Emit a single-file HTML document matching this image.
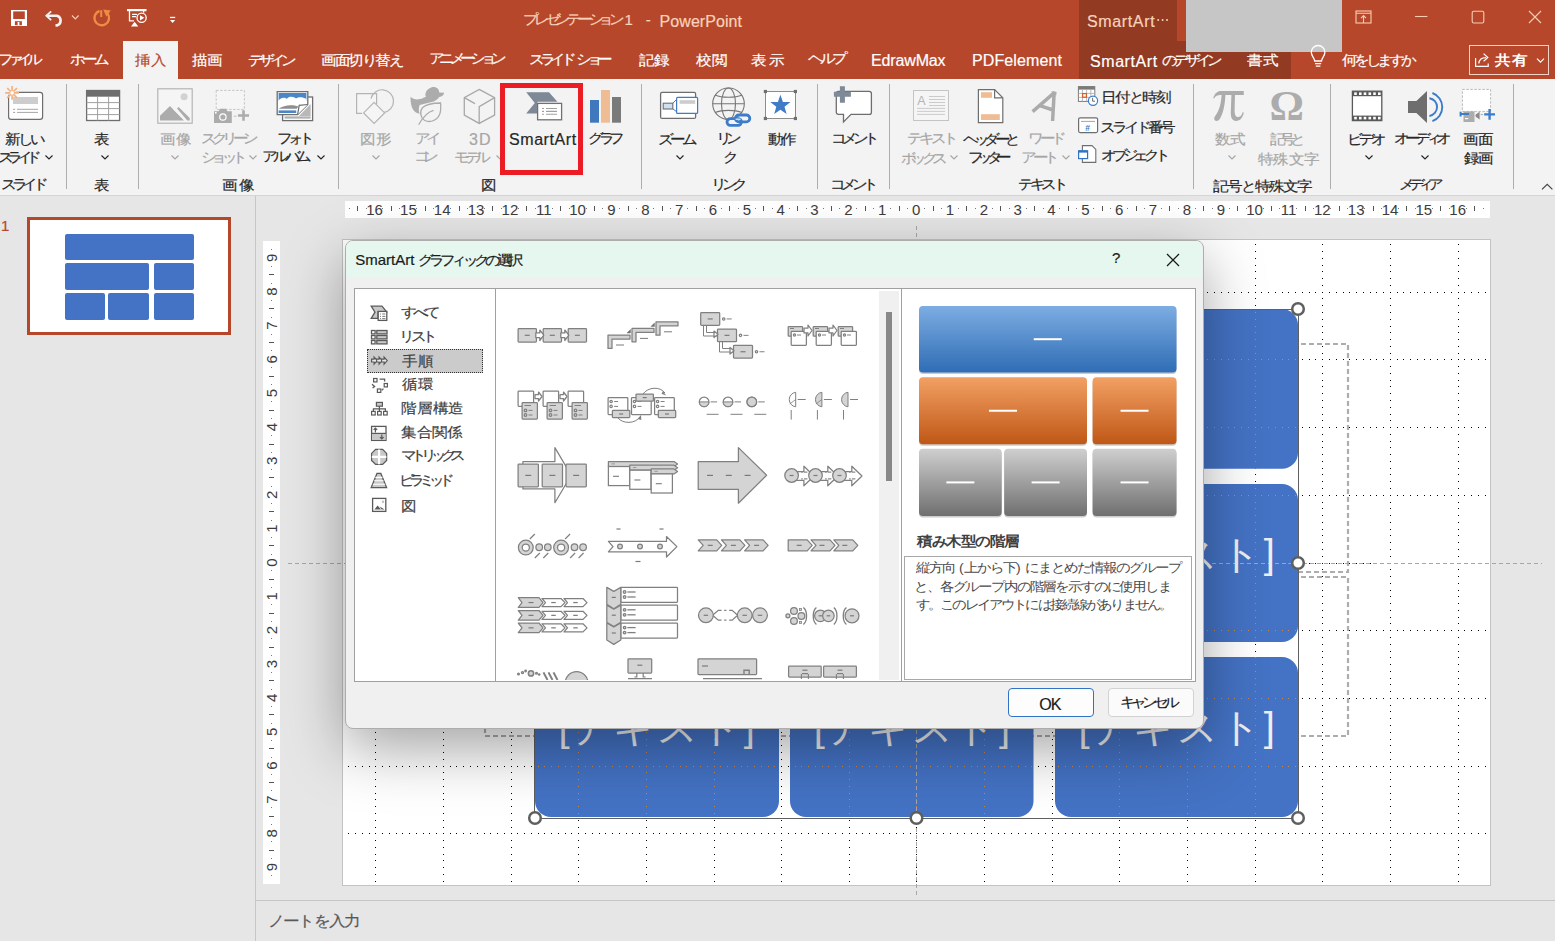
<!DOCTYPE html>
<html><head><meta charset="utf-8">
<style>
*{box-sizing:border-box;margin:0;padding:0}
html,body{width:1555px;height:941px;overflow:hidden;background:#E6E6E6;font-family:"Liberation Sans",sans-serif;color:#262626;position:relative}
.a{position:absolute}
.t{position:absolute;white-space:pre;line-height:1;-webkit-text-stroke:0.2px currentColor}
svg{position:absolute;overflow:visible}
</style></head><body>
<div class="a" style="left:0;top:0;width:1555px;height:79px;background:#B7472A"></div><div class="a" style="left:1079px;top:0;width:98px;height:41px;background:#923A22"></div><div class="a" style="left:1079px;top:41px;width:212px;height:38px;background:#923A22"></div><div class="a" style="left:1186px;top:0;width:156px;height:52px;background:#C6C6C6"></div><div class="t" style="left:523.0px;top:12.2px;font-size:15px;color:#F7D2BC;letter-spacing:-4.25px;transform:scaleY(0.9);transform-origin:0 0">プレゼンテーション</div><div class="t" style="left:624.5px;top:12.0px;font-size:15px;color:#F7D2BC">1</div><div class="t" style="left:645.7px;top:11.5px;font-size:15px;color:#F7D2BC">-</div><div class="t" style="left:659.6px;top:13.5px;font-size:16px;color:#F7D2BC;letter-spacing:0.06px">PowerPoint</div><div class="t" style="left:1087.0px;top:13.5px;font-size:16px;color:#F7D2BC;letter-spacing:0.64px">SmartArt</div><svg style="left:0;top:0" width="1200" height="40"><g fill="#F7D2BC"><circle cx="1158.2" cy="20" r="1"/><circle cx="1162.6" cy="20" r="1"/><circle cx="1167" cy="20" r="1"/></g></svg><div class="a" style="left:123px;top:41px;width:55px;height:38px;background:#F3F3F3"></div><div class="t" style="left:-2.0px;top:52.2px;font-size:15px;color:#FFFFFF;letter-spacing:-5.33px;transform:scaleY(0.9);transform-origin:0 0">ファイル</div><div class="t" style="left:70.0px;top:52.2px;font-size:15px;color:#FFFFFF;letter-spacing:-3.00px;transform:scaleY(0.9);transform-origin:0 0">ホーム</div><div class="t" style="left:192.0px;top:53.1px;font-size:15px;color:#FFFFFF;transform:scaleY(0.9);transform-origin:0 0">描画</div><div class="t" style="left:248.0px;top:53.1px;font-size:15px;color:#FFFFFF;letter-spacing:-4.00px;transform:scaleY(0.9);transform-origin:0 0">デザイン</div><div class="t" style="left:321.0px;top:53.1px;font-size:15px;color:#FFFFFF;letter-spacing:-1.40px;transform:scaleY(0.9);transform-origin:0 0">画面切り替え</div><div class="t" style="left:429.0px;top:51.3px;font-size:15px;color:#FFFFFF;letter-spacing:-4.67px;transform:scaleY(0.9);transform-origin:0 0">アニメーション</div><div class="t" style="left:529.0px;top:52.2px;font-size:15px;color:#FFFFFF;letter-spacing:-4.33px;transform:scaleY(0.9);transform-origin:0 0">スライド<span style="letter-spacing:0"> </span>ショー</div><div class="t" style="left:639.0px;top:53.1px;font-size:15px;color:#FFFFFF;transform:scaleY(0.9);transform-origin:0 0">記録</div><div class="t" style="left:696.0px;top:53.1px;font-size:15px;color:#FFFFFF;letter-spacing:1.00px;transform:scaleY(0.9);transform-origin:0 0">校閲</div><div class="t" style="left:751.0px;top:53.1px;font-size:15px;color:#FFFFFF;letter-spacing:3.00px;transform:scaleY(0.9);transform-origin:0 0">表示</div><div class="t" style="left:808.0px;top:51.3px;font-size:15px;color:#FFFFFF;letter-spacing:-3.00px;transform:scaleY(0.9);transform-origin:0 0">ヘルプ</div><div class="t" style="left:135.0px;top:53.1px;font-size:15px;color:#B7472A;letter-spacing:1.00px;transform:scaleY(0.9);transform-origin:0 0">挿入</div><div class="t" style="left:972.0px;top:53.0px;font-size:16px;color:#FFFFFF;letter-spacing:0.11px">PDFelement</div><div class="t" style="left:871.0px;top:53.0px;font-size:16px;color:#FFFFFF;letter-spacing:-0.14px">EdrawMax</div><div class="t" style="left:1090.0px;top:53.5px;font-size:16px;color:#FFFFFF;letter-spacing:0.57px">SmartArt</div><div class="t" style="left:1162.0px;top:53.1px;font-size:15px;color:#FFFFFF;letter-spacing:-3.75px;transform:scaleY(0.9);transform-origin:0 0">のデザイン</div><div class="t" style="left:1247.0px;top:53.1px;font-size:15px;color:#FFFFFF;letter-spacing:1.00px;transform:scaleY(0.9);transform-origin:0 0">書式</div><div class="t" style="left:1342.0px;top:53.1px;font-size:15px;color:#FFFFFF;letter-spacing:-3.20px;transform:scaleY(0.9);transform-origin:0 0">何をしますか</div><div class="a" style="left:1469px;top:45px;width:80px;height:30px;border:1px solid #F1D3C8"></div><div class="t" style="left:1495.0px;top:53.0px;font-size:16px;color:#FFFFFF;letter-spacing:1.00px;font-weight:bold;transform:scaleY(0.9);transform-origin:0 0;-webkit-text-stroke:0">共有</div><div class="a" style="left:0;top:79px;width:1555px;height:117px;background:#F3F3F3;border-bottom:1px solid #D5D5D5"></div><div class="a" style="left:66px;top:84px;width:1px;height:105px;background:#ADADAD"></div><div class="a" style="left:138px;top:84px;width:1px;height:105px;background:#ADADAD"></div><div class="a" style="left:338px;top:84px;width:1px;height:105px;background:#ADADAD"></div><div class="a" style="left:641px;top:84px;width:1px;height:105px;background:#ADADAD"></div><div class="a" style="left:817px;top:84px;width:1px;height:105px;background:#ADADAD"></div><div class="a" style="left:889px;top:84px;width:1px;height:105px;background:#ADADAD"></div><div class="a" style="left:1193px;top:84px;width:1px;height:105px;background:#ADADAD"></div><div class="a" style="left:1330px;top:84px;width:1px;height:105px;background:#ADADAD"></div><div class="a" style="left:1513px;top:84px;width:1px;height:105px;background:#ADADAD"></div><div class="t" style="left:5.0px;top:132.1px;font-size:15px;color:#262626;letter-spacing:-2.50px;transform:scaleY(0.9);transform-origin:0 0">新しい</div><div class="t" style="left:94.0px;top:132.1px;font-size:15px;color:#262626;transform:scaleY(0.9);transform-origin:0 0">表</div><div class="t" style="left:160.0px;top:132.1px;font-size:15px;color:#A6A6A6;letter-spacing:1.00px;transform:scaleY(0.9);transform-origin:0 0">画像</div><div class="t" style="left:201.0px;top:131.2px;font-size:15px;color:#A6A6A6;letter-spacing:-4.50px;transform:scaleY(0.9);transform-origin:0 0">スクリーン</div><div class="t" style="left:277.0px;top:131.2px;font-size:15px;color:#262626;letter-spacing:-4.00px;transform:scaleY(0.9);transform-origin:0 0">フォト</div><div class="t" style="left:360.0px;top:132.1px;font-size:15px;color:#A6A6A6;letter-spacing:1.00px;transform:scaleY(0.9);transform-origin:0 0">図形</div><div class="t" style="left:415.0px;top:131.2px;font-size:15px;color:#A6A6A6;letter-spacing:-4.00px;transform:scaleY(0.9);transform-origin:0 0">アイ</div><div class="t" style="left:469.0px;top:132.0px;font-size:16px;color:#A6A6A6;letter-spacing:1.00px">3D</div><div class="t" style="left:509.0px;top:132.0px;font-size:16px;color:#262626;letter-spacing:0.57px">SmartArt</div><div class="t" style="left:588.0px;top:131.2px;font-size:15px;color:#262626;letter-spacing:-4.50px;transform:scaleY(0.9);transform-origin:0 0">グラフ</div><div class="t" style="left:658.0px;top:132.1px;font-size:15px;color:#262626;letter-spacing:-3.00px;transform:scaleY(0.9);transform-origin:0 0">ズーム</div><div class="t" style="left:716.0px;top:131.2px;font-size:15px;color:#262626;letter-spacing:-5.00px;transform:scaleY(0.9);transform-origin:0 0">リン</div><div class="t" style="left:768.0px;top:132.1px;font-size:15px;color:#262626;letter-spacing:-2.00px;transform:scaleY(0.9);transform-origin:0 0">動作</div><div class="t" style="left:831.0px;top:131.2px;font-size:15px;color:#262626;letter-spacing:-4.00px;transform:scaleY(0.9);transform-origin:0 0">コメント</div><div class="t" style="left:907.0px;top:131.2px;font-size:15px;color:#A6A6A6;letter-spacing:-3.00px;transform:scaleY(0.9);transform-origin:0 0">テキスト</div><div class="t" style="left:963.0px;top:132.1px;font-size:15px;color:#262626;letter-spacing:-4.50px;transform:scaleY(0.9);transform-origin:0 0">ヘッダーと</div><div class="t" style="left:1028.0px;top:131.2px;font-size:15px;color:#A6A6A6;letter-spacing:-3.50px;transform:scaleY(0.9);transform-origin:0 0">ワード</div><div class="t" style="left:1215.0px;top:132.1px;font-size:15px;color:#A6A6A6;transform:scaleY(0.9);transform-origin:0 0">数式</div><div class="t" style="left:1270.0px;top:132.1px;font-size:15px;color:#A6A6A6;letter-spacing:-5.00px;transform:scaleY(0.9);transform-origin:0 0">記号と</div><div class="t" style="left:1347.0px;top:132.1px;font-size:15px;color:#262626;letter-spacing:-3.00px;transform:scaleY(0.9);transform-origin:0 0">ビデオ</div><div class="t" style="left:1394.0px;top:131.2px;font-size:15px;color:#262626;letter-spacing:-4.50px;transform:scaleY(0.9);transform-origin:0 0">オーディオ</div><div class="t" style="left:1463.0px;top:132.1px;font-size:15px;color:#262626;transform:scaleY(0.9);transform-origin:0 0">画面</div><div class="t" style="left:-2.0px;top:149.7px;font-size:15px;color:#262626;letter-spacing:-5.67px;transform:scaleY(0.9);transform-origin:0 0">スライド</div><div class="t" style="left:201.0px;top:149.7px;font-size:15px;color:#A6A6A6;letter-spacing:-4.67px;transform:scaleY(0.9);transform-origin:0 0">ショット</div><div class="t" style="left:262.0px;top:148.8px;font-size:15px;color:#262626;letter-spacing:-3.67px;transform:scaleY(0.9);transform-origin:0 0">アルバム</div><div class="t" style="left:414.0px;top:148.8px;font-size:15px;color:#A6A6A6;letter-spacing:-6.00px;transform:scaleY(0.9);transform-origin:0 0">コン</div><div class="t" style="left:454.0px;top:149.7px;font-size:15px;color:#A6A6A6;letter-spacing:-4.50px;transform:scaleY(0.9);transform-origin:0 0">モデル</div><div class="t" style="left:723.0px;top:149.7px;font-size:15px;color:#262626;transform:scaleY(0.9);transform-origin:0 0">ク</div><div class="t" style="left:901.0px;top:150.6px;font-size:15px;color:#A6A6A6;letter-spacing:-4.67px;transform:scaleY(0.9);transform-origin:0 0">ボックス</div><div class="t" style="left:968.0px;top:149.7px;font-size:15px;color:#262626;letter-spacing:-5.67px;transform:scaleY(0.9);transform-origin:0 0">フッター</div><div class="t" style="left:1021.0px;top:149.7px;font-size:15px;color:#A6A6A6;letter-spacing:-3.50px;transform:scaleY(0.9);transform-origin:0 0">アート</div><div class="t" style="left:1258.0px;top:151.5px;font-size:15px;color:#A6A6A6;letter-spacing:0.33px;transform:scaleY(0.9);transform-origin:0 0">特殊文字</div><div class="t" style="left:1464.0px;top:150.6px;font-size:15px;color:#262626;letter-spacing:-1.00px;transform:scaleY(0.9);transform-origin:0 0">録画</div><div class="t" style="left:1101.0px;top:90.1px;font-size:15px;color:#262626;letter-spacing:-1.25px;transform:scaleY(0.9);transform-origin:0 0">日付と時刻</div><div class="t" style="left:1100.0px;top:119.6px;font-size:15px;color:#262626;letter-spacing:-3.00px;transform:scaleY(0.9);transform-origin:0 0">スライド番号</div><div class="t" style="left:1101.0px;top:148.1px;font-size:15px;color:#262626;letter-spacing:-4.20px;transform:scaleY(0.9);transform-origin:0 0">オブジェクト</div><div class="t" style="left:1.0px;top:176.7px;font-size:15px;color:#262626;letter-spacing:-4.33px;transform:scaleY(0.9);transform-origin:0 0">スライド</div><div class="t" style="left:94.0px;top:177.6px;font-size:15px;color:#262626;transform:scaleY(0.9);transform-origin:0 0">表</div><div class="t" style="left:222.0px;top:177.6px;font-size:15px;color:#262626;letter-spacing:2.00px;transform:scaleY(0.9);transform-origin:0 0">画像</div><div class="t" style="left:481.0px;top:177.6px;font-size:15px;color:#262626;transform:scaleY(0.9);transform-origin:0 0">図</div><div class="t" style="left:711.0px;top:176.7px;font-size:15px;color:#262626;letter-spacing:-4.50px;transform:scaleY(0.9);transform-origin:0 0">リンク</div><div class="t" style="left:830.0px;top:176.7px;font-size:15px;color:#262626;letter-spacing:-4.00px;transform:scaleY(0.9);transform-origin:0 0">コメント</div><div class="t" style="left:1018.0px;top:176.7px;font-size:15px;color:#262626;letter-spacing:-3.33px;transform:scaleY(0.9);transform-origin:0 0">テキスト</div><div class="t" style="left:1213.0px;top:178.5px;font-size:15px;color:#262626;letter-spacing:-1.00px;transform:scaleY(0.9);transform-origin:0 0">記号と特殊文字</div><div class="t" style="left:1399.0px;top:176.7px;font-size:15px;color:#262626;letter-spacing:-5.33px;transform:scaleY(0.9);transform-origin:0 0">メディア</div><svg style="left:45px;top:155px" width="8" height="5"><path d="M0.5 0.5 L4 4 L7.5 0.5" fill="none" stroke="#262626" stroke-width="1.2"/></svg><svg style="left:101px;top:155px" width="8" height="5"><path d="M0.5 0.5 L4 4 L7.5 0.5" fill="none" stroke="#262626" stroke-width="1.2"/></svg><svg style="left:171px;top:155px" width="8" height="5"><path d="M0.5 0.5 L4 4 L7.5 0.5" fill="none" stroke="#A6A6A6" stroke-width="1.2"/></svg><svg style="left:249px;top:155px" width="8" height="5"><path d="M0.5 0.5 L4 4 L7.5 0.5" fill="none" stroke="#A6A6A6" stroke-width="1.2"/></svg><svg style="left:317px;top:155px" width="8" height="5"><path d="M0.5 0.5 L4 4 L7.5 0.5" fill="none" stroke="#262626" stroke-width="1.2"/></svg><svg style="left:372px;top:155px" width="8" height="5"><path d="M0.5 0.5 L4 4 L7.5 0.5" fill="none" stroke="#A6A6A6" stroke-width="1.2"/></svg><svg style="left:496px;top:155px" width="8" height="5"><path d="M0.5 0.5 L4 4 L7.5 0.5" fill="none" stroke="#A6A6A6" stroke-width="1.2"/></svg><svg style="left:676px;top:155px" width="8" height="5"><path d="M0.5 0.5 L4 4 L7.5 0.5" fill="none" stroke="#262626" stroke-width="1.2"/></svg><svg style="left:950px;top:155px" width="8" height="5"><path d="M0.5 0.5 L4 4 L7.5 0.5" fill="none" stroke="#A6A6A6" stroke-width="1.2"/></svg><svg style="left:1062px;top:155px" width="8" height="5"><path d="M0.5 0.5 L4 4 L7.5 0.5" fill="none" stroke="#A6A6A6" stroke-width="1.2"/></svg><svg style="left:1228px;top:155px" width="8" height="5"><path d="M0.5 0.5 L4 4 L7.5 0.5" fill="none" stroke="#A6A6A6" stroke-width="1.2"/></svg><svg style="left:1365px;top:155px" width="8" height="5"><path d="M0.5 0.5 L4 4 L7.5 0.5" fill="none" stroke="#262626" stroke-width="1.2"/></svg><svg style="left:1421px;top:155px" width="8" height="5"><path d="M0.5 0.5 L4 4 L7.5 0.5" fill="none" stroke="#262626" stroke-width="1.2"/></svg><div class="a" style="left:500px;top:83px;width:83px;height:92px;border:5px solid #EC1C24"></div><svg style="left:0;top:0" width="1555" height="80"><rect x="11" y="10" width="16" height="16" fill="#fff"/><rect x="13.2" y="11.4" width="11.6" height="7.6" fill="#B7472A"/><rect x="14.9" y="21.2" width="7" height="4" fill="#B7472A"/><rect x="17.6" y="22" width="1.8" height="3.2" fill="#fff"/><path d="M46.5 15.8 H57 A5 5 0 0 1 57 25.4 H55.5" fill="none" stroke="#F2F2F2" stroke-width="2.6"/><path d="M45 15.8 L50.5 10.8 L51.8 12 L47.6 15.8 L51.8 19.6 L50.5 20.8 Z" fill="#F2F2F2"/><path d="M72 15.5 L75.3 18.8 L78.6 15.5" fill="none" stroke="#F6CDB3" stroke-width="1.2"/><path d="M99.5 11 A7.3 7.3 0 1 0 107.6 13.6" fill="none" stroke="#EE8B45" stroke-width="2.4"/><path d="M103.2 9.6 L110.8 10.6 L106.3 16.6 Z" fill="#EE8B45"/><path d="M101.2 10.2 L101.2 17" stroke="#EE8B45" stroke-width="2"/><rect x="127" y="9" width="19.5" height="2.2" fill="#fff"/><path d="M129.5 11 V20.8 H134" fill="none" stroke="#fff" stroke-width="1.3"/><path d="M132 14.4 H137 M132 16.6 H136" stroke="#fff" stroke-width="1.2"/><circle cx="141.6" cy="17.8" r="4.6" fill="none" stroke="#fff" stroke-width="1.3"/><path d="M140 15.2 L144.3 17.8 L140 20.4 Z" fill="#fff"/><path d="M131 26.6 L134.6 21.8 L138.3 26.6 Z" fill="#fff"/><rect x="143" y="11" width="1.3" height="1.6" fill="#fff"/><rect x="170" y="16.8" width="5.2" height="1.3" fill="#fff"/><path d="M170 20 H175.2 L172.6 22.9 Z" fill="#fff"/><rect x="1356" y="11" width="15" height="12" fill="none" stroke="#F6CDB3" stroke-width="1.1"/><path d="M1356 13.2 H1371 M1363.5 23 V15.8 M1361 18.2 L1363.5 15.6 L1366 18.2" fill="none" stroke="#F6CDB3" stroke-width="1.1"/><path d="M1415 16.5 H1427.4" stroke="#F6CDB3" stroke-width="1.1"/><rect x="1472.2" y="11.2" width="11.6" height="11.8" rx="1.5" fill="none" stroke="#F6CDB3" stroke-width="1.1"/><path d="M1529 11 L1541 23 M1541 11 L1529 23" stroke="#F6CDB3" stroke-width="1.1"/><path d="M1314.7 61 C1314.7 58 1311.3 56.3 1311.3 52.3 A6.8 6.8 0 0 1 1324.9 52.3 C1324.9 56.3 1321.5 58 1321.5 61 Z" fill="none" stroke="#fff" stroke-width="1.3"/><path d="M1315 63.6 H1321.2 M1315.8 66.2 H1320.4" stroke="#fff" stroke-width="1.3"/><path d="M1475.6 58 V66.4 H1488.2 V63.5" fill="none" stroke="#fff" stroke-width="1.2"/><path d="M1478.8 63.5 C1479.2 59.5 1481.5 57.6 1486 57.6 M1483.6 53.6 L1487.8 57.6 L1483.6 61.2" fill="none" stroke="#fff" stroke-width="1.2"/><path d="M1537 58.6 L1540.5 62.2 L1544 58.6" fill="none" stroke="#fff" stroke-width="1.2"/></svg><svg style="left:0;top:0" width="1555" height="200"><rect x="8.6" y="92.4" width="34" height="27" rx="2.6" fill="#fff" stroke="#6E6E6E" stroke-width="1.2"/><rect x="13" y="97" width="25" height="7" fill="#CDCDCD"/><path d="M13 109.3 H15.2 M17 109.3 H38 M13 112.4 H15.2 M17 112.4 H38" stroke="#A6A6A6" stroke-width="1"/><circle cx="12.1" cy="92.9" r="4.2" fill="#F3F3F3"/><g stroke="#F4B183" stroke-width="1.7"><path d="M5.2 92.9 H19 M12.1 86 V99.8 M7.2 88 L17 97.8 M17 88 L7.2 97.8"/></g><circle cx="12.1" cy="92.9" r="1.8" fill="#fff"/><rect x="86.6" y="90.5" width="33" height="30" fill="#fff" stroke="#6E6E6E" stroke-width="1.3"/><rect x="86.6" y="90.5" width="33" height="6.2" fill="#6E6E6E"/><path d="M86.6 102.6 H119.6 M86.6 108.6 H119.6 M86.6 114.6 H119.6 M97.6 96.7 V120.5 M108.6 96.7 V120.5" stroke="#A0A0A0" stroke-width="1"/><rect x="157.8" y="88.8" width="34.4" height="34.4" fill="#F5F5F5" stroke="#B4B4B4" stroke-width="1.2"/><circle cx="184.1" cy="96.8" r="3.5" fill="#D2D2D2"/><path d="M160 120.6 V115.8 L170 106 L184 120.6 Z" fill="#ACACAC"/><path d="M177 108.4 L178.6 107 L189.7 118 V120.6 H187.3 Z" fill="#ACACAC"/><path d="M185.8 120.6 L174.2 109.4 L175.6 108" stroke="#F5F5F5" stroke-width="1.2" fill="none"/><rect x="216.2" y="90.4" width="28.2" height="19" fill="#F5F5F5" stroke="#C4C4C4" stroke-width="1" stroke-dasharray="2.4 1.6"/><path d="M214 111.2 H218.6 L220 108.8 H226 L227.4 111.2 H231.8 V123 H214 Z" fill="#ACACAC"/><circle cx="222.9" cy="117" r="3.2" fill="none" stroke="#fff" stroke-width="1.2"/><rect x="215" y="112" width="1.6" height="1.6" fill="#fff"/><path d="M233.8 116.2 H236.6" stroke="#B0B0B0" stroke-width="0.8"/><path d="M238 115.5 H249 M243.5 110.2 V120.8" stroke="#ACACAC" stroke-width="2.6"/><rect x="282.6" y="97" width="30" height="23.6" fill="#fff" stroke="#6E6E6E" stroke-width="1.3"/><rect x="284.6" y="116.4" width="26" height="2.2" fill="#AFAFAF"/><path d="M299 116 L310.6 104 V116 Z" fill="#B8B8B8"/><path d="M277.2 91.6 H307.8 V104.5 L297.6 114.6 H277.2 Z" fill="#fff" stroke="#6E6E6E" stroke-width="1.3"/><rect x="278.6" y="93" width="27.8" height="7.6" fill="#4A86C8"/><path d="M278.6 100.6 C281 96.8 285 97.2 287 98.8 C289 95.8 294 96.4 296 98.6 C298.5 96.6 303 97 306.4 99 V101.6 H278.6 Z" fill="#fff"/><path d="M278.6 108.8 C284 104.8 292 104.2 298.6 106.6 L296.6 108.8 Z" fill="#8E8E8E"/><rect x="278.6" y="110.4" width="17.6" height="2.6" fill="#4A86C8"/><path d="M297.6 114.6 L299.2 105.4 L307.8 104.5" fill="#fff" stroke="#6E6E6E" stroke-width="1.2"/><g fill="#F5F5F5" stroke="#B4B4B4" stroke-width="1.2"><path d="M376.6 104 V93.6 H356.6 V113.4 H362"/><path d="M371 98.6 A11.4 11.4 0 1 1 384 112.4" fill="none"/><path d="M374.1 102.4 L384.6 112.9 L374.1 123.4 L363.6 112.9 Z"/></g><path d="M410.5 96.8 C414 100.5 419 99.5 422.5 98.6 C423 97.6 424.5 97.2 426 97 C424.6 94.6 425.5 89.2 431.8 87.2 C436.6 86.4 439 89 439.2 92.4 L444.2 92.8 C443.6 95.4 441.8 96.6 439.6 96.8 C437.6 99.6 435 100.8 433.8 101.6 L419.6 105 C418.6 108 418.6 111 419.6 113.8 C414.6 113.2 410.2 108.6 410.5 96.8 Z" fill="#ACACAC"/><path d="M440.6 103 C433.6 103 427 103.6 422.4 107.8 C419.4 111.6 420.6 118 424.4 120.2 C430.2 123.4 438 120 440 113.4 C441 110 440.8 106 440.6 103 Z" fill="#F3F3F3" stroke="#ACACAC" stroke-width="1.3"/><path d="M418.6 124.8 C423 117 428.6 111.6 433.6 110.4" fill="none" stroke="#ACACAC" stroke-width="1.2"/><g fill="none" stroke="#A8A8A8" stroke-width="1.3"><path d="M479.2 89.4 L494.6 97.6 V115 L479.2 123.4 L464.3 115 V97.6 Z"/><path d="M494.6 97.6 L479.2 106.6 V123.4 M464.3 97.6 L475 103.6"/></g><path d="M526.2 92.2 H549 L557.4 101.7 H537.4 V113.6 H526.2 L534.8 102.9 Z" fill="#7F8896"/><rect x="537.6" y="103.4" width="24" height="16.4" fill="#fff" stroke="#707070" stroke-width="1.3"/><path d="M542 108.5 H544 M546 108.5 H557 M542 111.4 H544 M546 111.4 H557 M542 114.3 H544 M546 114.3 H557" stroke="#A0A0A0" stroke-width="1.1"/><rect x="590" y="100" width="9" height="22.7" fill="#3F78BD"/><rect x="601" y="90" width="9" height="32.7" fill="#F0BC94"/><rect x="612" y="97" width="9" height="25.7" fill="#7A7A7A"/><rect x="660.6" y="92.4" width="35" height="26" rx="1.5" fill="#fff" stroke="#6E6E6E" stroke-width="1.3"/><path d="M672.8 103.2 L676.4 99.6 M672.8 108.8 L676.4 111.6" stroke="#3F7BC6" stroke-width="1"/><rect x="663.2" y="103.2" width="9.6" height="5.8" fill="#CFE0F3" stroke="#6E6E6E" stroke-width="1.1"/><rect x="676.6" y="97.4" width="21" height="16" rx="1" fill="#fff" stroke="#3F7BC6" stroke-width="1.2"/><rect x="679.6" y="100.2" width="15.6" height="3.6" fill="#CCCCCC"/><g fill="none" stroke="#767676" stroke-width="1.1"><circle cx="728.5" cy="103.8" r="15.8"/><ellipse cx="728.5" cy="103.8" rx="7" ry="15.8"/><path d="M712.7 103.8 H744.3 M715 95 C722 98 735 98 742 95 M715 112.6 C722 109.6 735 109.6 742 112.6"/></g><rect x="723" y="112" width="29" height="15" fill="#F3F3F3" opacity="0"/><g fill="none" stroke="#3C7CC8" stroke-width="2.8"><rect x="727" y="118.6" width="14.4" height="6.8" rx="3.4"/><rect x="735.4" y="115" width="14.4" height="6.8" rx="3.4"/></g><path d="M735.6 119.2 L740.6 119.2" stroke="#F3F3F3" stroke-width="1.2"/><rect x="765.5" y="91.5" width="30" height="27" fill="#fff" stroke="#8C8C8C" stroke-width="1"/><rect x="763.8" y="89.9" width="3.2" height="3.2" fill="#707070"/><rect x="793.8" y="89.9" width="3.2" height="3.2" fill="#707070"/><rect x="763.8" y="116.9" width="3.2" height="3.2" fill="#707070"/><rect x="793.8" y="116.9" width="3.2" height="3.2" fill="#707070"/><polygon points="780.4,94.8 782.9,101.9 790.5,102.1 784.5,106.7 786.6,114.0 780.4,109.7 774.2,114.0 776.3,106.7 770.3,102.1 777.9,101.9" fill="#3F7BC6"/><path d="M838.5 91.3 H869.2 A2.2 2.2 0 0 1 871.4 93.5 V112.2 A2.2 2.2 0 0 1 869.2 114.4 H851 L843.5 122 V114.4 H838.5 A2.2 2.2 0 0 1 836.3 112.2 V93.5 A2.2 2.2 0 0 1 838.5 91.3 Z" fill="#fff" stroke="#6E6E6E" stroke-width="1.3"/><rect x="832.6" y="89.6" width="19.6" height="10.6" fill="#F3F3F3" opacity="0"/><path d="M833.9 94.3 H850.9 M842.4 86.2 V102.8" stroke="#7E8A98" stroke-width="5"/><rect x="913.5" y="90.5" width="35" height="30" fill="#F5F5F5" stroke="#C4C4C4" stroke-width="1"/><text x="921.5" y="105.4" font-size="12.5" fill="#B4B4B4" text-anchor="middle" font-family="Liberation Sans">A</text><path d="M929 96.5 H945 M929 99.5 H945 M929 102.5 H945 M929 105.5 H945 M917 108.4 H945 M917 111.4 H945 M917 114.4 H945" stroke="#C6C6C6" stroke-width="0.9"/><path d="M978.4 89.6 H994.6 L1002.8 97.8 V122.6 H978.4 Z" fill="#fff" stroke="#6E6E6E" stroke-width="1.2"/><path d="M994.6 89.6 V97.8 H1002.8" fill="none" stroke="#6E6E6E" stroke-width="1.2"/><rect x="981" y="92.2" width="11" height="5.6" fill="#F0BC94"/><rect x="981" y="114.2" width="18.8" height="5.8" fill="#F0BC94"/><path d="M1032.6 111.6 L1054.6 92.4 M1054.2 91.6 L1052.6 121 M1040.6 105.8 L1053 110" fill="none" stroke="#ABABAB" stroke-width="3.5"/><path d="M1051 91.4 L1056.6 92 L1056.2 95.6 Z" fill="#ABABAB"/><rect x="1078.4" y="86.6" width="16.4" height="14.8" fill="#fff" stroke="#7A7A7A" stroke-width="1"/><rect x="1078.4" y="86.6" width="16.4" height="3" fill="#7A7A7A"/><path d="M1078.4 93.4 H1094.8 M1078.4 97.4 H1094.8 M1082.4 89.6 V101.4 M1086.6 89.6 V101.4 M1090.8 89.6 V101.4" stroke="#A8A8A8" stroke-width="0.8"/><rect x="1082.6" y="93.6" width="3.8" height="3.6" fill="none" stroke="#D5602A" stroke-width="1.2"/><circle cx="1093" cy="100.8" r="4.6" fill="#fff" stroke="#3C7CC8" stroke-width="1.2"/><path d="M1092.6 97.8 V101.2 H1095" fill="none" stroke="#595959" stroke-width="0.9"/><rect x="1078.6" y="117.8" width="19" height="14.8" rx="1.5" fill="#fff" stroke="#6E6E6E" stroke-width="1.2"/><path d="M1081 121.4 H1095" stroke="#8C8C8C" stroke-width="0.8"/><text x="1087.6" y="130.6" font-size="8.5" font-weight="bold" fill="#3C7CC8" text-anchor="middle" font-family="Liberation Sans">#</text><path d="M1082.4 145.6 H1092 L1095.8 149.4 V162.4 H1082.4 Z" fill="#fff" stroke="#6E6E6E" stroke-width="1.1"/><rect x="1078.6" y="150.8" width="9" height="7.8" fill="#fff" stroke="#2F72C6" stroke-width="1.2"/><rect x="1078.6" y="150.6" width="9" height="2" fill="#2F72C6"/><path d="M1213.2 98 C1215 93 1217.5 91 1221 91 H1243.8 V95 H1235 L1234.6 110 C1234.6 115.5 1236 117 1238 117 C1240 117 1241.8 115.5 1242.6 112.2 L1243.8 112.6 C1242.8 118 1240 121 1236.2 121 C1232 121 1230.6 117.5 1230.8 112 L1231.4 95 H1225.4 C1225 104 1223.6 112 1220.6 117.5 C1219.4 120 1218 121 1216.6 121 C1215.2 121 1214.2 120 1214.2 118.6 C1214.2 116.8 1215.6 115.4 1216.8 113.4 C1219.2 109.6 1221 104 1221.6 95 H1220.4 C1217.6 95 1215.6 96 1214 98.4 Z" fill="#ACACAC"/><text x="1286.6" y="119.8" font-size="43" fill="#ACACAC" text-anchor="middle" font-family="Liberation Serif" font-weight="bold">Ω</text><rect x="1352.4" y="91.2" width="29.4" height="29.4" fill="#fff" stroke="#595959" stroke-width="1.3"/><rect x="1352.4" y="91.2" width="29.4" height="5" fill="#595959"/><rect x="1352.4" y="115.6" width="29.4" height="5" fill="#595959"/><rect x="1354.2" y="92.4" width="2.6" height="2.6" fill="#fff"/><rect x="1354.2" y="116.8" width="2.6" height="2.6" fill="#fff"/><rect x="1359.0" y="92.4" width="2.6" height="2.6" fill="#fff"/><rect x="1359.0" y="116.8" width="2.6" height="2.6" fill="#fff"/><rect x="1363.7" y="92.4" width="2.6" height="2.6" fill="#fff"/><rect x="1363.7" y="116.8" width="2.6" height="2.6" fill="#fff"/><rect x="1368.5" y="92.4" width="2.6" height="2.6" fill="#fff"/><rect x="1368.5" y="116.8" width="2.6" height="2.6" fill="#fff"/><rect x="1373.2" y="92.4" width="2.6" height="2.6" fill="#fff"/><rect x="1373.2" y="116.8" width="2.6" height="2.6" fill="#fff"/><rect x="1378.0" y="92.4" width="2.6" height="2.6" fill="#fff"/><rect x="1378.0" y="116.8" width="2.6" height="2.6" fill="#fff"/><path d="M1408 101.1 H1416.4 L1427 91 V122.9 L1416.4 113 H1408 Z" fill="#6E6E6E"/><g fill="none" stroke="#3C7CC8" stroke-width="1.9"><path d="M1429.4 98.2 A9 9 0 0 1 1429.4 116"/><path d="M1432.4 93 A15 15 0 0 1 1432.4 121.2"/></g><rect x="1462.4" y="89.4" width="28.2" height="22" fill="#fff" stroke="#B8B8B8" stroke-width="1" stroke-dasharray="2.4 1.6"/><rect x="1463.5" y="111.4" width="11" height="10.6" fill="#ACACAC"/><rect x="1465" y="118" width="3.2" height="1.2" fill="#fff"/><path d="M1475.5 114.8 L1479.6 111.8 V119.6 L1475.5 116.6 Z" fill="#8A8A8A"/><path d="M1460.6 111.8 V116.4 M1460.6 114.1 H1469" stroke="#3C7CC8" stroke-width="2"/><path d="M1480.6 114.6 H1483" stroke="#999" stroke-width="0.8"/><path d="M1484.2 114.4 H1495 M1489.6 109 V119.8" stroke="#3C7CC8" stroke-width="2.4"/><path d="M1542 189.4 L1547.2 184.4 L1552.4 189.4" fill="none" stroke="#444" stroke-width="1.2"/></svg><div class="a" style="left:255px;top:196px;width:1px;height:745px;background:#C6C6C6"></div><div class="t" style="left:1.0px;top:218.0px;font-size:15px;color:#B7472A">1</div><div class="a" style="left:27px;top:217px;width:204px;height:118px;border:3px solid #B7472A;background:#fff"></div><div class="a" style="left:64.5px;top:233.5px;width:129.5px;height:26.5px;background:#4472C4;border-radius:2px"></div><div class="a" style="left:64.5px;top:263px;width:84.30000000000001px;height:26.69999999999999px;background:#4472C4;border-radius:2px"></div><div class="a" style="left:153.8px;top:263px;width:40.19999999999999px;height:26.69999999999999px;background:#4472C4;border-radius:2px"></div><div class="a" style="left:64.5px;top:293px;width:40.2px;height:26.80000000000001px;background:#4472C4;border-radius:2px"></div><div class="a" style="left:108px;top:293px;width:40.80000000000001px;height:26.80000000000001px;background:#4472C4;border-radius:2px"></div><div class="a" style="left:153.8px;top:293px;width:40.19999999999999px;height:26.80000000000001px;background:#4472C4;border-radius:2px"></div><div class="a" style="left:345px;top:201px;width:1145px;height:17px;background:#fff"></div><div class="a" style="left:263px;top:241px;width:17px;height:643px;background:#fff"></div><svg style="left:0;top:0" width="1555" height="941"><text x="374.5" y="215" font-size="15" fill="#3C3C3C" text-anchor="middle" font-family="Liberation Sans">16</text><rect x="382" y="208" width="1" height="1" fill="#777"/><rect x="391" y="206" width="1" height="5" fill="#555"/><rect x="399" y="208" width="1" height="1" fill="#777"/><rect x="366" y="208" width="1" height="1" fill="#777"/><rect x="357" y="206" width="1" height="5" fill="#555"/><rect x="349" y="208" width="1" height="1" fill="#777"/><text x="408.4" y="215" font-size="15" fill="#3C3C3C" text-anchor="middle" font-family="Liberation Sans">15</text><rect x="416" y="208" width="1" height="1" fill="#777"/><rect x="425" y="206" width="1" height="5" fill="#555"/><rect x="433" y="208" width="1" height="1" fill="#777"/><text x="442.2" y="215" font-size="15" fill="#3C3C3C" text-anchor="middle" font-family="Liberation Sans">14</text><rect x="450" y="208" width="1" height="1" fill="#777"/><rect x="459" y="206" width="1" height="5" fill="#555"/><rect x="467" y="208" width="1" height="1" fill="#777"/><text x="476.1" y="215" font-size="15" fill="#3C3C3C" text-anchor="middle" font-family="Liberation Sans">13</text><rect x="484" y="208" width="1" height="1" fill="#777"/><rect x="492" y="206" width="1" height="5" fill="#555"/><rect x="501" y="208" width="1" height="1" fill="#777"/><text x="509.9" y="215" font-size="15" fill="#3C3C3C" text-anchor="middle" font-family="Liberation Sans">12</text><rect x="518" y="208" width="1" height="1" fill="#777"/><rect x="526" y="206" width="1" height="5" fill="#555"/><rect x="535" y="208" width="1" height="1" fill="#777"/><text x="543.8" y="215" font-size="15" fill="#3C3C3C" text-anchor="middle" font-family="Liberation Sans">11</text><rect x="552" y="208" width="1" height="1" fill="#777"/><rect x="560" y="206" width="1" height="5" fill="#555"/><rect x="569" y="208" width="1" height="1" fill="#777"/><text x="577.6" y="215" font-size="15" fill="#3C3C3C" text-anchor="middle" font-family="Liberation Sans">10</text><rect x="586" y="208" width="1" height="1" fill="#777"/><rect x="594" y="206" width="1" height="5" fill="#555"/><rect x="602" y="208" width="1" height="1" fill="#777"/><text x="611.5" y="215" font-size="15" fill="#3C3C3C" text-anchor="middle" font-family="Liberation Sans">9</text><rect x="619" y="208" width="1" height="1" fill="#777"/><rect x="628" y="206" width="1" height="5" fill="#555"/><rect x="636" y="208" width="1" height="1" fill="#777"/><text x="645.3" y="215" font-size="15" fill="#3C3C3C" text-anchor="middle" font-family="Liberation Sans">8</text><rect x="653" y="208" width="1" height="1" fill="#777"/><rect x="662" y="206" width="1" height="5" fill="#555"/><rect x="670" y="208" width="1" height="1" fill="#777"/><text x="679.1" y="215" font-size="15" fill="#3C3C3C" text-anchor="middle" font-family="Liberation Sans">7</text><rect x="687" y="208" width="1" height="1" fill="#777"/><rect x="696" y="206" width="1" height="5" fill="#555"/><rect x="704" y="208" width="1" height="1" fill="#777"/><text x="713.0" y="215" font-size="15" fill="#3C3C3C" text-anchor="middle" font-family="Liberation Sans">6</text><rect x="721" y="208" width="1" height="1" fill="#777"/><rect x="729" y="206" width="1" height="5" fill="#555"/><rect x="738" y="208" width="1" height="1" fill="#777"/><text x="746.9" y="215" font-size="15" fill="#3C3C3C" text-anchor="middle" font-family="Liberation Sans">5</text><rect x="755" y="208" width="1" height="1" fill="#777"/><rect x="763" y="206" width="1" height="5" fill="#555"/><rect x="772" y="208" width="1" height="1" fill="#777"/><text x="780.7" y="215" font-size="15" fill="#3C3C3C" text-anchor="middle" font-family="Liberation Sans">4</text><rect x="789" y="208" width="1" height="1" fill="#777"/><rect x="797" y="206" width="1" height="5" fill="#555"/><rect x="806" y="208" width="1" height="1" fill="#777"/><text x="814.5" y="215" font-size="15" fill="#3C3C3C" text-anchor="middle" font-family="Liberation Sans">3</text><rect x="823" y="208" width="1" height="1" fill="#777"/><rect x="831" y="206" width="1" height="5" fill="#555"/><rect x="839" y="208" width="1" height="1" fill="#777"/><text x="848.4" y="215" font-size="15" fill="#3C3C3C" text-anchor="middle" font-family="Liberation Sans">2</text><rect x="856" y="208" width="1" height="1" fill="#777"/><rect x="865" y="206" width="1" height="5" fill="#555"/><rect x="873" y="208" width="1" height="1" fill="#777"/><text x="882.2" y="215" font-size="15" fill="#3C3C3C" text-anchor="middle" font-family="Liberation Sans">1</text><rect x="890" y="208" width="1" height="1" fill="#777"/><rect x="899" y="206" width="1" height="5" fill="#555"/><rect x="907" y="208" width="1" height="1" fill="#777"/><text x="916.1" y="215" font-size="15" fill="#3C3C3C" text-anchor="middle" font-family="Liberation Sans">0</text><rect x="924" y="208" width="1" height="1" fill="#777"/><rect x="933" y="206" width="1" height="5" fill="#555"/><rect x="941" y="208" width="1" height="1" fill="#777"/><text x="950.0" y="215" font-size="15" fill="#3C3C3C" text-anchor="middle" font-family="Liberation Sans">1</text><rect x="958" y="208" width="1" height="1" fill="#777"/><rect x="966" y="206" width="1" height="5" fill="#555"/><rect x="975" y="208" width="1" height="1" fill="#777"/><text x="983.8" y="215" font-size="15" fill="#3C3C3C" text-anchor="middle" font-family="Liberation Sans">2</text><rect x="992" y="208" width="1" height="1" fill="#777"/><rect x="1000" y="206" width="1" height="5" fill="#555"/><rect x="1009" y="208" width="1" height="1" fill="#777"/><text x="1017.7" y="215" font-size="15" fill="#3C3C3C" text-anchor="middle" font-family="Liberation Sans">3</text><rect x="1026" y="208" width="1" height="1" fill="#777"/><rect x="1034" y="206" width="1" height="5" fill="#555"/><rect x="1043" y="208" width="1" height="1" fill="#777"/><text x="1051.5" y="215" font-size="15" fill="#3C3C3C" text-anchor="middle" font-family="Liberation Sans">4</text><rect x="1059" y="208" width="1" height="1" fill="#777"/><rect x="1068" y="206" width="1" height="5" fill="#555"/><rect x="1076" y="208" width="1" height="1" fill="#777"/><text x="1085.3" y="215" font-size="15" fill="#3C3C3C" text-anchor="middle" font-family="Liberation Sans">5</text><rect x="1093" y="208" width="1" height="1" fill="#777"/><rect x="1102" y="206" width="1" height="5" fill="#555"/><rect x="1110" y="208" width="1" height="1" fill="#777"/><text x="1119.2" y="215" font-size="15" fill="#3C3C3C" text-anchor="middle" font-family="Liberation Sans">6</text><rect x="1127" y="208" width="1" height="1" fill="#777"/><rect x="1136" y="206" width="1" height="5" fill="#555"/><rect x="1144" y="208" width="1" height="1" fill="#777"/><text x="1153.0" y="215" font-size="15" fill="#3C3C3C" text-anchor="middle" font-family="Liberation Sans">7</text><rect x="1161" y="208" width="1" height="1" fill="#777"/><rect x="1169" y="206" width="1" height="5" fill="#555"/><rect x="1178" y="208" width="1" height="1" fill="#777"/><text x="1186.9" y="215" font-size="15" fill="#3C3C3C" text-anchor="middle" font-family="Liberation Sans">8</text><rect x="1195" y="208" width="1" height="1" fill="#777"/><rect x="1203" y="206" width="1" height="5" fill="#555"/><rect x="1212" y="208" width="1" height="1" fill="#777"/><text x="1220.8" y="215" font-size="15" fill="#3C3C3C" text-anchor="middle" font-family="Liberation Sans">9</text><rect x="1229" y="208" width="1" height="1" fill="#777"/><rect x="1237" y="206" width="1" height="5" fill="#555"/><rect x="1246" y="208" width="1" height="1" fill="#777"/><text x="1254.6" y="215" font-size="15" fill="#3C3C3C" text-anchor="middle" font-family="Liberation Sans">10</text><rect x="1263" y="208" width="1" height="1" fill="#777"/><rect x="1271" y="206" width="1" height="5" fill="#555"/><rect x="1279" y="208" width="1" height="1" fill="#777"/><text x="1288.5" y="215" font-size="15" fill="#3C3C3C" text-anchor="middle" font-family="Liberation Sans">11</text><rect x="1296" y="208" width="1" height="1" fill="#777"/><rect x="1305" y="206" width="1" height="5" fill="#555"/><rect x="1313" y="208" width="1" height="1" fill="#777"/><text x="1322.3" y="215" font-size="15" fill="#3C3C3C" text-anchor="middle" font-family="Liberation Sans">12</text><rect x="1330" y="208" width="1" height="1" fill="#777"/><rect x="1339" y="206" width="1" height="5" fill="#555"/><rect x="1347" y="208" width="1" height="1" fill="#777"/><text x="1356.2" y="215" font-size="15" fill="#3C3C3C" text-anchor="middle" font-family="Liberation Sans">13</text><rect x="1364" y="208" width="1" height="1" fill="#777"/><rect x="1373" y="206" width="1" height="5" fill="#555"/><rect x="1381" y="208" width="1" height="1" fill="#777"/><text x="1390.0" y="215" font-size="15" fill="#3C3C3C" text-anchor="middle" font-family="Liberation Sans">14</text><rect x="1398" y="208" width="1" height="1" fill="#777"/><rect x="1406" y="206" width="1" height="5" fill="#555"/><rect x="1415" y="208" width="1" height="1" fill="#777"/><text x="1423.8" y="215" font-size="15" fill="#3C3C3C" text-anchor="middle" font-family="Liberation Sans">15</text><rect x="1432" y="208" width="1" height="1" fill="#777"/><rect x="1440" y="206" width="1" height="5" fill="#555"/><rect x="1449" y="208" width="1" height="1" fill="#777"/><text x="1457.7" y="215" font-size="15" fill="#3C3C3C" text-anchor="middle" font-family="Liberation Sans">16</text><rect x="1466" y="208" width="1" height="1" fill="#777"/><rect x="1474" y="206" width="1" height="5" fill="#555"/><rect x="1483" y="208" width="1" height="1" fill="#777"/><text x="0" y="0" font-size="15" fill="#3C3C3C" text-anchor="middle" font-family="Liberation Sans" transform="translate(277 257.8) rotate(-90)">9</text><rect x="271" y="266" width="1" height="1" fill="#777"/><rect x="269" y="274" width="5" height="1" fill="#555"/><rect x="271" y="283" width="1" height="1" fill="#777"/><rect x="271" y="249" width="1" height="1" fill="#777"/><text x="0" y="0" font-size="15" fill="#3C3C3C" text-anchor="middle" font-family="Liberation Sans" transform="translate(277 291.7) rotate(-90)">8</text><rect x="271" y="300" width="1" height="1" fill="#777"/><rect x="269" y="308" width="5" height="1" fill="#555"/><rect x="271" y="317" width="1" height="1" fill="#777"/><text x="0" y="0" font-size="15" fill="#3C3C3C" text-anchor="middle" font-family="Liberation Sans" transform="translate(277 325.5) rotate(-90)">7</text><rect x="271" y="334" width="1" height="1" fill="#777"/><rect x="269" y="342" width="5" height="1" fill="#555"/><rect x="271" y="350" width="1" height="1" fill="#777"/><text x="0" y="0" font-size="15" fill="#3C3C3C" text-anchor="middle" font-family="Liberation Sans" transform="translate(277 359.4) rotate(-90)">6</text><rect x="271" y="367" width="1" height="1" fill="#777"/><rect x="269" y="376" width="5" height="1" fill="#555"/><rect x="271" y="384" width="1" height="1" fill="#777"/><text x="0" y="0" font-size="15" fill="#3C3C3C" text-anchor="middle" font-family="Liberation Sans" transform="translate(277 393.2) rotate(-90)">5</text><rect x="271" y="401" width="1" height="1" fill="#777"/><rect x="269" y="410" width="5" height="1" fill="#555"/><rect x="271" y="418" width="1" height="1" fill="#777"/><text x="0" y="0" font-size="15" fill="#3C3C3C" text-anchor="middle" font-family="Liberation Sans" transform="translate(277 427.1) rotate(-90)">4</text><rect x="271" y="435" width="1" height="1" fill="#777"/><rect x="269" y="444" width="5" height="1" fill="#555"/><rect x="271" y="452" width="1" height="1" fill="#777"/><text x="0" y="0" font-size="15" fill="#3C3C3C" text-anchor="middle" font-family="Liberation Sans" transform="translate(277 460.9) rotate(-90)">3</text><rect x="271" y="469" width="1" height="1" fill="#777"/><rect x="269" y="477" width="5" height="1" fill="#555"/><rect x="271" y="486" width="1" height="1" fill="#777"/><text x="0" y="0" font-size="15" fill="#3C3C3C" text-anchor="middle" font-family="Liberation Sans" transform="translate(277 494.8) rotate(-90)">2</text><rect x="271" y="503" width="1" height="1" fill="#777"/><rect x="269" y="511" width="5" height="1" fill="#555"/><rect x="271" y="520" width="1" height="1" fill="#777"/><text x="0" y="0" font-size="15" fill="#3C3C3C" text-anchor="middle" font-family="Liberation Sans" transform="translate(277 528.6) rotate(-90)">1</text><rect x="271" y="537" width="1" height="1" fill="#777"/><rect x="269" y="545" width="5" height="1" fill="#555"/><rect x="271" y="554" width="1" height="1" fill="#777"/><text x="0" y="0" font-size="15" fill="#3C3C3C" text-anchor="middle" font-family="Liberation Sans" transform="translate(277 562.5) rotate(-90)">0</text><rect x="271" y="570" width="1" height="1" fill="#777"/><rect x="269" y="579" width="5" height="1" fill="#555"/><rect x="271" y="587" width="1" height="1" fill="#777"/><text x="0" y="0" font-size="15" fill="#3C3C3C" text-anchor="middle" font-family="Liberation Sans" transform="translate(277 596.4) rotate(-90)">1</text><rect x="271" y="604" width="1" height="1" fill="#777"/><rect x="269" y="613" width="5" height="1" fill="#555"/><rect x="271" y="621" width="1" height="1" fill="#777"/><text x="0" y="0" font-size="15" fill="#3C3C3C" text-anchor="middle" font-family="Liberation Sans" transform="translate(277 630.2) rotate(-90)">2</text><rect x="271" y="638" width="1" height="1" fill="#777"/><rect x="269" y="647" width="5" height="1" fill="#555"/><rect x="271" y="655" width="1" height="1" fill="#777"/><text x="0" y="0" font-size="15" fill="#3C3C3C" text-anchor="middle" font-family="Liberation Sans" transform="translate(277 664.0) rotate(-90)">3</text><rect x="271" y="672" width="1" height="1" fill="#777"/><rect x="269" y="680" width="5" height="1" fill="#555"/><rect x="271" y="689" width="1" height="1" fill="#777"/><text x="0" y="0" font-size="15" fill="#3C3C3C" text-anchor="middle" font-family="Liberation Sans" transform="translate(277 697.9) rotate(-90)">4</text><rect x="271" y="706" width="1" height="1" fill="#777"/><rect x="269" y="714" width="5" height="1" fill="#555"/><rect x="271" y="723" width="1" height="1" fill="#777"/><text x="0" y="0" font-size="15" fill="#3C3C3C" text-anchor="middle" font-family="Liberation Sans" transform="translate(277 731.8) rotate(-90)">5</text><rect x="271" y="740" width="1" height="1" fill="#777"/><rect x="269" y="748" width="5" height="1" fill="#555"/><rect x="271" y="757" width="1" height="1" fill="#777"/><text x="0" y="0" font-size="15" fill="#3C3C3C" text-anchor="middle" font-family="Liberation Sans" transform="translate(277 765.6) rotate(-90)">6</text><rect x="271" y="774" width="1" height="1" fill="#777"/><rect x="269" y="782" width="5" height="1" fill="#555"/><rect x="271" y="790" width="1" height="1" fill="#777"/><text x="0" y="0" font-size="15" fill="#3C3C3C" text-anchor="middle" font-family="Liberation Sans" transform="translate(277 799.5) rotate(-90)">7</text><rect x="271" y="807" width="1" height="1" fill="#777"/><rect x="269" y="816" width="5" height="1" fill="#555"/><rect x="271" y="824" width="1" height="1" fill="#777"/><text x="0" y="0" font-size="15" fill="#3C3C3C" text-anchor="middle" font-family="Liberation Sans" transform="translate(277 833.3) rotate(-90)">8</text><rect x="271" y="841" width="1" height="1" fill="#777"/><rect x="269" y="850" width="5" height="1" fill="#555"/><rect x="271" y="858" width="1" height="1" fill="#777"/><text x="0" y="0" font-size="15" fill="#3C3C3C" text-anchor="middle" font-family="Liberation Sans" transform="translate(277 867.2) rotate(-90)">9</text><rect x="271" y="875" width="1" height="1" fill="#777"/></svg><div class="a" style="left:342px;top:239px;width:1149px;height:647px;background:#fff;border:1px solid #C3C3C3"></div><svg style="left:0;top:0" width="1555" height="941"><rect x="485" y="344" width="863" height="228" fill="none" stroke="#ADADAD" stroke-width="2.2" stroke-dasharray="5 3"/><rect x="485" y="577" width="863" height="159" fill="none" stroke="#ADADAD" stroke-width="2.2" stroke-dasharray="5 3"/><rect x="535" y="309" width="763" height="159.7" rx="16" fill="#4472C4"/><rect x="535" y="484" width="498.5" height="158" rx="16" fill="#4472C4"/><rect x="1055" y="484" width="243" height="158" rx="16" fill="#4472C4"/><rect x="535" y="657" width="244" height="160" rx="16" fill="#4472C4"/><rect x="790" y="657" width="243.5" height="160" rx="16" fill="#4472C4"/><rect x="1055" y="657" width="243" height="160" rx="16" fill="#4472C4"/><defs><clipPath id="shpclip"><rect x="535" y="309" width="763" height="159.7" rx="16"/><rect x="535" y="484" width="498.5" height="158" rx="16"/><rect x="1055" y="484" width="243" height="158" rx="16"/><rect x="535" y="657" width="244" height="160" rx="16"/><rect x="790" y="657" width="243.5" height="160" rx="16"/><rect x="1055" y="657" width="243" height="160" rx="16"/></clipPath><path id="gdots" d="M375 244h1v1h-1zM375 251h1v1h-1zM375 258h1v1h-1zM375 265h1v1h-1zM375 271h1v1h-1zM375 278h1v1h-1zM375 285h1v1h-1zM375 292h1v1h-1zM375 298h1v1h-1zM375 305h1v1h-1zM375 312h1v1h-1zM375 319h1v1h-1zM375 326h1v1h-1zM375 332h1v1h-1zM375 339h1v1h-1zM375 346h1v1h-1zM375 353h1v1h-1zM375 359h1v1h-1zM375 366h1v1h-1zM375 373h1v1h-1zM375 380h1v1h-1zM375 386h1v1h-1zM375 393h1v1h-1zM375 400h1v1h-1zM375 407h1v1h-1zM375 414h1v1h-1zM375 420h1v1h-1zM375 427h1v1h-1zM375 434h1v1h-1zM375 441h1v1h-1zM375 447h1v1h-1zM375 454h1v1h-1zM375 461h1v1h-1zM375 468h1v1h-1zM375 474h1v1h-1zM375 481h1v1h-1zM375 488h1v1h-1zM375 495h1v1h-1zM375 502h1v1h-1zM375 508h1v1h-1zM375 515h1v1h-1zM375 522h1v1h-1zM375 529h1v1h-1zM375 535h1v1h-1zM375 542h1v1h-1zM375 549h1v1h-1zM375 556h1v1h-1zM375 563h1v1h-1zM375 569h1v1h-1zM375 576h1v1h-1zM375 583h1v1h-1zM375 590h1v1h-1zM375 596h1v1h-1zM375 603h1v1h-1zM375 610h1v1h-1zM375 617h1v1h-1zM375 623h1v1h-1zM375 630h1v1h-1zM375 637h1v1h-1zM375 644h1v1h-1zM375 651h1v1h-1zM375 657h1v1h-1zM375 664h1v1h-1zM375 671h1v1h-1zM375 678h1v1h-1zM375 684h1v1h-1zM375 691h1v1h-1zM375 698h1v1h-1zM375 705h1v1h-1zM375 711h1v1h-1zM375 718h1v1h-1zM375 725h1v1h-1zM375 732h1v1h-1zM375 739h1v1h-1zM375 745h1v1h-1zM375 752h1v1h-1zM375 759h1v1h-1zM375 766h1v1h-1zM375 772h1v1h-1zM375 779h1v1h-1zM375 786h1v1h-1zM375 793h1v1h-1zM375 799h1v1h-1zM375 806h1v1h-1zM375 813h1v1h-1zM375 820h1v1h-1zM375 827h1v1h-1zM375 833h1v1h-1zM375 840h1v1h-1zM375 847h1v1h-1zM375 854h1v1h-1zM375 860h1v1h-1zM375 867h1v1h-1zM375 874h1v1h-1zM375 881h1v1h-1zM443 244h1v1h-1zM443 251h1v1h-1zM443 258h1v1h-1zM443 265h1v1h-1zM443 271h1v1h-1zM443 278h1v1h-1zM443 285h1v1h-1zM443 292h1v1h-1zM443 298h1v1h-1zM443 305h1v1h-1zM443 312h1v1h-1zM443 319h1v1h-1zM443 326h1v1h-1zM443 332h1v1h-1zM443 339h1v1h-1zM443 346h1v1h-1zM443 353h1v1h-1zM443 359h1v1h-1zM443 366h1v1h-1zM443 373h1v1h-1zM443 380h1v1h-1zM443 386h1v1h-1zM443 393h1v1h-1zM443 400h1v1h-1zM443 407h1v1h-1zM443 414h1v1h-1zM443 420h1v1h-1zM443 427h1v1h-1zM443 434h1v1h-1zM443 441h1v1h-1zM443 447h1v1h-1zM443 454h1v1h-1zM443 461h1v1h-1zM443 468h1v1h-1zM443 474h1v1h-1zM443 481h1v1h-1zM443 488h1v1h-1zM443 495h1v1h-1zM443 502h1v1h-1zM443 508h1v1h-1zM443 515h1v1h-1zM443 522h1v1h-1zM443 529h1v1h-1zM443 535h1v1h-1zM443 542h1v1h-1zM443 549h1v1h-1zM443 556h1v1h-1zM443 563h1v1h-1zM443 569h1v1h-1zM443 576h1v1h-1zM443 583h1v1h-1zM443 590h1v1h-1zM443 596h1v1h-1zM443 603h1v1h-1zM443 610h1v1h-1zM443 617h1v1h-1zM443 623h1v1h-1zM443 630h1v1h-1zM443 637h1v1h-1zM443 644h1v1h-1zM443 651h1v1h-1zM443 657h1v1h-1zM443 664h1v1h-1zM443 671h1v1h-1zM443 678h1v1h-1zM443 684h1v1h-1zM443 691h1v1h-1zM443 698h1v1h-1zM443 705h1v1h-1zM443 711h1v1h-1zM443 718h1v1h-1zM443 725h1v1h-1zM443 732h1v1h-1zM443 739h1v1h-1zM443 745h1v1h-1zM443 752h1v1h-1zM443 759h1v1h-1zM443 766h1v1h-1zM443 772h1v1h-1zM443 779h1v1h-1zM443 786h1v1h-1zM443 793h1v1h-1zM443 799h1v1h-1zM443 806h1v1h-1zM443 813h1v1h-1zM443 820h1v1h-1zM443 827h1v1h-1zM443 833h1v1h-1zM443 840h1v1h-1zM443 847h1v1h-1zM443 854h1v1h-1zM443 860h1v1h-1zM443 867h1v1h-1zM443 874h1v1h-1zM443 881h1v1h-1zM511 244h1v1h-1zM511 251h1v1h-1zM511 258h1v1h-1zM511 265h1v1h-1zM511 271h1v1h-1zM511 278h1v1h-1zM511 285h1v1h-1zM511 292h1v1h-1zM511 298h1v1h-1zM511 305h1v1h-1zM511 312h1v1h-1zM511 319h1v1h-1zM511 326h1v1h-1zM511 332h1v1h-1zM511 339h1v1h-1zM511 346h1v1h-1zM511 353h1v1h-1zM511 359h1v1h-1zM511 366h1v1h-1zM511 373h1v1h-1zM511 380h1v1h-1zM511 386h1v1h-1zM511 393h1v1h-1zM511 400h1v1h-1zM511 407h1v1h-1zM511 414h1v1h-1zM511 420h1v1h-1zM511 427h1v1h-1zM511 434h1v1h-1zM511 441h1v1h-1zM511 447h1v1h-1zM511 454h1v1h-1zM511 461h1v1h-1zM511 468h1v1h-1zM511 474h1v1h-1zM511 481h1v1h-1zM511 488h1v1h-1zM511 495h1v1h-1zM511 502h1v1h-1zM511 508h1v1h-1zM511 515h1v1h-1zM511 522h1v1h-1zM511 529h1v1h-1zM511 535h1v1h-1zM511 542h1v1h-1zM511 549h1v1h-1zM511 556h1v1h-1zM511 563h1v1h-1zM511 569h1v1h-1zM511 576h1v1h-1zM511 583h1v1h-1zM511 590h1v1h-1zM511 596h1v1h-1zM511 603h1v1h-1zM511 610h1v1h-1zM511 617h1v1h-1zM511 623h1v1h-1zM511 630h1v1h-1zM511 637h1v1h-1zM511 644h1v1h-1zM511 651h1v1h-1zM511 657h1v1h-1zM511 664h1v1h-1zM511 671h1v1h-1zM511 678h1v1h-1zM511 684h1v1h-1zM511 691h1v1h-1zM511 698h1v1h-1zM511 705h1v1h-1zM511 711h1v1h-1zM511 718h1v1h-1zM511 725h1v1h-1zM511 732h1v1h-1zM511 739h1v1h-1zM511 745h1v1h-1zM511 752h1v1h-1zM511 759h1v1h-1zM511 766h1v1h-1zM511 772h1v1h-1zM511 779h1v1h-1zM511 786h1v1h-1zM511 793h1v1h-1zM511 799h1v1h-1zM511 806h1v1h-1zM511 813h1v1h-1zM511 820h1v1h-1zM511 827h1v1h-1zM511 833h1v1h-1zM511 840h1v1h-1zM511 847h1v1h-1zM511 854h1v1h-1zM511 860h1v1h-1zM511 867h1v1h-1zM511 874h1v1h-1zM511 881h1v1h-1zM578 244h1v1h-1zM578 251h1v1h-1zM578 258h1v1h-1zM578 265h1v1h-1zM578 271h1v1h-1zM578 278h1v1h-1zM578 285h1v1h-1zM578 292h1v1h-1zM578 298h1v1h-1zM578 305h1v1h-1zM578 312h1v1h-1zM578 319h1v1h-1zM578 326h1v1h-1zM578 332h1v1h-1zM578 339h1v1h-1zM578 346h1v1h-1zM578 353h1v1h-1zM578 359h1v1h-1zM578 366h1v1h-1zM578 373h1v1h-1zM578 380h1v1h-1zM578 386h1v1h-1zM578 393h1v1h-1zM578 400h1v1h-1zM578 407h1v1h-1zM578 414h1v1h-1zM578 420h1v1h-1zM578 427h1v1h-1zM578 434h1v1h-1zM578 441h1v1h-1zM578 447h1v1h-1zM578 454h1v1h-1zM578 461h1v1h-1zM578 468h1v1h-1zM578 474h1v1h-1zM578 481h1v1h-1zM578 488h1v1h-1zM578 495h1v1h-1zM578 502h1v1h-1zM578 508h1v1h-1zM578 515h1v1h-1zM578 522h1v1h-1zM578 529h1v1h-1zM578 535h1v1h-1zM578 542h1v1h-1zM578 549h1v1h-1zM578 556h1v1h-1zM578 563h1v1h-1zM578 569h1v1h-1zM578 576h1v1h-1zM578 583h1v1h-1zM578 590h1v1h-1zM578 596h1v1h-1zM578 603h1v1h-1zM578 610h1v1h-1zM578 617h1v1h-1zM578 623h1v1h-1zM578 630h1v1h-1zM578 637h1v1h-1zM578 644h1v1h-1zM578 651h1v1h-1zM578 657h1v1h-1zM578 664h1v1h-1zM578 671h1v1h-1zM578 678h1v1h-1zM578 684h1v1h-1zM578 691h1v1h-1zM578 698h1v1h-1zM578 705h1v1h-1zM578 711h1v1h-1zM578 718h1v1h-1zM578 725h1v1h-1zM578 732h1v1h-1zM578 739h1v1h-1zM578 745h1v1h-1zM578 752h1v1h-1zM578 759h1v1h-1zM578 766h1v1h-1zM578 772h1v1h-1zM578 779h1v1h-1zM578 786h1v1h-1zM578 793h1v1h-1zM578 799h1v1h-1zM578 806h1v1h-1zM578 813h1v1h-1zM578 820h1v1h-1zM578 827h1v1h-1zM578 833h1v1h-1zM578 840h1v1h-1zM578 847h1v1h-1zM578 854h1v1h-1zM578 860h1v1h-1zM578 867h1v1h-1zM578 874h1v1h-1zM578 881h1v1h-1zM646 244h1v1h-1zM646 251h1v1h-1zM646 258h1v1h-1zM646 265h1v1h-1zM646 271h1v1h-1zM646 278h1v1h-1zM646 285h1v1h-1zM646 292h1v1h-1zM646 298h1v1h-1zM646 305h1v1h-1zM646 312h1v1h-1zM646 319h1v1h-1zM646 326h1v1h-1zM646 332h1v1h-1zM646 339h1v1h-1zM646 346h1v1h-1zM646 353h1v1h-1zM646 359h1v1h-1zM646 366h1v1h-1zM646 373h1v1h-1zM646 380h1v1h-1zM646 386h1v1h-1zM646 393h1v1h-1zM646 400h1v1h-1zM646 407h1v1h-1zM646 414h1v1h-1zM646 420h1v1h-1zM646 427h1v1h-1zM646 434h1v1h-1zM646 441h1v1h-1zM646 447h1v1h-1zM646 454h1v1h-1zM646 461h1v1h-1zM646 468h1v1h-1zM646 474h1v1h-1zM646 481h1v1h-1zM646 488h1v1h-1zM646 495h1v1h-1zM646 502h1v1h-1zM646 508h1v1h-1zM646 515h1v1h-1zM646 522h1v1h-1zM646 529h1v1h-1zM646 535h1v1h-1zM646 542h1v1h-1zM646 549h1v1h-1zM646 556h1v1h-1zM646 563h1v1h-1zM646 569h1v1h-1zM646 576h1v1h-1zM646 583h1v1h-1zM646 590h1v1h-1zM646 596h1v1h-1zM646 603h1v1h-1zM646 610h1v1h-1zM646 617h1v1h-1zM646 623h1v1h-1zM646 630h1v1h-1zM646 637h1v1h-1zM646 644h1v1h-1zM646 651h1v1h-1zM646 657h1v1h-1zM646 664h1v1h-1zM646 671h1v1h-1zM646 678h1v1h-1zM646 684h1v1h-1zM646 691h1v1h-1zM646 698h1v1h-1zM646 705h1v1h-1zM646 711h1v1h-1zM646 718h1v1h-1zM646 725h1v1h-1zM646 732h1v1h-1zM646 739h1v1h-1zM646 745h1v1h-1zM646 752h1v1h-1zM646 759h1v1h-1zM646 766h1v1h-1zM646 772h1v1h-1zM646 779h1v1h-1zM646 786h1v1h-1zM646 793h1v1h-1zM646 799h1v1h-1zM646 806h1v1h-1zM646 813h1v1h-1zM646 820h1v1h-1zM646 827h1v1h-1zM646 833h1v1h-1zM646 840h1v1h-1zM646 847h1v1h-1zM646 854h1v1h-1zM646 860h1v1h-1zM646 867h1v1h-1zM646 874h1v1h-1zM646 881h1v1h-1zM714 244h1v1h-1zM714 251h1v1h-1zM714 258h1v1h-1zM714 265h1v1h-1zM714 271h1v1h-1zM714 278h1v1h-1zM714 285h1v1h-1zM714 292h1v1h-1zM714 298h1v1h-1zM714 305h1v1h-1zM714 312h1v1h-1zM714 319h1v1h-1zM714 326h1v1h-1zM714 332h1v1h-1zM714 339h1v1h-1zM714 346h1v1h-1zM714 353h1v1h-1zM714 359h1v1h-1zM714 366h1v1h-1zM714 373h1v1h-1zM714 380h1v1h-1zM714 386h1v1h-1zM714 393h1v1h-1zM714 400h1v1h-1zM714 407h1v1h-1zM714 414h1v1h-1zM714 420h1v1h-1zM714 427h1v1h-1zM714 434h1v1h-1zM714 441h1v1h-1zM714 447h1v1h-1zM714 454h1v1h-1zM714 461h1v1h-1zM714 468h1v1h-1zM714 474h1v1h-1zM714 481h1v1h-1zM714 488h1v1h-1zM714 495h1v1h-1zM714 502h1v1h-1zM714 508h1v1h-1zM714 515h1v1h-1zM714 522h1v1h-1zM714 529h1v1h-1zM714 535h1v1h-1zM714 542h1v1h-1zM714 549h1v1h-1zM714 556h1v1h-1zM714 563h1v1h-1zM714 569h1v1h-1zM714 576h1v1h-1zM714 583h1v1h-1zM714 590h1v1h-1zM714 596h1v1h-1zM714 603h1v1h-1zM714 610h1v1h-1zM714 617h1v1h-1zM714 623h1v1h-1zM714 630h1v1h-1zM714 637h1v1h-1zM714 644h1v1h-1zM714 651h1v1h-1zM714 657h1v1h-1zM714 664h1v1h-1zM714 671h1v1h-1zM714 678h1v1h-1zM714 684h1v1h-1zM714 691h1v1h-1zM714 698h1v1h-1zM714 705h1v1h-1zM714 711h1v1h-1zM714 718h1v1h-1zM714 725h1v1h-1zM714 732h1v1h-1zM714 739h1v1h-1zM714 745h1v1h-1zM714 752h1v1h-1zM714 759h1v1h-1zM714 766h1v1h-1zM714 772h1v1h-1zM714 779h1v1h-1zM714 786h1v1h-1zM714 793h1v1h-1zM714 799h1v1h-1zM714 806h1v1h-1zM714 813h1v1h-1zM714 820h1v1h-1zM714 827h1v1h-1zM714 833h1v1h-1zM714 840h1v1h-1zM714 847h1v1h-1zM714 854h1v1h-1zM714 860h1v1h-1zM714 867h1v1h-1zM714 874h1v1h-1zM714 881h1v1h-1zM781 244h1v1h-1zM781 251h1v1h-1zM781 258h1v1h-1zM781 265h1v1h-1zM781 271h1v1h-1zM781 278h1v1h-1zM781 285h1v1h-1zM781 292h1v1h-1zM781 298h1v1h-1zM781 305h1v1h-1zM781 312h1v1h-1zM781 319h1v1h-1zM781 326h1v1h-1zM781 332h1v1h-1zM781 339h1v1h-1zM781 346h1v1h-1zM781 353h1v1h-1zM781 359h1v1h-1zM781 366h1v1h-1zM781 373h1v1h-1zM781 380h1v1h-1zM781 386h1v1h-1zM781 393h1v1h-1zM781 400h1v1h-1zM781 407h1v1h-1zM781 414h1v1h-1zM781 420h1v1h-1zM781 427h1v1h-1zM781 434h1v1h-1zM781 441h1v1h-1zM781 447h1v1h-1zM781 454h1v1h-1zM781 461h1v1h-1zM781 468h1v1h-1zM781 474h1v1h-1zM781 481h1v1h-1zM781 488h1v1h-1zM781 495h1v1h-1zM781 502h1v1h-1zM781 508h1v1h-1zM781 515h1v1h-1zM781 522h1v1h-1zM781 529h1v1h-1zM781 535h1v1h-1zM781 542h1v1h-1zM781 549h1v1h-1zM781 556h1v1h-1zM781 563h1v1h-1zM781 569h1v1h-1zM781 576h1v1h-1zM781 583h1v1h-1zM781 590h1v1h-1zM781 596h1v1h-1zM781 603h1v1h-1zM781 610h1v1h-1zM781 617h1v1h-1zM781 623h1v1h-1zM781 630h1v1h-1zM781 637h1v1h-1zM781 644h1v1h-1zM781 651h1v1h-1zM781 657h1v1h-1zM781 664h1v1h-1zM781 671h1v1h-1zM781 678h1v1h-1zM781 684h1v1h-1zM781 691h1v1h-1zM781 698h1v1h-1zM781 705h1v1h-1zM781 711h1v1h-1zM781 718h1v1h-1zM781 725h1v1h-1zM781 732h1v1h-1zM781 739h1v1h-1zM781 745h1v1h-1zM781 752h1v1h-1zM781 759h1v1h-1zM781 766h1v1h-1zM781 772h1v1h-1zM781 779h1v1h-1zM781 786h1v1h-1zM781 793h1v1h-1zM781 799h1v1h-1zM781 806h1v1h-1zM781 813h1v1h-1zM781 820h1v1h-1zM781 827h1v1h-1zM781 833h1v1h-1zM781 840h1v1h-1zM781 847h1v1h-1zM781 854h1v1h-1zM781 860h1v1h-1zM781 867h1v1h-1zM781 874h1v1h-1zM781 881h1v1h-1zM849 244h1v1h-1zM849 251h1v1h-1zM849 258h1v1h-1zM849 265h1v1h-1zM849 271h1v1h-1zM849 278h1v1h-1zM849 285h1v1h-1zM849 292h1v1h-1zM849 298h1v1h-1zM849 305h1v1h-1zM849 312h1v1h-1zM849 319h1v1h-1zM849 326h1v1h-1zM849 332h1v1h-1zM849 339h1v1h-1zM849 346h1v1h-1zM849 353h1v1h-1zM849 359h1v1h-1zM849 366h1v1h-1zM849 373h1v1h-1zM849 380h1v1h-1zM849 386h1v1h-1zM849 393h1v1h-1zM849 400h1v1h-1zM849 407h1v1h-1zM849 414h1v1h-1zM849 420h1v1h-1zM849 427h1v1h-1zM849 434h1v1h-1zM849 441h1v1h-1zM849 447h1v1h-1zM849 454h1v1h-1zM849 461h1v1h-1zM849 468h1v1h-1zM849 474h1v1h-1zM849 481h1v1h-1zM849 488h1v1h-1zM849 495h1v1h-1zM849 502h1v1h-1zM849 508h1v1h-1zM849 515h1v1h-1zM849 522h1v1h-1zM849 529h1v1h-1zM849 535h1v1h-1zM849 542h1v1h-1zM849 549h1v1h-1zM849 556h1v1h-1zM849 563h1v1h-1zM849 569h1v1h-1zM849 576h1v1h-1zM849 583h1v1h-1zM849 590h1v1h-1zM849 596h1v1h-1zM849 603h1v1h-1zM849 610h1v1h-1zM849 617h1v1h-1zM849 623h1v1h-1zM849 630h1v1h-1zM849 637h1v1h-1zM849 644h1v1h-1zM849 651h1v1h-1zM849 657h1v1h-1zM849 664h1v1h-1zM849 671h1v1h-1zM849 678h1v1h-1zM849 684h1v1h-1zM849 691h1v1h-1zM849 698h1v1h-1zM849 705h1v1h-1zM849 711h1v1h-1zM849 718h1v1h-1zM849 725h1v1h-1zM849 732h1v1h-1zM849 739h1v1h-1zM849 745h1v1h-1zM849 752h1v1h-1zM849 759h1v1h-1zM849 766h1v1h-1zM849 772h1v1h-1zM849 779h1v1h-1zM849 786h1v1h-1zM849 793h1v1h-1zM849 799h1v1h-1zM849 806h1v1h-1zM849 813h1v1h-1zM849 820h1v1h-1zM849 827h1v1h-1zM849 833h1v1h-1zM849 840h1v1h-1zM849 847h1v1h-1zM849 854h1v1h-1zM849 860h1v1h-1zM849 867h1v1h-1zM849 874h1v1h-1zM849 881h1v1h-1zM916 244h1v1h-1zM916 251h1v1h-1zM916 258h1v1h-1zM916 265h1v1h-1zM916 271h1v1h-1zM916 278h1v1h-1zM916 285h1v1h-1zM916 292h1v1h-1zM916 298h1v1h-1zM916 305h1v1h-1zM916 312h1v1h-1zM916 319h1v1h-1zM916 326h1v1h-1zM916 332h1v1h-1zM916 339h1v1h-1zM916 346h1v1h-1zM916 353h1v1h-1zM916 359h1v1h-1zM916 366h1v1h-1zM916 373h1v1h-1zM916 380h1v1h-1zM916 386h1v1h-1zM916 393h1v1h-1zM916 400h1v1h-1zM916 407h1v1h-1zM916 414h1v1h-1zM916 420h1v1h-1zM916 427h1v1h-1zM916 434h1v1h-1zM916 441h1v1h-1zM916 447h1v1h-1zM916 454h1v1h-1zM916 461h1v1h-1zM916 468h1v1h-1zM916 474h1v1h-1zM916 481h1v1h-1zM916 488h1v1h-1zM916 495h1v1h-1zM916 502h1v1h-1zM916 508h1v1h-1zM916 515h1v1h-1zM916 522h1v1h-1zM916 529h1v1h-1zM916 535h1v1h-1zM916 542h1v1h-1zM916 549h1v1h-1zM916 556h1v1h-1zM916 563h1v1h-1zM916 569h1v1h-1zM916 576h1v1h-1zM916 583h1v1h-1zM916 590h1v1h-1zM916 596h1v1h-1zM916 603h1v1h-1zM916 610h1v1h-1zM916 617h1v1h-1zM916 623h1v1h-1zM916 630h1v1h-1zM916 637h1v1h-1zM916 644h1v1h-1zM916 651h1v1h-1zM916 657h1v1h-1zM916 664h1v1h-1zM916 671h1v1h-1zM916 678h1v1h-1zM916 684h1v1h-1zM916 691h1v1h-1zM916 698h1v1h-1zM916 705h1v1h-1zM916 711h1v1h-1zM916 718h1v1h-1zM916 725h1v1h-1zM916 732h1v1h-1zM916 739h1v1h-1zM916 745h1v1h-1zM916 752h1v1h-1zM916 759h1v1h-1zM916 766h1v1h-1zM916 772h1v1h-1zM916 779h1v1h-1zM916 786h1v1h-1zM916 793h1v1h-1zM916 799h1v1h-1zM916 806h1v1h-1zM916 813h1v1h-1zM916 820h1v1h-1zM916 827h1v1h-1zM916 833h1v1h-1zM916 840h1v1h-1zM916 847h1v1h-1zM916 854h1v1h-1zM916 860h1v1h-1zM916 867h1v1h-1zM916 874h1v1h-1zM916 881h1v1h-1zM984 244h1v1h-1zM984 251h1v1h-1zM984 258h1v1h-1zM984 265h1v1h-1zM984 271h1v1h-1zM984 278h1v1h-1zM984 285h1v1h-1zM984 292h1v1h-1zM984 298h1v1h-1zM984 305h1v1h-1zM984 312h1v1h-1zM984 319h1v1h-1zM984 326h1v1h-1zM984 332h1v1h-1zM984 339h1v1h-1zM984 346h1v1h-1zM984 353h1v1h-1zM984 359h1v1h-1zM984 366h1v1h-1zM984 373h1v1h-1zM984 380h1v1h-1zM984 386h1v1h-1zM984 393h1v1h-1zM984 400h1v1h-1zM984 407h1v1h-1zM984 414h1v1h-1zM984 420h1v1h-1zM984 427h1v1h-1zM984 434h1v1h-1zM984 441h1v1h-1zM984 447h1v1h-1zM984 454h1v1h-1zM984 461h1v1h-1zM984 468h1v1h-1zM984 474h1v1h-1zM984 481h1v1h-1zM984 488h1v1h-1zM984 495h1v1h-1zM984 502h1v1h-1zM984 508h1v1h-1zM984 515h1v1h-1zM984 522h1v1h-1zM984 529h1v1h-1zM984 535h1v1h-1zM984 542h1v1h-1zM984 549h1v1h-1zM984 556h1v1h-1zM984 563h1v1h-1zM984 569h1v1h-1zM984 576h1v1h-1zM984 583h1v1h-1zM984 590h1v1h-1zM984 596h1v1h-1zM984 603h1v1h-1zM984 610h1v1h-1zM984 617h1v1h-1zM984 623h1v1h-1zM984 630h1v1h-1zM984 637h1v1h-1zM984 644h1v1h-1zM984 651h1v1h-1zM984 657h1v1h-1zM984 664h1v1h-1zM984 671h1v1h-1zM984 678h1v1h-1zM984 684h1v1h-1zM984 691h1v1h-1zM984 698h1v1h-1zM984 705h1v1h-1zM984 711h1v1h-1zM984 718h1v1h-1zM984 725h1v1h-1zM984 732h1v1h-1zM984 739h1v1h-1zM984 745h1v1h-1zM984 752h1v1h-1zM984 759h1v1h-1zM984 766h1v1h-1zM984 772h1v1h-1zM984 779h1v1h-1zM984 786h1v1h-1zM984 793h1v1h-1zM984 799h1v1h-1zM984 806h1v1h-1zM984 813h1v1h-1zM984 820h1v1h-1zM984 827h1v1h-1zM984 833h1v1h-1zM984 840h1v1h-1zM984 847h1v1h-1zM984 854h1v1h-1zM984 860h1v1h-1zM984 867h1v1h-1zM984 874h1v1h-1zM984 881h1v1h-1zM1052 244h1v1h-1zM1052 251h1v1h-1zM1052 258h1v1h-1zM1052 265h1v1h-1zM1052 271h1v1h-1zM1052 278h1v1h-1zM1052 285h1v1h-1zM1052 292h1v1h-1zM1052 298h1v1h-1zM1052 305h1v1h-1zM1052 312h1v1h-1zM1052 319h1v1h-1zM1052 326h1v1h-1zM1052 332h1v1h-1zM1052 339h1v1h-1zM1052 346h1v1h-1zM1052 353h1v1h-1zM1052 359h1v1h-1zM1052 366h1v1h-1zM1052 373h1v1h-1zM1052 380h1v1h-1zM1052 386h1v1h-1zM1052 393h1v1h-1zM1052 400h1v1h-1zM1052 407h1v1h-1zM1052 414h1v1h-1zM1052 420h1v1h-1zM1052 427h1v1h-1zM1052 434h1v1h-1zM1052 441h1v1h-1zM1052 447h1v1h-1zM1052 454h1v1h-1zM1052 461h1v1h-1zM1052 468h1v1h-1zM1052 474h1v1h-1zM1052 481h1v1h-1zM1052 488h1v1h-1zM1052 495h1v1h-1zM1052 502h1v1h-1zM1052 508h1v1h-1zM1052 515h1v1h-1zM1052 522h1v1h-1zM1052 529h1v1h-1zM1052 535h1v1h-1zM1052 542h1v1h-1zM1052 549h1v1h-1zM1052 556h1v1h-1zM1052 563h1v1h-1zM1052 569h1v1h-1zM1052 576h1v1h-1zM1052 583h1v1h-1zM1052 590h1v1h-1zM1052 596h1v1h-1zM1052 603h1v1h-1zM1052 610h1v1h-1zM1052 617h1v1h-1zM1052 623h1v1h-1zM1052 630h1v1h-1zM1052 637h1v1h-1zM1052 644h1v1h-1zM1052 651h1v1h-1zM1052 657h1v1h-1zM1052 664h1v1h-1zM1052 671h1v1h-1zM1052 678h1v1h-1zM1052 684h1v1h-1zM1052 691h1v1h-1zM1052 698h1v1h-1zM1052 705h1v1h-1zM1052 711h1v1h-1zM1052 718h1v1h-1zM1052 725h1v1h-1zM1052 732h1v1h-1zM1052 739h1v1h-1zM1052 745h1v1h-1zM1052 752h1v1h-1zM1052 759h1v1h-1zM1052 766h1v1h-1zM1052 772h1v1h-1zM1052 779h1v1h-1zM1052 786h1v1h-1zM1052 793h1v1h-1zM1052 799h1v1h-1zM1052 806h1v1h-1zM1052 813h1v1h-1zM1052 820h1v1h-1zM1052 827h1v1h-1zM1052 833h1v1h-1zM1052 840h1v1h-1zM1052 847h1v1h-1zM1052 854h1v1h-1zM1052 860h1v1h-1zM1052 867h1v1h-1zM1052 874h1v1h-1zM1052 881h1v1h-1zM1119 244h1v1h-1zM1119 251h1v1h-1zM1119 258h1v1h-1zM1119 265h1v1h-1zM1119 271h1v1h-1zM1119 278h1v1h-1zM1119 285h1v1h-1zM1119 292h1v1h-1zM1119 298h1v1h-1zM1119 305h1v1h-1zM1119 312h1v1h-1zM1119 319h1v1h-1zM1119 326h1v1h-1zM1119 332h1v1h-1zM1119 339h1v1h-1zM1119 346h1v1h-1zM1119 353h1v1h-1zM1119 359h1v1h-1zM1119 366h1v1h-1zM1119 373h1v1h-1zM1119 380h1v1h-1zM1119 386h1v1h-1zM1119 393h1v1h-1zM1119 400h1v1h-1zM1119 407h1v1h-1zM1119 414h1v1h-1zM1119 420h1v1h-1zM1119 427h1v1h-1zM1119 434h1v1h-1zM1119 441h1v1h-1zM1119 447h1v1h-1zM1119 454h1v1h-1zM1119 461h1v1h-1zM1119 468h1v1h-1zM1119 474h1v1h-1zM1119 481h1v1h-1zM1119 488h1v1h-1zM1119 495h1v1h-1zM1119 502h1v1h-1zM1119 508h1v1h-1zM1119 515h1v1h-1zM1119 522h1v1h-1zM1119 529h1v1h-1zM1119 535h1v1h-1zM1119 542h1v1h-1zM1119 549h1v1h-1zM1119 556h1v1h-1zM1119 563h1v1h-1zM1119 569h1v1h-1zM1119 576h1v1h-1zM1119 583h1v1h-1zM1119 590h1v1h-1zM1119 596h1v1h-1zM1119 603h1v1h-1zM1119 610h1v1h-1zM1119 617h1v1h-1zM1119 623h1v1h-1zM1119 630h1v1h-1zM1119 637h1v1h-1zM1119 644h1v1h-1zM1119 651h1v1h-1zM1119 657h1v1h-1zM1119 664h1v1h-1zM1119 671h1v1h-1zM1119 678h1v1h-1zM1119 684h1v1h-1zM1119 691h1v1h-1zM1119 698h1v1h-1zM1119 705h1v1h-1zM1119 711h1v1h-1zM1119 718h1v1h-1zM1119 725h1v1h-1zM1119 732h1v1h-1zM1119 739h1v1h-1zM1119 745h1v1h-1zM1119 752h1v1h-1zM1119 759h1v1h-1zM1119 766h1v1h-1zM1119 772h1v1h-1zM1119 779h1v1h-1zM1119 786h1v1h-1zM1119 793h1v1h-1zM1119 799h1v1h-1zM1119 806h1v1h-1zM1119 813h1v1h-1zM1119 820h1v1h-1zM1119 827h1v1h-1zM1119 833h1v1h-1zM1119 840h1v1h-1zM1119 847h1v1h-1zM1119 854h1v1h-1zM1119 860h1v1h-1zM1119 867h1v1h-1zM1119 874h1v1h-1zM1119 881h1v1h-1zM1187 244h1v1h-1zM1187 251h1v1h-1zM1187 258h1v1h-1zM1187 265h1v1h-1zM1187 271h1v1h-1zM1187 278h1v1h-1zM1187 285h1v1h-1zM1187 292h1v1h-1zM1187 298h1v1h-1zM1187 305h1v1h-1zM1187 312h1v1h-1zM1187 319h1v1h-1zM1187 326h1v1h-1zM1187 332h1v1h-1zM1187 339h1v1h-1zM1187 346h1v1h-1zM1187 353h1v1h-1zM1187 359h1v1h-1zM1187 366h1v1h-1zM1187 373h1v1h-1zM1187 380h1v1h-1zM1187 386h1v1h-1zM1187 393h1v1h-1zM1187 400h1v1h-1zM1187 407h1v1h-1zM1187 414h1v1h-1zM1187 420h1v1h-1zM1187 427h1v1h-1zM1187 434h1v1h-1zM1187 441h1v1h-1zM1187 447h1v1h-1zM1187 454h1v1h-1zM1187 461h1v1h-1zM1187 468h1v1h-1zM1187 474h1v1h-1zM1187 481h1v1h-1zM1187 488h1v1h-1zM1187 495h1v1h-1zM1187 502h1v1h-1zM1187 508h1v1h-1zM1187 515h1v1h-1zM1187 522h1v1h-1zM1187 529h1v1h-1zM1187 535h1v1h-1zM1187 542h1v1h-1zM1187 549h1v1h-1zM1187 556h1v1h-1zM1187 563h1v1h-1zM1187 569h1v1h-1zM1187 576h1v1h-1zM1187 583h1v1h-1zM1187 590h1v1h-1zM1187 596h1v1h-1zM1187 603h1v1h-1zM1187 610h1v1h-1zM1187 617h1v1h-1zM1187 623h1v1h-1zM1187 630h1v1h-1zM1187 637h1v1h-1zM1187 644h1v1h-1zM1187 651h1v1h-1zM1187 657h1v1h-1zM1187 664h1v1h-1zM1187 671h1v1h-1zM1187 678h1v1h-1zM1187 684h1v1h-1zM1187 691h1v1h-1zM1187 698h1v1h-1zM1187 705h1v1h-1zM1187 711h1v1h-1zM1187 718h1v1h-1zM1187 725h1v1h-1zM1187 732h1v1h-1zM1187 739h1v1h-1zM1187 745h1v1h-1zM1187 752h1v1h-1zM1187 759h1v1h-1zM1187 766h1v1h-1zM1187 772h1v1h-1zM1187 779h1v1h-1zM1187 786h1v1h-1zM1187 793h1v1h-1zM1187 799h1v1h-1zM1187 806h1v1h-1zM1187 813h1v1h-1zM1187 820h1v1h-1zM1187 827h1v1h-1zM1187 833h1v1h-1zM1187 840h1v1h-1zM1187 847h1v1h-1zM1187 854h1v1h-1zM1187 860h1v1h-1zM1187 867h1v1h-1zM1187 874h1v1h-1zM1187 881h1v1h-1zM1255 244h1v1h-1zM1255 251h1v1h-1zM1255 258h1v1h-1zM1255 265h1v1h-1zM1255 271h1v1h-1zM1255 278h1v1h-1zM1255 285h1v1h-1zM1255 292h1v1h-1zM1255 298h1v1h-1zM1255 305h1v1h-1zM1255 312h1v1h-1zM1255 319h1v1h-1zM1255 326h1v1h-1zM1255 332h1v1h-1zM1255 339h1v1h-1zM1255 346h1v1h-1zM1255 353h1v1h-1zM1255 359h1v1h-1zM1255 366h1v1h-1zM1255 373h1v1h-1zM1255 380h1v1h-1zM1255 386h1v1h-1zM1255 393h1v1h-1zM1255 400h1v1h-1zM1255 407h1v1h-1zM1255 414h1v1h-1zM1255 420h1v1h-1zM1255 427h1v1h-1zM1255 434h1v1h-1zM1255 441h1v1h-1zM1255 447h1v1h-1zM1255 454h1v1h-1zM1255 461h1v1h-1zM1255 468h1v1h-1zM1255 474h1v1h-1zM1255 481h1v1h-1zM1255 488h1v1h-1zM1255 495h1v1h-1zM1255 502h1v1h-1zM1255 508h1v1h-1zM1255 515h1v1h-1zM1255 522h1v1h-1zM1255 529h1v1h-1zM1255 535h1v1h-1zM1255 542h1v1h-1zM1255 549h1v1h-1zM1255 556h1v1h-1zM1255 563h1v1h-1zM1255 569h1v1h-1zM1255 576h1v1h-1zM1255 583h1v1h-1zM1255 590h1v1h-1zM1255 596h1v1h-1zM1255 603h1v1h-1zM1255 610h1v1h-1zM1255 617h1v1h-1zM1255 623h1v1h-1zM1255 630h1v1h-1zM1255 637h1v1h-1zM1255 644h1v1h-1zM1255 651h1v1h-1zM1255 657h1v1h-1zM1255 664h1v1h-1zM1255 671h1v1h-1zM1255 678h1v1h-1zM1255 684h1v1h-1zM1255 691h1v1h-1zM1255 698h1v1h-1zM1255 705h1v1h-1zM1255 711h1v1h-1zM1255 718h1v1h-1zM1255 725h1v1h-1zM1255 732h1v1h-1zM1255 739h1v1h-1zM1255 745h1v1h-1zM1255 752h1v1h-1zM1255 759h1v1h-1zM1255 766h1v1h-1zM1255 772h1v1h-1zM1255 779h1v1h-1zM1255 786h1v1h-1zM1255 793h1v1h-1zM1255 799h1v1h-1zM1255 806h1v1h-1zM1255 813h1v1h-1zM1255 820h1v1h-1zM1255 827h1v1h-1zM1255 833h1v1h-1zM1255 840h1v1h-1zM1255 847h1v1h-1zM1255 854h1v1h-1zM1255 860h1v1h-1zM1255 867h1v1h-1zM1255 874h1v1h-1zM1255 881h1v1h-1zM1322 244h1v1h-1zM1322 251h1v1h-1zM1322 258h1v1h-1zM1322 265h1v1h-1zM1322 271h1v1h-1zM1322 278h1v1h-1zM1322 285h1v1h-1zM1322 292h1v1h-1zM1322 298h1v1h-1zM1322 305h1v1h-1zM1322 312h1v1h-1zM1322 319h1v1h-1zM1322 326h1v1h-1zM1322 332h1v1h-1zM1322 339h1v1h-1zM1322 346h1v1h-1zM1322 353h1v1h-1zM1322 359h1v1h-1zM1322 366h1v1h-1zM1322 373h1v1h-1zM1322 380h1v1h-1zM1322 386h1v1h-1zM1322 393h1v1h-1zM1322 400h1v1h-1zM1322 407h1v1h-1zM1322 414h1v1h-1zM1322 420h1v1h-1zM1322 427h1v1h-1zM1322 434h1v1h-1zM1322 441h1v1h-1zM1322 447h1v1h-1zM1322 454h1v1h-1zM1322 461h1v1h-1zM1322 468h1v1h-1zM1322 474h1v1h-1zM1322 481h1v1h-1zM1322 488h1v1h-1zM1322 495h1v1h-1zM1322 502h1v1h-1zM1322 508h1v1h-1zM1322 515h1v1h-1zM1322 522h1v1h-1zM1322 529h1v1h-1zM1322 535h1v1h-1zM1322 542h1v1h-1zM1322 549h1v1h-1zM1322 556h1v1h-1zM1322 563h1v1h-1zM1322 569h1v1h-1zM1322 576h1v1h-1zM1322 583h1v1h-1zM1322 590h1v1h-1zM1322 596h1v1h-1zM1322 603h1v1h-1zM1322 610h1v1h-1zM1322 617h1v1h-1zM1322 623h1v1h-1zM1322 630h1v1h-1zM1322 637h1v1h-1zM1322 644h1v1h-1zM1322 651h1v1h-1zM1322 657h1v1h-1zM1322 664h1v1h-1zM1322 671h1v1h-1zM1322 678h1v1h-1zM1322 684h1v1h-1zM1322 691h1v1h-1zM1322 698h1v1h-1zM1322 705h1v1h-1zM1322 711h1v1h-1zM1322 718h1v1h-1zM1322 725h1v1h-1zM1322 732h1v1h-1zM1322 739h1v1h-1zM1322 745h1v1h-1zM1322 752h1v1h-1zM1322 759h1v1h-1zM1322 766h1v1h-1zM1322 772h1v1h-1zM1322 779h1v1h-1zM1322 786h1v1h-1zM1322 793h1v1h-1zM1322 799h1v1h-1zM1322 806h1v1h-1zM1322 813h1v1h-1zM1322 820h1v1h-1zM1322 827h1v1h-1zM1322 833h1v1h-1zM1322 840h1v1h-1zM1322 847h1v1h-1zM1322 854h1v1h-1zM1322 860h1v1h-1zM1322 867h1v1h-1zM1322 874h1v1h-1zM1322 881h1v1h-1zM1390 244h1v1h-1zM1390 251h1v1h-1zM1390 258h1v1h-1zM1390 265h1v1h-1zM1390 271h1v1h-1zM1390 278h1v1h-1zM1390 285h1v1h-1zM1390 292h1v1h-1zM1390 298h1v1h-1zM1390 305h1v1h-1zM1390 312h1v1h-1zM1390 319h1v1h-1zM1390 326h1v1h-1zM1390 332h1v1h-1zM1390 339h1v1h-1zM1390 346h1v1h-1zM1390 353h1v1h-1zM1390 359h1v1h-1zM1390 366h1v1h-1zM1390 373h1v1h-1zM1390 380h1v1h-1zM1390 386h1v1h-1zM1390 393h1v1h-1zM1390 400h1v1h-1zM1390 407h1v1h-1zM1390 414h1v1h-1zM1390 420h1v1h-1zM1390 427h1v1h-1zM1390 434h1v1h-1zM1390 441h1v1h-1zM1390 447h1v1h-1zM1390 454h1v1h-1zM1390 461h1v1h-1zM1390 468h1v1h-1zM1390 474h1v1h-1zM1390 481h1v1h-1zM1390 488h1v1h-1zM1390 495h1v1h-1zM1390 502h1v1h-1zM1390 508h1v1h-1zM1390 515h1v1h-1zM1390 522h1v1h-1zM1390 529h1v1h-1zM1390 535h1v1h-1zM1390 542h1v1h-1zM1390 549h1v1h-1zM1390 556h1v1h-1zM1390 563h1v1h-1zM1390 569h1v1h-1zM1390 576h1v1h-1zM1390 583h1v1h-1zM1390 590h1v1h-1zM1390 596h1v1h-1zM1390 603h1v1h-1zM1390 610h1v1h-1zM1390 617h1v1h-1zM1390 623h1v1h-1zM1390 630h1v1h-1zM1390 637h1v1h-1zM1390 644h1v1h-1zM1390 651h1v1h-1zM1390 657h1v1h-1zM1390 664h1v1h-1zM1390 671h1v1h-1zM1390 678h1v1h-1zM1390 684h1v1h-1zM1390 691h1v1h-1zM1390 698h1v1h-1zM1390 705h1v1h-1zM1390 711h1v1h-1zM1390 718h1v1h-1zM1390 725h1v1h-1zM1390 732h1v1h-1zM1390 739h1v1h-1zM1390 745h1v1h-1zM1390 752h1v1h-1zM1390 759h1v1h-1zM1390 766h1v1h-1zM1390 772h1v1h-1zM1390 779h1v1h-1zM1390 786h1v1h-1zM1390 793h1v1h-1zM1390 799h1v1h-1zM1390 806h1v1h-1zM1390 813h1v1h-1zM1390 820h1v1h-1zM1390 827h1v1h-1zM1390 833h1v1h-1zM1390 840h1v1h-1zM1390 847h1v1h-1zM1390 854h1v1h-1zM1390 860h1v1h-1zM1390 867h1v1h-1zM1390 874h1v1h-1zM1390 881h1v1h-1zM1458 244h1v1h-1zM1458 251h1v1h-1zM1458 258h1v1h-1zM1458 265h1v1h-1zM1458 271h1v1h-1zM1458 278h1v1h-1zM1458 285h1v1h-1zM1458 292h1v1h-1zM1458 298h1v1h-1zM1458 305h1v1h-1zM1458 312h1v1h-1zM1458 319h1v1h-1zM1458 326h1v1h-1zM1458 332h1v1h-1zM1458 339h1v1h-1zM1458 346h1v1h-1zM1458 353h1v1h-1zM1458 359h1v1h-1zM1458 366h1v1h-1zM1458 373h1v1h-1zM1458 380h1v1h-1zM1458 386h1v1h-1zM1458 393h1v1h-1zM1458 400h1v1h-1zM1458 407h1v1h-1zM1458 414h1v1h-1zM1458 420h1v1h-1zM1458 427h1v1h-1zM1458 434h1v1h-1zM1458 441h1v1h-1zM1458 447h1v1h-1zM1458 454h1v1h-1zM1458 461h1v1h-1zM1458 468h1v1h-1zM1458 474h1v1h-1zM1458 481h1v1h-1zM1458 488h1v1h-1zM1458 495h1v1h-1zM1458 502h1v1h-1zM1458 508h1v1h-1zM1458 515h1v1h-1zM1458 522h1v1h-1zM1458 529h1v1h-1zM1458 535h1v1h-1zM1458 542h1v1h-1zM1458 549h1v1h-1zM1458 556h1v1h-1zM1458 563h1v1h-1zM1458 569h1v1h-1zM1458 576h1v1h-1zM1458 583h1v1h-1zM1458 590h1v1h-1zM1458 596h1v1h-1zM1458 603h1v1h-1zM1458 610h1v1h-1zM1458 617h1v1h-1zM1458 623h1v1h-1zM1458 630h1v1h-1zM1458 637h1v1h-1zM1458 644h1v1h-1zM1458 651h1v1h-1zM1458 657h1v1h-1zM1458 664h1v1h-1zM1458 671h1v1h-1zM1458 678h1v1h-1zM1458 684h1v1h-1zM1458 691h1v1h-1zM1458 698h1v1h-1zM1458 705h1v1h-1zM1458 711h1v1h-1zM1458 718h1v1h-1zM1458 725h1v1h-1zM1458 732h1v1h-1zM1458 739h1v1h-1zM1458 745h1v1h-1zM1458 752h1v1h-1zM1458 759h1v1h-1zM1458 766h1v1h-1zM1458 772h1v1h-1zM1458 779h1v1h-1zM1458 786h1v1h-1zM1458 793h1v1h-1zM1458 799h1v1h-1zM1458 806h1v1h-1zM1458 813h1v1h-1zM1458 820h1v1h-1zM1458 827h1v1h-1zM1458 833h1v1h-1zM1458 840h1v1h-1zM1458 847h1v1h-1zM1458 854h1v1h-1zM1458 860h1v1h-1zM1458 867h1v1h-1zM1458 874h1v1h-1zM1458 881h1v1h-1zM348 292h1v1h-1zM355 292h1v1h-1zM362 292h1v1h-1zM369 292h1v1h-1zM375 292h1v1h-1zM382 292h1v1h-1zM389 292h1v1h-1zM396 292h1v1h-1zM402 292h1v1h-1zM409 292h1v1h-1zM416 292h1v1h-1zM423 292h1v1h-1zM429 292h1v1h-1zM436 292h1v1h-1zM443 292h1v1h-1zM450 292h1v1h-1zM456 292h1v1h-1zM463 292h1v1h-1zM470 292h1v1h-1zM477 292h1v1h-1zM484 292h1v1h-1zM490 292h1v1h-1zM497 292h1v1h-1zM504 292h1v1h-1zM511 292h1v1h-1zM517 292h1v1h-1zM524 292h1v1h-1zM531 292h1v1h-1zM538 292h1v1h-1zM544 292h1v1h-1zM551 292h1v1h-1zM558 292h1v1h-1zM565 292h1v1h-1zM571 292h1v1h-1zM578 292h1v1h-1zM585 292h1v1h-1zM592 292h1v1h-1zM599 292h1v1h-1zM605 292h1v1h-1zM612 292h1v1h-1zM619 292h1v1h-1zM626 292h1v1h-1zM632 292h1v1h-1zM639 292h1v1h-1zM646 292h1v1h-1zM653 292h1v1h-1zM659 292h1v1h-1zM666 292h1v1h-1zM673 292h1v1h-1zM680 292h1v1h-1zM686 292h1v1h-1zM693 292h1v1h-1zM700 292h1v1h-1zM707 292h1v1h-1zM714 292h1v1h-1zM720 292h1v1h-1zM727 292h1v1h-1zM734 292h1v1h-1zM741 292h1v1h-1zM747 292h1v1h-1zM754 292h1v1h-1zM761 292h1v1h-1zM768 292h1v1h-1zM774 292h1v1h-1zM781 292h1v1h-1zM788 292h1v1h-1zM795 292h1v1h-1zM801 292h1v1h-1zM808 292h1v1h-1zM815 292h1v1h-1zM822 292h1v1h-1zM828 292h1v1h-1zM835 292h1v1h-1zM842 292h1v1h-1zM849 292h1v1h-1zM856 292h1v1h-1zM862 292h1v1h-1zM869 292h1v1h-1zM876 292h1v1h-1zM883 292h1v1h-1zM889 292h1v1h-1zM896 292h1v1h-1zM903 292h1v1h-1zM910 292h1v1h-1zM916 292h1v1h-1zM923 292h1v1h-1zM930 292h1v1h-1zM937 292h1v1h-1zM943 292h1v1h-1zM950 292h1v1h-1zM957 292h1v1h-1zM964 292h1v1h-1zM971 292h1v1h-1zM977 292h1v1h-1zM984 292h1v1h-1zM991 292h1v1h-1zM998 292h1v1h-1zM1004 292h1v1h-1zM1011 292h1v1h-1zM1018 292h1v1h-1zM1025 292h1v1h-1zM1031 292h1v1h-1zM1038 292h1v1h-1zM1045 292h1v1h-1zM1052 292h1v1h-1zM1058 292h1v1h-1zM1065 292h1v1h-1zM1072 292h1v1h-1zM1079 292h1v1h-1zM1086 292h1v1h-1zM1092 292h1v1h-1zM1099 292h1v1h-1zM1106 292h1v1h-1zM1113 292h1v1h-1zM1119 292h1v1h-1zM1126 292h1v1h-1zM1133 292h1v1h-1zM1140 292h1v1h-1zM1146 292h1v1h-1zM1153 292h1v1h-1zM1160 292h1v1h-1zM1167 292h1v1h-1zM1173 292h1v1h-1zM1180 292h1v1h-1zM1187 292h1v1h-1zM1194 292h1v1h-1zM1201 292h1v1h-1zM1207 292h1v1h-1zM1214 292h1v1h-1zM1221 292h1v1h-1zM1228 292h1v1h-1zM1234 292h1v1h-1zM1241 292h1v1h-1zM1248 292h1v1h-1zM1255 292h1v1h-1zM1261 292h1v1h-1zM1268 292h1v1h-1zM1275 292h1v1h-1zM1282 292h1v1h-1zM1288 292h1v1h-1zM1295 292h1v1h-1zM1302 292h1v1h-1zM1309 292h1v1h-1zM1315 292h1v1h-1zM1322 292h1v1h-1zM1329 292h1v1h-1zM1336 292h1v1h-1zM1343 292h1v1h-1zM1349 292h1v1h-1zM1356 292h1v1h-1zM1363 292h1v1h-1zM1370 292h1v1h-1zM1376 292h1v1h-1zM1383 292h1v1h-1zM1390 292h1v1h-1zM1397 292h1v1h-1zM1403 292h1v1h-1zM1410 292h1v1h-1zM1417 292h1v1h-1zM1424 292h1v1h-1zM1430 292h1v1h-1zM1437 292h1v1h-1zM1444 292h1v1h-1zM1451 292h1v1h-1zM1458 292h1v1h-1zM1464 292h1v1h-1zM1471 292h1v1h-1zM1478 292h1v1h-1zM1485 292h1v1h-1zM348 359h1v1h-1zM355 359h1v1h-1zM362 359h1v1h-1zM369 359h1v1h-1zM375 359h1v1h-1zM382 359h1v1h-1zM389 359h1v1h-1zM396 359h1v1h-1zM402 359h1v1h-1zM409 359h1v1h-1zM416 359h1v1h-1zM423 359h1v1h-1zM429 359h1v1h-1zM436 359h1v1h-1zM443 359h1v1h-1zM450 359h1v1h-1zM456 359h1v1h-1zM463 359h1v1h-1zM470 359h1v1h-1zM477 359h1v1h-1zM484 359h1v1h-1zM490 359h1v1h-1zM497 359h1v1h-1zM504 359h1v1h-1zM511 359h1v1h-1zM517 359h1v1h-1zM524 359h1v1h-1zM531 359h1v1h-1zM538 359h1v1h-1zM544 359h1v1h-1zM551 359h1v1h-1zM558 359h1v1h-1zM565 359h1v1h-1zM571 359h1v1h-1zM578 359h1v1h-1zM585 359h1v1h-1zM592 359h1v1h-1zM599 359h1v1h-1zM605 359h1v1h-1zM612 359h1v1h-1zM619 359h1v1h-1zM626 359h1v1h-1zM632 359h1v1h-1zM639 359h1v1h-1zM646 359h1v1h-1zM653 359h1v1h-1zM659 359h1v1h-1zM666 359h1v1h-1zM673 359h1v1h-1zM680 359h1v1h-1zM686 359h1v1h-1zM693 359h1v1h-1zM700 359h1v1h-1zM707 359h1v1h-1zM714 359h1v1h-1zM720 359h1v1h-1zM727 359h1v1h-1zM734 359h1v1h-1zM741 359h1v1h-1zM747 359h1v1h-1zM754 359h1v1h-1zM761 359h1v1h-1zM768 359h1v1h-1zM774 359h1v1h-1zM781 359h1v1h-1zM788 359h1v1h-1zM795 359h1v1h-1zM801 359h1v1h-1zM808 359h1v1h-1zM815 359h1v1h-1zM822 359h1v1h-1zM828 359h1v1h-1zM835 359h1v1h-1zM842 359h1v1h-1zM849 359h1v1h-1zM856 359h1v1h-1zM862 359h1v1h-1zM869 359h1v1h-1zM876 359h1v1h-1zM883 359h1v1h-1zM889 359h1v1h-1zM896 359h1v1h-1zM903 359h1v1h-1zM910 359h1v1h-1zM916 359h1v1h-1zM923 359h1v1h-1zM930 359h1v1h-1zM937 359h1v1h-1zM943 359h1v1h-1zM950 359h1v1h-1zM957 359h1v1h-1zM964 359h1v1h-1zM971 359h1v1h-1zM977 359h1v1h-1zM984 359h1v1h-1zM991 359h1v1h-1zM998 359h1v1h-1zM1004 359h1v1h-1zM1011 359h1v1h-1zM1018 359h1v1h-1zM1025 359h1v1h-1zM1031 359h1v1h-1zM1038 359h1v1h-1zM1045 359h1v1h-1zM1052 359h1v1h-1zM1058 359h1v1h-1zM1065 359h1v1h-1zM1072 359h1v1h-1zM1079 359h1v1h-1zM1086 359h1v1h-1zM1092 359h1v1h-1zM1099 359h1v1h-1zM1106 359h1v1h-1zM1113 359h1v1h-1zM1119 359h1v1h-1zM1126 359h1v1h-1zM1133 359h1v1h-1zM1140 359h1v1h-1zM1146 359h1v1h-1zM1153 359h1v1h-1zM1160 359h1v1h-1zM1167 359h1v1h-1zM1173 359h1v1h-1zM1180 359h1v1h-1zM1187 359h1v1h-1zM1194 359h1v1h-1zM1201 359h1v1h-1zM1207 359h1v1h-1zM1214 359h1v1h-1zM1221 359h1v1h-1zM1228 359h1v1h-1zM1234 359h1v1h-1zM1241 359h1v1h-1zM1248 359h1v1h-1zM1255 359h1v1h-1zM1261 359h1v1h-1zM1268 359h1v1h-1zM1275 359h1v1h-1zM1282 359h1v1h-1zM1288 359h1v1h-1zM1295 359h1v1h-1zM1302 359h1v1h-1zM1309 359h1v1h-1zM1315 359h1v1h-1zM1322 359h1v1h-1zM1329 359h1v1h-1zM1336 359h1v1h-1zM1343 359h1v1h-1zM1349 359h1v1h-1zM1356 359h1v1h-1zM1363 359h1v1h-1zM1370 359h1v1h-1zM1376 359h1v1h-1zM1383 359h1v1h-1zM1390 359h1v1h-1zM1397 359h1v1h-1zM1403 359h1v1h-1zM1410 359h1v1h-1zM1417 359h1v1h-1zM1424 359h1v1h-1zM1430 359h1v1h-1zM1437 359h1v1h-1zM1444 359h1v1h-1zM1451 359h1v1h-1zM1458 359h1v1h-1zM1464 359h1v1h-1zM1471 359h1v1h-1zM1478 359h1v1h-1zM1485 359h1v1h-1zM348 427h1v1h-1zM355 427h1v1h-1zM362 427h1v1h-1zM369 427h1v1h-1zM375 427h1v1h-1zM382 427h1v1h-1zM389 427h1v1h-1zM396 427h1v1h-1zM402 427h1v1h-1zM409 427h1v1h-1zM416 427h1v1h-1zM423 427h1v1h-1zM429 427h1v1h-1zM436 427h1v1h-1zM443 427h1v1h-1zM450 427h1v1h-1zM456 427h1v1h-1zM463 427h1v1h-1zM470 427h1v1h-1zM477 427h1v1h-1zM484 427h1v1h-1zM490 427h1v1h-1zM497 427h1v1h-1zM504 427h1v1h-1zM511 427h1v1h-1zM517 427h1v1h-1zM524 427h1v1h-1zM531 427h1v1h-1zM538 427h1v1h-1zM544 427h1v1h-1zM551 427h1v1h-1zM558 427h1v1h-1zM565 427h1v1h-1zM571 427h1v1h-1zM578 427h1v1h-1zM585 427h1v1h-1zM592 427h1v1h-1zM599 427h1v1h-1zM605 427h1v1h-1zM612 427h1v1h-1zM619 427h1v1h-1zM626 427h1v1h-1zM632 427h1v1h-1zM639 427h1v1h-1zM646 427h1v1h-1zM653 427h1v1h-1zM659 427h1v1h-1zM666 427h1v1h-1zM673 427h1v1h-1zM680 427h1v1h-1zM686 427h1v1h-1zM693 427h1v1h-1zM700 427h1v1h-1zM707 427h1v1h-1zM714 427h1v1h-1zM720 427h1v1h-1zM727 427h1v1h-1zM734 427h1v1h-1zM741 427h1v1h-1zM747 427h1v1h-1zM754 427h1v1h-1zM761 427h1v1h-1zM768 427h1v1h-1zM774 427h1v1h-1zM781 427h1v1h-1zM788 427h1v1h-1zM795 427h1v1h-1zM801 427h1v1h-1zM808 427h1v1h-1zM815 427h1v1h-1zM822 427h1v1h-1zM828 427h1v1h-1zM835 427h1v1h-1zM842 427h1v1h-1zM849 427h1v1h-1zM856 427h1v1h-1zM862 427h1v1h-1zM869 427h1v1h-1zM876 427h1v1h-1zM883 427h1v1h-1zM889 427h1v1h-1zM896 427h1v1h-1zM903 427h1v1h-1zM910 427h1v1h-1zM916 427h1v1h-1zM923 427h1v1h-1zM930 427h1v1h-1zM937 427h1v1h-1zM943 427h1v1h-1zM950 427h1v1h-1zM957 427h1v1h-1zM964 427h1v1h-1zM971 427h1v1h-1zM977 427h1v1h-1zM984 427h1v1h-1zM991 427h1v1h-1zM998 427h1v1h-1zM1004 427h1v1h-1zM1011 427h1v1h-1zM1018 427h1v1h-1zM1025 427h1v1h-1zM1031 427h1v1h-1zM1038 427h1v1h-1zM1045 427h1v1h-1zM1052 427h1v1h-1zM1058 427h1v1h-1zM1065 427h1v1h-1zM1072 427h1v1h-1zM1079 427h1v1h-1zM1086 427h1v1h-1zM1092 427h1v1h-1zM1099 427h1v1h-1zM1106 427h1v1h-1zM1113 427h1v1h-1zM1119 427h1v1h-1zM1126 427h1v1h-1zM1133 427h1v1h-1zM1140 427h1v1h-1zM1146 427h1v1h-1zM1153 427h1v1h-1zM1160 427h1v1h-1zM1167 427h1v1h-1zM1173 427h1v1h-1zM1180 427h1v1h-1zM1187 427h1v1h-1zM1194 427h1v1h-1zM1201 427h1v1h-1zM1207 427h1v1h-1zM1214 427h1v1h-1zM1221 427h1v1h-1zM1228 427h1v1h-1zM1234 427h1v1h-1zM1241 427h1v1h-1zM1248 427h1v1h-1zM1255 427h1v1h-1zM1261 427h1v1h-1zM1268 427h1v1h-1zM1275 427h1v1h-1zM1282 427h1v1h-1zM1288 427h1v1h-1zM1295 427h1v1h-1zM1302 427h1v1h-1zM1309 427h1v1h-1zM1315 427h1v1h-1zM1322 427h1v1h-1zM1329 427h1v1h-1zM1336 427h1v1h-1zM1343 427h1v1h-1zM1349 427h1v1h-1zM1356 427h1v1h-1zM1363 427h1v1h-1zM1370 427h1v1h-1zM1376 427h1v1h-1zM1383 427h1v1h-1zM1390 427h1v1h-1zM1397 427h1v1h-1zM1403 427h1v1h-1zM1410 427h1v1h-1zM1417 427h1v1h-1zM1424 427h1v1h-1zM1430 427h1v1h-1zM1437 427h1v1h-1zM1444 427h1v1h-1zM1451 427h1v1h-1zM1458 427h1v1h-1zM1464 427h1v1h-1zM1471 427h1v1h-1zM1478 427h1v1h-1zM1485 427h1v1h-1zM348 495h1v1h-1zM355 495h1v1h-1zM362 495h1v1h-1zM369 495h1v1h-1zM375 495h1v1h-1zM382 495h1v1h-1zM389 495h1v1h-1zM396 495h1v1h-1zM402 495h1v1h-1zM409 495h1v1h-1zM416 495h1v1h-1zM423 495h1v1h-1zM429 495h1v1h-1zM436 495h1v1h-1zM443 495h1v1h-1zM450 495h1v1h-1zM456 495h1v1h-1zM463 495h1v1h-1zM470 495h1v1h-1zM477 495h1v1h-1zM484 495h1v1h-1zM490 495h1v1h-1zM497 495h1v1h-1zM504 495h1v1h-1zM511 495h1v1h-1zM517 495h1v1h-1zM524 495h1v1h-1zM531 495h1v1h-1zM538 495h1v1h-1zM544 495h1v1h-1zM551 495h1v1h-1zM558 495h1v1h-1zM565 495h1v1h-1zM571 495h1v1h-1zM578 495h1v1h-1zM585 495h1v1h-1zM592 495h1v1h-1zM599 495h1v1h-1zM605 495h1v1h-1zM612 495h1v1h-1zM619 495h1v1h-1zM626 495h1v1h-1zM632 495h1v1h-1zM639 495h1v1h-1zM646 495h1v1h-1zM653 495h1v1h-1zM659 495h1v1h-1zM666 495h1v1h-1zM673 495h1v1h-1zM680 495h1v1h-1zM686 495h1v1h-1zM693 495h1v1h-1zM700 495h1v1h-1zM707 495h1v1h-1zM714 495h1v1h-1zM720 495h1v1h-1zM727 495h1v1h-1zM734 495h1v1h-1zM741 495h1v1h-1zM747 495h1v1h-1zM754 495h1v1h-1zM761 495h1v1h-1zM768 495h1v1h-1zM774 495h1v1h-1zM781 495h1v1h-1zM788 495h1v1h-1zM795 495h1v1h-1zM801 495h1v1h-1zM808 495h1v1h-1zM815 495h1v1h-1zM822 495h1v1h-1zM828 495h1v1h-1zM835 495h1v1h-1zM842 495h1v1h-1zM849 495h1v1h-1zM856 495h1v1h-1zM862 495h1v1h-1zM869 495h1v1h-1zM876 495h1v1h-1zM883 495h1v1h-1zM889 495h1v1h-1zM896 495h1v1h-1zM903 495h1v1h-1zM910 495h1v1h-1zM916 495h1v1h-1zM923 495h1v1h-1zM930 495h1v1h-1zM937 495h1v1h-1zM943 495h1v1h-1zM950 495h1v1h-1zM957 495h1v1h-1zM964 495h1v1h-1zM971 495h1v1h-1zM977 495h1v1h-1zM984 495h1v1h-1zM991 495h1v1h-1zM998 495h1v1h-1zM1004 495h1v1h-1zM1011 495h1v1h-1zM1018 495h1v1h-1zM1025 495h1v1h-1zM1031 495h1v1h-1zM1038 495h1v1h-1zM1045 495h1v1h-1zM1052 495h1v1h-1zM1058 495h1v1h-1zM1065 495h1v1h-1zM1072 495h1v1h-1zM1079 495h1v1h-1zM1086 495h1v1h-1zM1092 495h1v1h-1zM1099 495h1v1h-1zM1106 495h1v1h-1zM1113 495h1v1h-1zM1119 495h1v1h-1zM1126 495h1v1h-1zM1133 495h1v1h-1zM1140 495h1v1h-1zM1146 495h1v1h-1zM1153 495h1v1h-1zM1160 495h1v1h-1zM1167 495h1v1h-1zM1173 495h1v1h-1zM1180 495h1v1h-1zM1187 495h1v1h-1zM1194 495h1v1h-1zM1201 495h1v1h-1zM1207 495h1v1h-1zM1214 495h1v1h-1zM1221 495h1v1h-1zM1228 495h1v1h-1zM1234 495h1v1h-1zM1241 495h1v1h-1zM1248 495h1v1h-1zM1255 495h1v1h-1zM1261 495h1v1h-1zM1268 495h1v1h-1zM1275 495h1v1h-1zM1282 495h1v1h-1zM1288 495h1v1h-1zM1295 495h1v1h-1zM1302 495h1v1h-1zM1309 495h1v1h-1zM1315 495h1v1h-1zM1322 495h1v1h-1zM1329 495h1v1h-1zM1336 495h1v1h-1zM1343 495h1v1h-1zM1349 495h1v1h-1zM1356 495h1v1h-1zM1363 495h1v1h-1zM1370 495h1v1h-1zM1376 495h1v1h-1zM1383 495h1v1h-1zM1390 495h1v1h-1zM1397 495h1v1h-1zM1403 495h1v1h-1zM1410 495h1v1h-1zM1417 495h1v1h-1zM1424 495h1v1h-1zM1430 495h1v1h-1zM1437 495h1v1h-1zM1444 495h1v1h-1zM1451 495h1v1h-1zM1458 495h1v1h-1zM1464 495h1v1h-1zM1471 495h1v1h-1zM1478 495h1v1h-1zM1485 495h1v1h-1zM348 563h1v1h-1zM355 563h1v1h-1zM362 563h1v1h-1zM369 563h1v1h-1zM375 563h1v1h-1zM382 563h1v1h-1zM389 563h1v1h-1zM396 563h1v1h-1zM402 563h1v1h-1zM409 563h1v1h-1zM416 563h1v1h-1zM423 563h1v1h-1zM429 563h1v1h-1zM436 563h1v1h-1zM443 563h1v1h-1zM450 563h1v1h-1zM456 563h1v1h-1zM463 563h1v1h-1zM470 563h1v1h-1zM477 563h1v1h-1zM484 563h1v1h-1zM490 563h1v1h-1zM497 563h1v1h-1zM504 563h1v1h-1zM511 563h1v1h-1zM517 563h1v1h-1zM524 563h1v1h-1zM531 563h1v1h-1zM538 563h1v1h-1zM544 563h1v1h-1zM551 563h1v1h-1zM558 563h1v1h-1zM565 563h1v1h-1zM571 563h1v1h-1zM578 563h1v1h-1zM585 563h1v1h-1zM592 563h1v1h-1zM599 563h1v1h-1zM605 563h1v1h-1zM612 563h1v1h-1zM619 563h1v1h-1zM626 563h1v1h-1zM632 563h1v1h-1zM639 563h1v1h-1zM646 563h1v1h-1zM653 563h1v1h-1zM659 563h1v1h-1zM666 563h1v1h-1zM673 563h1v1h-1zM680 563h1v1h-1zM686 563h1v1h-1zM693 563h1v1h-1zM700 563h1v1h-1zM707 563h1v1h-1zM714 563h1v1h-1zM720 563h1v1h-1zM727 563h1v1h-1zM734 563h1v1h-1zM741 563h1v1h-1zM747 563h1v1h-1zM754 563h1v1h-1zM761 563h1v1h-1zM768 563h1v1h-1zM774 563h1v1h-1zM781 563h1v1h-1zM788 563h1v1h-1zM795 563h1v1h-1zM801 563h1v1h-1zM808 563h1v1h-1zM815 563h1v1h-1zM822 563h1v1h-1zM828 563h1v1h-1zM835 563h1v1h-1zM842 563h1v1h-1zM849 563h1v1h-1zM856 563h1v1h-1zM862 563h1v1h-1zM869 563h1v1h-1zM876 563h1v1h-1zM883 563h1v1h-1zM889 563h1v1h-1zM896 563h1v1h-1zM903 563h1v1h-1zM910 563h1v1h-1zM916 563h1v1h-1zM923 563h1v1h-1zM930 563h1v1h-1zM937 563h1v1h-1zM943 563h1v1h-1zM950 563h1v1h-1zM957 563h1v1h-1zM964 563h1v1h-1zM971 563h1v1h-1zM977 563h1v1h-1zM984 563h1v1h-1zM991 563h1v1h-1zM998 563h1v1h-1zM1004 563h1v1h-1zM1011 563h1v1h-1zM1018 563h1v1h-1zM1025 563h1v1h-1zM1031 563h1v1h-1zM1038 563h1v1h-1zM1045 563h1v1h-1zM1052 563h1v1h-1zM1058 563h1v1h-1zM1065 563h1v1h-1zM1072 563h1v1h-1zM1079 563h1v1h-1zM1086 563h1v1h-1zM1092 563h1v1h-1zM1099 563h1v1h-1zM1106 563h1v1h-1zM1113 563h1v1h-1zM1119 563h1v1h-1zM1126 563h1v1h-1zM1133 563h1v1h-1zM1140 563h1v1h-1zM1146 563h1v1h-1zM1153 563h1v1h-1zM1160 563h1v1h-1zM1167 563h1v1h-1zM1173 563h1v1h-1zM1180 563h1v1h-1zM1187 563h1v1h-1zM1194 563h1v1h-1zM1201 563h1v1h-1zM1207 563h1v1h-1zM1214 563h1v1h-1zM1221 563h1v1h-1zM1228 563h1v1h-1zM1234 563h1v1h-1zM1241 563h1v1h-1zM1248 563h1v1h-1zM1255 563h1v1h-1zM1261 563h1v1h-1zM1268 563h1v1h-1zM1275 563h1v1h-1zM1282 563h1v1h-1zM1288 563h1v1h-1zM1295 563h1v1h-1zM1302 563h1v1h-1zM1309 563h1v1h-1zM1315 563h1v1h-1zM1322 563h1v1h-1zM1329 563h1v1h-1zM1336 563h1v1h-1zM1343 563h1v1h-1zM1349 563h1v1h-1zM1356 563h1v1h-1zM1363 563h1v1h-1zM1370 563h1v1h-1zM1376 563h1v1h-1zM1383 563h1v1h-1zM1390 563h1v1h-1zM1397 563h1v1h-1zM1403 563h1v1h-1zM1410 563h1v1h-1zM1417 563h1v1h-1zM1424 563h1v1h-1zM1430 563h1v1h-1zM1437 563h1v1h-1zM1444 563h1v1h-1zM1451 563h1v1h-1zM1458 563h1v1h-1zM1464 563h1v1h-1zM1471 563h1v1h-1zM1478 563h1v1h-1zM1485 563h1v1h-1zM348 630h1v1h-1zM355 630h1v1h-1zM362 630h1v1h-1zM369 630h1v1h-1zM375 630h1v1h-1zM382 630h1v1h-1zM389 630h1v1h-1zM396 630h1v1h-1zM402 630h1v1h-1zM409 630h1v1h-1zM416 630h1v1h-1zM423 630h1v1h-1zM429 630h1v1h-1zM436 630h1v1h-1zM443 630h1v1h-1zM450 630h1v1h-1zM456 630h1v1h-1zM463 630h1v1h-1zM470 630h1v1h-1zM477 630h1v1h-1zM484 630h1v1h-1zM490 630h1v1h-1zM497 630h1v1h-1zM504 630h1v1h-1zM511 630h1v1h-1zM517 630h1v1h-1zM524 630h1v1h-1zM531 630h1v1h-1zM538 630h1v1h-1zM544 630h1v1h-1zM551 630h1v1h-1zM558 630h1v1h-1zM565 630h1v1h-1zM571 630h1v1h-1zM578 630h1v1h-1zM585 630h1v1h-1zM592 630h1v1h-1zM599 630h1v1h-1zM605 630h1v1h-1zM612 630h1v1h-1zM619 630h1v1h-1zM626 630h1v1h-1zM632 630h1v1h-1zM639 630h1v1h-1zM646 630h1v1h-1zM653 630h1v1h-1zM659 630h1v1h-1zM666 630h1v1h-1zM673 630h1v1h-1zM680 630h1v1h-1zM686 630h1v1h-1zM693 630h1v1h-1zM700 630h1v1h-1zM707 630h1v1h-1zM714 630h1v1h-1zM720 630h1v1h-1zM727 630h1v1h-1zM734 630h1v1h-1zM741 630h1v1h-1zM747 630h1v1h-1zM754 630h1v1h-1zM761 630h1v1h-1zM768 630h1v1h-1zM774 630h1v1h-1zM781 630h1v1h-1zM788 630h1v1h-1zM795 630h1v1h-1zM801 630h1v1h-1zM808 630h1v1h-1zM815 630h1v1h-1zM822 630h1v1h-1zM828 630h1v1h-1zM835 630h1v1h-1zM842 630h1v1h-1zM849 630h1v1h-1zM856 630h1v1h-1zM862 630h1v1h-1zM869 630h1v1h-1zM876 630h1v1h-1zM883 630h1v1h-1zM889 630h1v1h-1zM896 630h1v1h-1zM903 630h1v1h-1zM910 630h1v1h-1zM916 630h1v1h-1zM923 630h1v1h-1zM930 630h1v1h-1zM937 630h1v1h-1zM943 630h1v1h-1zM950 630h1v1h-1zM957 630h1v1h-1zM964 630h1v1h-1zM971 630h1v1h-1zM977 630h1v1h-1zM984 630h1v1h-1zM991 630h1v1h-1zM998 630h1v1h-1zM1004 630h1v1h-1zM1011 630h1v1h-1zM1018 630h1v1h-1zM1025 630h1v1h-1zM1031 630h1v1h-1zM1038 630h1v1h-1zM1045 630h1v1h-1zM1052 630h1v1h-1zM1058 630h1v1h-1zM1065 630h1v1h-1zM1072 630h1v1h-1zM1079 630h1v1h-1zM1086 630h1v1h-1zM1092 630h1v1h-1zM1099 630h1v1h-1zM1106 630h1v1h-1zM1113 630h1v1h-1zM1119 630h1v1h-1zM1126 630h1v1h-1zM1133 630h1v1h-1zM1140 630h1v1h-1zM1146 630h1v1h-1zM1153 630h1v1h-1zM1160 630h1v1h-1zM1167 630h1v1h-1zM1173 630h1v1h-1zM1180 630h1v1h-1zM1187 630h1v1h-1zM1194 630h1v1h-1zM1201 630h1v1h-1zM1207 630h1v1h-1zM1214 630h1v1h-1zM1221 630h1v1h-1zM1228 630h1v1h-1zM1234 630h1v1h-1zM1241 630h1v1h-1zM1248 630h1v1h-1zM1255 630h1v1h-1zM1261 630h1v1h-1zM1268 630h1v1h-1zM1275 630h1v1h-1zM1282 630h1v1h-1zM1288 630h1v1h-1zM1295 630h1v1h-1zM1302 630h1v1h-1zM1309 630h1v1h-1zM1315 630h1v1h-1zM1322 630h1v1h-1zM1329 630h1v1h-1zM1336 630h1v1h-1zM1343 630h1v1h-1zM1349 630h1v1h-1zM1356 630h1v1h-1zM1363 630h1v1h-1zM1370 630h1v1h-1zM1376 630h1v1h-1zM1383 630h1v1h-1zM1390 630h1v1h-1zM1397 630h1v1h-1zM1403 630h1v1h-1zM1410 630h1v1h-1zM1417 630h1v1h-1zM1424 630h1v1h-1zM1430 630h1v1h-1zM1437 630h1v1h-1zM1444 630h1v1h-1zM1451 630h1v1h-1zM1458 630h1v1h-1zM1464 630h1v1h-1zM1471 630h1v1h-1zM1478 630h1v1h-1zM1485 630h1v1h-1zM348 698h1v1h-1zM355 698h1v1h-1zM362 698h1v1h-1zM369 698h1v1h-1zM375 698h1v1h-1zM382 698h1v1h-1zM389 698h1v1h-1zM396 698h1v1h-1zM402 698h1v1h-1zM409 698h1v1h-1zM416 698h1v1h-1zM423 698h1v1h-1zM429 698h1v1h-1zM436 698h1v1h-1zM443 698h1v1h-1zM450 698h1v1h-1zM456 698h1v1h-1zM463 698h1v1h-1zM470 698h1v1h-1zM477 698h1v1h-1zM484 698h1v1h-1zM490 698h1v1h-1zM497 698h1v1h-1zM504 698h1v1h-1zM511 698h1v1h-1zM517 698h1v1h-1zM524 698h1v1h-1zM531 698h1v1h-1zM538 698h1v1h-1zM544 698h1v1h-1zM551 698h1v1h-1zM558 698h1v1h-1zM565 698h1v1h-1zM571 698h1v1h-1zM578 698h1v1h-1zM585 698h1v1h-1zM592 698h1v1h-1zM599 698h1v1h-1zM605 698h1v1h-1zM612 698h1v1h-1zM619 698h1v1h-1zM626 698h1v1h-1zM632 698h1v1h-1zM639 698h1v1h-1zM646 698h1v1h-1zM653 698h1v1h-1zM659 698h1v1h-1zM666 698h1v1h-1zM673 698h1v1h-1zM680 698h1v1h-1zM686 698h1v1h-1zM693 698h1v1h-1zM700 698h1v1h-1zM707 698h1v1h-1zM714 698h1v1h-1zM720 698h1v1h-1zM727 698h1v1h-1zM734 698h1v1h-1zM741 698h1v1h-1zM747 698h1v1h-1zM754 698h1v1h-1zM761 698h1v1h-1zM768 698h1v1h-1zM774 698h1v1h-1zM781 698h1v1h-1zM788 698h1v1h-1zM795 698h1v1h-1zM801 698h1v1h-1zM808 698h1v1h-1zM815 698h1v1h-1zM822 698h1v1h-1zM828 698h1v1h-1zM835 698h1v1h-1zM842 698h1v1h-1zM849 698h1v1h-1zM856 698h1v1h-1zM862 698h1v1h-1zM869 698h1v1h-1zM876 698h1v1h-1zM883 698h1v1h-1zM889 698h1v1h-1zM896 698h1v1h-1zM903 698h1v1h-1zM910 698h1v1h-1zM916 698h1v1h-1zM923 698h1v1h-1zM930 698h1v1h-1zM937 698h1v1h-1zM943 698h1v1h-1zM950 698h1v1h-1zM957 698h1v1h-1zM964 698h1v1h-1zM971 698h1v1h-1zM977 698h1v1h-1zM984 698h1v1h-1zM991 698h1v1h-1zM998 698h1v1h-1zM1004 698h1v1h-1zM1011 698h1v1h-1zM1018 698h1v1h-1zM1025 698h1v1h-1zM1031 698h1v1h-1zM1038 698h1v1h-1zM1045 698h1v1h-1zM1052 698h1v1h-1zM1058 698h1v1h-1zM1065 698h1v1h-1zM1072 698h1v1h-1zM1079 698h1v1h-1zM1086 698h1v1h-1zM1092 698h1v1h-1zM1099 698h1v1h-1zM1106 698h1v1h-1zM1113 698h1v1h-1zM1119 698h1v1h-1zM1126 698h1v1h-1zM1133 698h1v1h-1zM1140 698h1v1h-1zM1146 698h1v1h-1zM1153 698h1v1h-1zM1160 698h1v1h-1zM1167 698h1v1h-1zM1173 698h1v1h-1zM1180 698h1v1h-1zM1187 698h1v1h-1zM1194 698h1v1h-1zM1201 698h1v1h-1zM1207 698h1v1h-1zM1214 698h1v1h-1zM1221 698h1v1h-1zM1228 698h1v1h-1zM1234 698h1v1h-1zM1241 698h1v1h-1zM1248 698h1v1h-1zM1255 698h1v1h-1zM1261 698h1v1h-1zM1268 698h1v1h-1zM1275 698h1v1h-1zM1282 698h1v1h-1zM1288 698h1v1h-1zM1295 698h1v1h-1zM1302 698h1v1h-1zM1309 698h1v1h-1zM1315 698h1v1h-1zM1322 698h1v1h-1zM1329 698h1v1h-1zM1336 698h1v1h-1zM1343 698h1v1h-1zM1349 698h1v1h-1zM1356 698h1v1h-1zM1363 698h1v1h-1zM1370 698h1v1h-1zM1376 698h1v1h-1zM1383 698h1v1h-1zM1390 698h1v1h-1zM1397 698h1v1h-1zM1403 698h1v1h-1zM1410 698h1v1h-1zM1417 698h1v1h-1zM1424 698h1v1h-1zM1430 698h1v1h-1zM1437 698h1v1h-1zM1444 698h1v1h-1zM1451 698h1v1h-1zM1458 698h1v1h-1zM1464 698h1v1h-1zM1471 698h1v1h-1zM1478 698h1v1h-1zM1485 698h1v1h-1zM348 766h1v1h-1zM355 766h1v1h-1zM362 766h1v1h-1zM369 766h1v1h-1zM375 766h1v1h-1zM382 766h1v1h-1zM389 766h1v1h-1zM396 766h1v1h-1zM402 766h1v1h-1zM409 766h1v1h-1zM416 766h1v1h-1zM423 766h1v1h-1zM429 766h1v1h-1zM436 766h1v1h-1zM443 766h1v1h-1zM450 766h1v1h-1zM456 766h1v1h-1zM463 766h1v1h-1zM470 766h1v1h-1zM477 766h1v1h-1zM484 766h1v1h-1zM490 766h1v1h-1zM497 766h1v1h-1zM504 766h1v1h-1zM511 766h1v1h-1zM517 766h1v1h-1zM524 766h1v1h-1zM531 766h1v1h-1zM538 766h1v1h-1zM544 766h1v1h-1zM551 766h1v1h-1zM558 766h1v1h-1zM565 766h1v1h-1zM571 766h1v1h-1zM578 766h1v1h-1zM585 766h1v1h-1zM592 766h1v1h-1zM599 766h1v1h-1zM605 766h1v1h-1zM612 766h1v1h-1zM619 766h1v1h-1zM626 766h1v1h-1zM632 766h1v1h-1zM639 766h1v1h-1zM646 766h1v1h-1zM653 766h1v1h-1zM659 766h1v1h-1zM666 766h1v1h-1zM673 766h1v1h-1zM680 766h1v1h-1zM686 766h1v1h-1zM693 766h1v1h-1zM700 766h1v1h-1zM707 766h1v1h-1zM714 766h1v1h-1zM720 766h1v1h-1zM727 766h1v1h-1zM734 766h1v1h-1zM741 766h1v1h-1zM747 766h1v1h-1zM754 766h1v1h-1zM761 766h1v1h-1zM768 766h1v1h-1zM774 766h1v1h-1zM781 766h1v1h-1zM788 766h1v1h-1zM795 766h1v1h-1zM801 766h1v1h-1zM808 766h1v1h-1zM815 766h1v1h-1zM822 766h1v1h-1zM828 766h1v1h-1zM835 766h1v1h-1zM842 766h1v1h-1zM849 766h1v1h-1zM856 766h1v1h-1zM862 766h1v1h-1zM869 766h1v1h-1zM876 766h1v1h-1zM883 766h1v1h-1zM889 766h1v1h-1zM896 766h1v1h-1zM903 766h1v1h-1zM910 766h1v1h-1zM916 766h1v1h-1zM923 766h1v1h-1zM930 766h1v1h-1zM937 766h1v1h-1zM943 766h1v1h-1zM950 766h1v1h-1zM957 766h1v1h-1zM964 766h1v1h-1zM971 766h1v1h-1zM977 766h1v1h-1zM984 766h1v1h-1zM991 766h1v1h-1zM998 766h1v1h-1zM1004 766h1v1h-1zM1011 766h1v1h-1zM1018 766h1v1h-1zM1025 766h1v1h-1zM1031 766h1v1h-1zM1038 766h1v1h-1zM1045 766h1v1h-1zM1052 766h1v1h-1zM1058 766h1v1h-1zM1065 766h1v1h-1zM1072 766h1v1h-1zM1079 766h1v1h-1zM1086 766h1v1h-1zM1092 766h1v1h-1zM1099 766h1v1h-1zM1106 766h1v1h-1zM1113 766h1v1h-1zM1119 766h1v1h-1zM1126 766h1v1h-1zM1133 766h1v1h-1zM1140 766h1v1h-1zM1146 766h1v1h-1zM1153 766h1v1h-1zM1160 766h1v1h-1zM1167 766h1v1h-1zM1173 766h1v1h-1zM1180 766h1v1h-1zM1187 766h1v1h-1zM1194 766h1v1h-1zM1201 766h1v1h-1zM1207 766h1v1h-1zM1214 766h1v1h-1zM1221 766h1v1h-1zM1228 766h1v1h-1zM1234 766h1v1h-1zM1241 766h1v1h-1zM1248 766h1v1h-1zM1255 766h1v1h-1zM1261 766h1v1h-1zM1268 766h1v1h-1zM1275 766h1v1h-1zM1282 766h1v1h-1zM1288 766h1v1h-1zM1295 766h1v1h-1zM1302 766h1v1h-1zM1309 766h1v1h-1zM1315 766h1v1h-1zM1322 766h1v1h-1zM1329 766h1v1h-1zM1336 766h1v1h-1zM1343 766h1v1h-1zM1349 766h1v1h-1zM1356 766h1v1h-1zM1363 766h1v1h-1zM1370 766h1v1h-1zM1376 766h1v1h-1zM1383 766h1v1h-1zM1390 766h1v1h-1zM1397 766h1v1h-1zM1403 766h1v1h-1zM1410 766h1v1h-1zM1417 766h1v1h-1zM1424 766h1v1h-1zM1430 766h1v1h-1zM1437 766h1v1h-1zM1444 766h1v1h-1zM1451 766h1v1h-1zM1458 766h1v1h-1zM1464 766h1v1h-1zM1471 766h1v1h-1zM1478 766h1v1h-1zM1485 766h1v1h-1zM348 833h1v1h-1zM355 833h1v1h-1zM362 833h1v1h-1zM369 833h1v1h-1zM375 833h1v1h-1zM382 833h1v1h-1zM389 833h1v1h-1zM396 833h1v1h-1zM402 833h1v1h-1zM409 833h1v1h-1zM416 833h1v1h-1zM423 833h1v1h-1zM429 833h1v1h-1zM436 833h1v1h-1zM443 833h1v1h-1zM450 833h1v1h-1zM456 833h1v1h-1zM463 833h1v1h-1zM470 833h1v1h-1zM477 833h1v1h-1zM484 833h1v1h-1zM490 833h1v1h-1zM497 833h1v1h-1zM504 833h1v1h-1zM511 833h1v1h-1zM517 833h1v1h-1zM524 833h1v1h-1zM531 833h1v1h-1zM538 833h1v1h-1zM544 833h1v1h-1zM551 833h1v1h-1zM558 833h1v1h-1zM565 833h1v1h-1zM571 833h1v1h-1zM578 833h1v1h-1zM585 833h1v1h-1zM592 833h1v1h-1zM599 833h1v1h-1zM605 833h1v1h-1zM612 833h1v1h-1zM619 833h1v1h-1zM626 833h1v1h-1zM632 833h1v1h-1zM639 833h1v1h-1zM646 833h1v1h-1zM653 833h1v1h-1zM659 833h1v1h-1zM666 833h1v1h-1zM673 833h1v1h-1zM680 833h1v1h-1zM686 833h1v1h-1zM693 833h1v1h-1zM700 833h1v1h-1zM707 833h1v1h-1zM714 833h1v1h-1zM720 833h1v1h-1zM727 833h1v1h-1zM734 833h1v1h-1zM741 833h1v1h-1zM747 833h1v1h-1zM754 833h1v1h-1zM761 833h1v1h-1zM768 833h1v1h-1zM774 833h1v1h-1zM781 833h1v1h-1zM788 833h1v1h-1zM795 833h1v1h-1zM801 833h1v1h-1zM808 833h1v1h-1zM815 833h1v1h-1zM822 833h1v1h-1zM828 833h1v1h-1zM835 833h1v1h-1zM842 833h1v1h-1zM849 833h1v1h-1zM856 833h1v1h-1zM862 833h1v1h-1zM869 833h1v1h-1zM876 833h1v1h-1zM883 833h1v1h-1zM889 833h1v1h-1zM896 833h1v1h-1zM903 833h1v1h-1zM910 833h1v1h-1zM916 833h1v1h-1zM923 833h1v1h-1zM930 833h1v1h-1zM937 833h1v1h-1zM943 833h1v1h-1zM950 833h1v1h-1zM957 833h1v1h-1zM964 833h1v1h-1zM971 833h1v1h-1zM977 833h1v1h-1zM984 833h1v1h-1zM991 833h1v1h-1zM998 833h1v1h-1zM1004 833h1v1h-1zM1011 833h1v1h-1zM1018 833h1v1h-1zM1025 833h1v1h-1zM1031 833h1v1h-1zM1038 833h1v1h-1zM1045 833h1v1h-1zM1052 833h1v1h-1zM1058 833h1v1h-1zM1065 833h1v1h-1zM1072 833h1v1h-1zM1079 833h1v1h-1zM1086 833h1v1h-1zM1092 833h1v1h-1zM1099 833h1v1h-1zM1106 833h1v1h-1zM1113 833h1v1h-1zM1119 833h1v1h-1zM1126 833h1v1h-1zM1133 833h1v1h-1zM1140 833h1v1h-1zM1146 833h1v1h-1zM1153 833h1v1h-1zM1160 833h1v1h-1zM1167 833h1v1h-1zM1173 833h1v1h-1zM1180 833h1v1h-1zM1187 833h1v1h-1zM1194 833h1v1h-1zM1201 833h1v1h-1zM1207 833h1v1h-1zM1214 833h1v1h-1zM1221 833h1v1h-1zM1228 833h1v1h-1zM1234 833h1v1h-1zM1241 833h1v1h-1zM1248 833h1v1h-1zM1255 833h1v1h-1zM1261 833h1v1h-1zM1268 833h1v1h-1zM1275 833h1v1h-1zM1282 833h1v1h-1zM1288 833h1v1h-1zM1295 833h1v1h-1zM1302 833h1v1h-1zM1309 833h1v1h-1zM1315 833h1v1h-1zM1322 833h1v1h-1zM1329 833h1v1h-1zM1336 833h1v1h-1zM1343 833h1v1h-1zM1349 833h1v1h-1zM1356 833h1v1h-1zM1363 833h1v1h-1zM1370 833h1v1h-1zM1376 833h1v1h-1zM1383 833h1v1h-1zM1390 833h1v1h-1zM1397 833h1v1h-1zM1403 833h1v1h-1zM1410 833h1v1h-1zM1417 833h1v1h-1zM1424 833h1v1h-1zM1430 833h1v1h-1zM1437 833h1v1h-1zM1444 833h1v1h-1zM1451 833h1v1h-1zM1458 833h1v1h-1zM1464 833h1v1h-1zM1471 833h1v1h-1zM1478 833h1v1h-1zM1485 833h1v1h-1z"/></defs><use href="#gdots" fill="#000"/><use href="#gdots" fill="#C9874F" clip-path="url(#shpclip)"/><line x1="288" y1="563.5" x2="1542" y2="563.5" stroke="#A6A6A6" stroke-width="1" stroke-dasharray="4 3"/><line x1="916.5" y1="226" x2="916.5" y2="896" stroke="#A6A6A6" stroke-width="1" stroke-dasharray="4 3"/><rect x="534.5" y="309.5" width="764" height="509" fill="none" stroke="#5F5F5F" stroke-width="1"/><circle cx="535" cy="309" r="5.8" fill="#fff" stroke="#5F5F5F" stroke-width="2.5"/><circle cx="916.5" cy="309" r="5.8" fill="#fff" stroke="#5F5F5F" stroke-width="2.5"/><circle cx="1298" cy="309" r="5.8" fill="#fff" stroke="#5F5F5F" stroke-width="2.5"/><circle cx="535" cy="563" r="5.8" fill="#fff" stroke="#5F5F5F" stroke-width="2.5"/><circle cx="1298" cy="563" r="5.8" fill="#fff" stroke="#5F5F5F" stroke-width="2.5"/><circle cx="535" cy="818" r="5.8" fill="#fff" stroke="#5F5F5F" stroke-width="2.5"/><circle cx="916.5" cy="818" r="5.8" fill="#fff" stroke="#5F5F5F" stroke-width="2.5"/><circle cx="1298" cy="818" r="5.8" fill="#fff" stroke="#5F5F5F" stroke-width="2.5"/></svg><div class="t" style="left:558.5px;top:707.0px;font-size:40px;color:#EEEEEE;letter-spacing:2.50px;-webkit-text-stroke:0"><span style="letter-spacing:0">[</span>テキスト<span style="letter-spacing:0">]</span></div><div class="t" style="left:813.8px;top:707.0px;font-size:40px;color:#EEEEEE;letter-spacing:2.50px;-webkit-text-stroke:0"><span style="letter-spacing:0">[</span>テキスト<span style="letter-spacing:0">]</span></div><div class="t" style="left:1078.5px;top:707.0px;font-size:40px;color:#EEEEEE;letter-spacing:2.50px;-webkit-text-stroke:0"><span style="letter-spacing:0">[</span>テキスト<span style="letter-spacing:0">]</span></div><div class="t" style="left:686.0px;top:533.6px;font-size:40px;color:#EEEEEE;letter-spacing:2.50px;-webkit-text-stroke:0"><span style="letter-spacing:0">[</span>テキスト<span style="letter-spacing:0">]</span></div><div class="t" style="left:1078.5px;top:533.6px;font-size:40px;color:#EEEEEE;letter-spacing:2.50px;-webkit-text-stroke:0"><span style="letter-spacing:0">[</span>テキスト<span style="letter-spacing:0">]</span></div><div class="t" style="left:818.5px;top:359.0px;font-size:40px;color:#EEEEEE;letter-spacing:2.50px;-webkit-text-stroke:0"><span style="letter-spacing:0">[</span>テキスト<span style="letter-spacing:0">]</span></div><div class="a" style="left:256px;top:900px;width:1299px;height:1px;background:#C6C6C6"></div><div class="t" style="left:268.0px;top:912.5px;font-size:17px;color:#595959;letter-spacing:-1.80px;transform:scaleY(0.9);transform-origin:0 0">ノートを入力</div><div class="a" style="left:345px;top:240px;width:859px;height:489px;border-radius:8px;background:#F0F0F0;border:1px solid #ADADAD;box-shadow:0 20px 60px rgba(0,0,0,0.36);overflow:hidden"><div class="a" style="left:0;top:0;width:856px;height:37px;background:#E6F7F0"></div></div><div class="t" style="left:355.2px;top:251.5px;font-size:15px;color:#1A1A1A">SmartArt</div><div class="t" style="left:417.5px;top:253.1px;font-size:15px;color:#1A1A1A;letter-spacing:-3.69px;transform:scaleY(0.9);transform-origin:0 0">グラフィックの選択</div><div class="t" style="left:1112.0px;top:250.0px;font-size:15px;color:#1A1A1A">?</div><svg style="left:1166px;top:253px" width="14" height="14"><path d="M1 1 L13 13 M13 1 L1 13" stroke="#1A1A1A" stroke-width="1.3"/></svg><div class="a" style="left:354px;top:288px;width:842px;height:394px;border:1px solid #A0A0A0;background:#fff"></div><div class="a" style="left:495px;top:289px;width:1px;height:392px;background:#A0A0A0"></div><div class="a" style="left:901px;top:289px;width:1px;height:392px;background:#A0A0A0"></div><div class="a" style="left:879px;top:291px;width:20px;height:389px;background:#F0F0F0"></div><div class="a" style="left:886px;top:312px;width:6px;height:169px;background:#888"></div><div class="a" style="left:367px;top:349px;width:116px;height:24px;background:#CBCBCB;border:1px dotted #333"></div><div class="t" style="left:401.4px;top:305.2px;font-size:15px;color:#404040;letter-spacing:-3.00px;transform:scaleY(0.9);transform-origin:0 0">すべて</div><div class="t" style="left:399.4px;top:329.2px;font-size:15px;color:#404040;letter-spacing:-3.50px;transform:scaleY(0.9);transform-origin:0 0">リスト</div><div class="t" style="left:402.4px;top:353.5px;font-size:15px;color:#404040;letter-spacing:1.00px;transform:scaleY(0.9);transform-origin:0 0">手順</div><div class="t" style="left:402.4px;top:377.1px;font-size:15px;color:#404040;letter-spacing:1.00px;transform:scaleY(0.9);transform-origin:0 0">循環</div><div class="t" style="left:401.4px;top:401.4px;font-size:15px;color:#404040;letter-spacing:0.67px;transform:scaleY(0.9);transform-origin:0 0">階層構造</div><div class="t" style="left:401.4px;top:425.1px;font-size:15px;color:#404040;letter-spacing:0.33px;transform:scaleY(0.9);transform-origin:0 0">集合関係</div><div class="t" style="left:401.4px;top:448.2px;font-size:15px;color:#404040;letter-spacing:-5.20px;transform:scaleY(0.9);transform-origin:0 0">マトリックス</div><div class="t" style="left:399.4px;top:473.1px;font-size:15px;color:#404040;letter-spacing:-5.00px;transform:scaleY(0.9);transform-origin:0 0">ピラミッド</div><div class="t" style="left:401.4px;top:498.8px;font-size:15px;color:#404040;transform:scaleY(0.9);transform-origin:0 0">図</div><div class="a" style="left:904px;top:555.5px;width:288px;height:124px;border:1px solid #A8A8A8;background:#fff"></div><div class="t" style="left:917.0px;top:534.0px;font-size:15px;color:#404040;letter-spacing:-0.50px;font-weight:bold;transform:scaleY(0.9);transform-origin:0 0;-webkit-text-stroke:0">積み木型の階層</div><div class="t" style="left:916.0px;top:561.0px;font-size:14px;color:#4A4A4A;letter-spacing:-0.94px;transform:scaleY(0.9);transform-origin:0 0;-webkit-text-stroke:0">縦方向<span style="letter-spacing:0"> (</span>上から下<span style="letter-spacing:0">) </span>にまとめた情報のグループ</div><div class="t" style="left:914.0px;top:580.0px;font-size:14px;color:#4A4A4A;letter-spacing:-1.16px;transform:scaleY(0.9);transform-origin:0 0;-webkit-text-stroke:0">と、各グループ内の階層を示すのに使用しま</div><div class="t" style="left:916.0px;top:598.1px;font-size:14px;color:#4A4A4A;letter-spacing:-1.85px;transform:scaleY(0.9);transform-origin:0 0;-webkit-text-stroke:0">す。このレイアウトには接続線がありません。</div><svg style="left:0;top:0" width="1555" height="941"><defs><linearGradient id="gb" x1="0" y1="0" x2="0" y2="1"><stop offset="0" stop-color="#7DADE2"/><stop offset="1" stop-color="#2F6DB5"/></linearGradient><linearGradient id="go" x1="0" y1="0" x2="0" y2="1"><stop offset="0" stop-color="#F2A064"/><stop offset="1" stop-color="#BF5716"/></linearGradient><linearGradient id="gg" x1="0" y1="0" x2="0" y2="1"><stop offset="0" stop-color="#CFCFCF"/><stop offset="1" stop-color="#6F6F6F"/></linearGradient></defs><rect x="919" y="307.5" width="257.5" height="66.39999999999998" rx="4" fill="#9A9A9A" opacity="0.5"/><rect x="919" y="306" width="257.5" height="66.39999999999998" rx="4" fill="url(#gb)"/><rect x="1033.75" y="338.2" width="28" height="2" fill="#fff"/><rect x="919" y="378.8" width="168" height="66.89999999999998" rx="4" fill="#9A9A9A" opacity="0.5"/><rect x="919" y="377.3" width="168" height="66.89999999999998" rx="4" fill="url(#go)"/><rect x="989.0" y="409.75" width="28" height="2" fill="#fff"/><rect x="1092.6" y="378.8" width="83.90000000000009" height="66.89999999999998" rx="4" fill="#9A9A9A" opacity="0.5"/><rect x="1092.6" y="377.3" width="83.90000000000009" height="66.89999999999998" rx="4" fill="url(#go)"/><rect x="1120.55" y="409.75" width="28" height="2" fill="#fff"/><rect x="919" y="450.3" width="82.70000000000005" height="67.19999999999999" rx="4" fill="#9A9A9A" opacity="0.5"/><rect x="919" y="448.8" width="82.70000000000005" height="67.19999999999999" rx="4" fill="url(#gg)"/><rect x="946.35" y="481.4" width="28" height="2" fill="#fff"/><rect x="1004.2" y="450.3" width="82.79999999999995" height="67.19999999999999" rx="4" fill="#9A9A9A" opacity="0.5"/><rect x="1004.2" y="448.8" width="82.79999999999995" height="67.19999999999999" rx="4" fill="url(#gg)"/><rect x="1031.6" y="481.4" width="28" height="2" fill="#fff"/><rect x="1092.6" y="450.3" width="83.90000000000009" height="67.19999999999999" rx="4" fill="#9A9A9A" opacity="0.5"/><rect x="1092.6" y="448.8" width="83.90000000000009" height="67.19999999999999" rx="4" fill="url(#gg)"/><rect x="1120.55" y="481.4" width="28" height="2" fill="#fff"/></svg><div class="a" style="left:1008px;top:688px;width:86px;height:29px;border:1.5px solid #2F72C6;border-radius:4px;background:#FDFDFD"></div><div class="a" style="left:1108px;top:688px;width:86px;height:29px;border:1px solid #D2D2D2;border-radius:4px;background:#FBFBFB"></div><div class="t" style="left:1039.3px;top:697.0px;font-size:16px;color:#1A1A1A;letter-spacing:-1.00px">OK</div><div class="t" style="left:1120.0px;top:695.2px;font-size:15px;color:#1A1A1A;letter-spacing:-4.00px;transform:scaleY(0.9);transform-origin:0 0">キャンセル</div><svg style="left:0;top:0" width="1555" height="941"><defs><clipPath id="galclip"><rect x="496" y="289" width="383" height="391"/></clipPath></defs><g clip-path="url(#galclip)"><rect x="518.1" y="328.6" width="18.30" height="13.40" rx="0.8" fill="#D4D4D4" stroke="#808080" stroke-width="1.25"/><path d="M524.75 335.3 L529.75 335.3" stroke="#7A7A7A" stroke-width="1.2" fill="none"/><rect x="543.2" y="328.6" width="18.30" height="13.40" rx="0.8" fill="#D4D4D4" stroke="#808080" stroke-width="1.25"/><path d="M549.85 335.3 L554.85 335.3" stroke="#7A7A7A" stroke-width="1.2" fill="none"/><rect x="568.2" y="328.6" width="18.30" height="13.40" rx="0.8" fill="#D4D4D4" stroke="#808080" stroke-width="1.25"/><path d="M574.85 335.3 L579.85 335.3" stroke="#7A7A7A" stroke-width="1.2" fill="none"/><polygon points="535.8,332.9 539.8,332.9 539.8,330.0 543.8,335.2 539.8,340.5 539.8,337.6 535.8,337.6" fill="#fff" stroke="#808080" stroke-width="1.25" stroke-linejoin="round"/><polygon points="560.8,332.9 564.8,332.9 564.8,330.0 568.8,335.2 564.8,340.5 564.8,337.6 560.8,337.6" fill="#fff" stroke="#808080" stroke-width="1.25" stroke-linejoin="round"/><polygon points="608.0,335.0 630.0,335.0 630.0,339.0 612.0,339.0 612.0,348.4 608.0,348.4" fill="#D4D4D4" stroke="#808080" stroke-width="1.25" stroke-linejoin="round"/><path d="M616.0 345.0 L624.0 345.0" stroke="#7A7A7A" stroke-width="1" fill="none"/><polygon points="627.0,333.0 630.5,329.5 630.5,333.0" fill="#707070" stroke="#707070" stroke-width="0.5" stroke-linejoin="round"/><polygon points="632.0,328.4 654.0,328.4 654.0,332.4 636.0,332.4 636.0,341.8 632.0,341.8" fill="#D4D4D4" stroke="#808080" stroke-width="1.25" stroke-linejoin="round"/><path d="M640.0 338.4 L648.0 338.4" stroke="#7A7A7A" stroke-width="1" fill="none"/><polygon points="651.0,326.4 654.5,322.9 654.5,326.4" fill="#707070" stroke="#707070" stroke-width="0.5" stroke-linejoin="round"/><polygon points="656.0,321.8 678.0,321.8 678.0,325.8 660.0,325.8 660.0,335.2 656.0,335.2" fill="#D4D4D4" stroke="#808080" stroke-width="1.25" stroke-linejoin="round"/><path d="M664.0 331.8 L672.0 331.8" stroke="#7A7A7A" stroke-width="1" fill="none"/><path d="M703.5 325.3 V336 H717.5 M706.5 325.3 V332.5 H715.5" fill="none" stroke="#808080" stroke-width="1"/><path d="M719.5 341.4 V352 H733.5 M722.5 341.4 V348.5 H731.5" fill="none" stroke="#808080" stroke-width="1"/><rect x="700.7" y="312.6" width="19.00" height="12.70" rx="0.8" fill="#D4D4D4" stroke="#808080" stroke-width="1.25"/><path d="M707.7 318.95000000000005 L712.7 318.95000000000005" stroke="#7A7A7A" stroke-width="1.2" fill="none"/><circle cx="723.7" cy="318.95000000000005" r="1.2" fill="#fff" stroke="#808080" stroke-width="1.25"/><path d="M726.7 318.95000000000005 L731.7 318.95000000000005" stroke="#808080" stroke-width="1" fill="none"/><rect x="717.5" y="329" width="19.00" height="12.70" rx="0.8" fill="#D4D4D4" stroke="#808080" stroke-width="1.25"/><path d="M724.5 335.35 L729.5 335.35" stroke="#7A7A7A" stroke-width="1.2" fill="none"/><circle cx="740.5" cy="335.35" r="1.2" fill="#fff" stroke="#808080" stroke-width="1.25"/><path d="M743.5 335.35 L748.5 335.35" stroke="#808080" stroke-width="1" fill="none"/><rect x="733.5" y="345.4" width="19.00" height="12.70" rx="0.8" fill="#D4D4D4" stroke="#808080" stroke-width="1.25"/><path d="M740.5 351.75 L745.5 351.75" stroke="#7A7A7A" stroke-width="1.2" fill="none"/><circle cx="756.5" cy="351.75" r="1.2" fill="#fff" stroke="#808080" stroke-width="1.25"/><path d="M759.5 351.75 L764.5 351.75" stroke="#808080" stroke-width="1" fill="none"/><polygon points="714.0,331.0 718.0,334.3 714.0,337.6" fill="#fff" stroke="#808080" stroke-width="1.25" stroke-linejoin="round"/><polygon points="730.0,347.4 734.0,350.7 730.0,354.0" fill="#fff" stroke="#808080" stroke-width="1.25" stroke-linejoin="round"/><rect x="788.2" y="326.5" width="14.40" height="9.70" rx="0.8" fill="#D4D4D4" stroke="#808080" stroke-width="1.25"/><path d="M790 328.5 L794 328.5" stroke="#808080" stroke-width="1" fill="none"/><rect x="791.2" y="331.3" width="15.20" height="14.10" rx="0.8" fill="#fff" stroke="#808080" stroke-width="1.25"/><circle cx="794.5" cy="335" r="1.1" fill="#fff" stroke="#808080" stroke-width="1.25"/><path d="M797 335 L801 335" stroke="#808080" stroke-width="1" fill="none"/><polygon points="804.0,328.1 808.0,328.1 808.0,325.0 812.0,330.5 808.0,336.0 808.0,332.9 804.0,332.9" fill="#fff" stroke="#808080" stroke-width="1.25" stroke-linejoin="round"/><rect x="813.2" y="326.5" width="14.40" height="9.70" rx="0.8" fill="#D4D4D4" stroke="#808080" stroke-width="1.25"/><path d="M815 328.5 L819 328.5" stroke="#808080" stroke-width="1" fill="none"/><rect x="816.2" y="331.3" width="15.20" height="14.10" rx="0.8" fill="#fff" stroke="#808080" stroke-width="1.25"/><circle cx="819.5" cy="335" r="1.1" fill="#fff" stroke="#808080" stroke-width="1.25"/><path d="M822 335 L826 335" stroke="#808080" stroke-width="1" fill="none"/><polygon points="829.0,328.1 833.0,328.1 833.0,325.0 837.0,330.5 833.0,336.0 833.0,332.9 829.0,332.9" fill="#fff" stroke="#808080" stroke-width="1.25" stroke-linejoin="round"/><rect x="838.2" y="326.5" width="14.40" height="9.70" rx="0.8" fill="#D4D4D4" stroke="#808080" stroke-width="1.25"/><path d="M840 328.5 L844 328.5" stroke="#808080" stroke-width="1" fill="none"/><rect x="841.2" y="331.3" width="15.20" height="14.10" rx="0.8" fill="#fff" stroke="#808080" stroke-width="1.25"/><circle cx="844.5" cy="335" r="1.1" fill="#fff" stroke="#808080" stroke-width="1.25"/><path d="M847 335 L851 335" stroke="#808080" stroke-width="1" fill="none"/><rect x="518.1" y="391" width="15.50" height="15.40" rx="0.8" fill="#fff" stroke="#808080" stroke-width="1.25"/><rect x="522.1" y="402.7" width="15.30" height="16.30" rx="0.8" fill="#D4D4D4" stroke="#808080" stroke-width="1.25"/><path d="M524.5 405.5 L531 405.5" stroke="#808080" stroke-width="1" fill="none"/><circle cx="525.5" cy="410.4" r="1.3" fill="#D4D4D4" stroke="#808080" stroke-width="1.25"/><path d="M528.5 410.4 L532.5 410.4" stroke="#808080" stroke-width="1" fill="none"/><circle cx="525.5" cy="415" r="1.3" fill="#D4D4D4" stroke="#808080" stroke-width="1.25"/><path d="M528.5 415 L532.5 415" stroke="#808080" stroke-width="1" fill="none"/><polygon points="535.0,394.5 538.5,394.5 538.5,392.0 542.0,396.5 538.5,401.0 538.5,398.5 535.0,398.5" fill="#fff" stroke="#808080" stroke-width="1.25" stroke-linejoin="round"/><rect x="543.1" y="391" width="15.50" height="15.40" rx="0.8" fill="#fff" stroke="#808080" stroke-width="1.25"/><rect x="547.1" y="402.7" width="15.30" height="16.30" rx="0.8" fill="#D4D4D4" stroke="#808080" stroke-width="1.25"/><path d="M549.5 405.5 L556 405.5" stroke="#808080" stroke-width="1" fill="none"/><circle cx="550.5" cy="410.4" r="1.3" fill="#D4D4D4" stroke="#808080" stroke-width="1.25"/><path d="M553.5 410.4 L557.5 410.4" stroke="#808080" stroke-width="1" fill="none"/><circle cx="550.5" cy="415" r="1.3" fill="#D4D4D4" stroke="#808080" stroke-width="1.25"/><path d="M553.5 415 L557.5 415" stroke="#808080" stroke-width="1" fill="none"/><polygon points="560.0,394.5 563.5,394.5 563.5,392.0 567.0,396.5 563.5,401.0 563.5,398.5 560.0,398.5" fill="#fff" stroke="#808080" stroke-width="1.25" stroke-linejoin="round"/><rect x="568.1" y="391" width="15.50" height="15.40" rx="0.8" fill="#fff" stroke="#808080" stroke-width="1.25"/><rect x="572.1" y="402.7" width="15.30" height="16.30" rx="0.8" fill="#D4D4D4" stroke="#808080" stroke-width="1.25"/><path d="M574.5 405.5 L581 405.5" stroke="#808080" stroke-width="1" fill="none"/><circle cx="575.5" cy="410.4" r="1.3" fill="#D4D4D4" stroke="#808080" stroke-width="1.25"/><path d="M578.5 410.4 L582.5 410.4" stroke="#808080" stroke-width="1" fill="none"/><circle cx="575.5" cy="415" r="1.3" fill="#D4D4D4" stroke="#808080" stroke-width="1.25"/><path d="M578.5 415 L582.5 415" stroke="#808080" stroke-width="1" fill="none"/><rect x="608.1" y="397.5" width="19.70" height="17.10" rx="0.8" fill="#fff" stroke="#808080" stroke-width="1.25"/><circle cx="611.1" cy="401.5" r="1.2" fill="#fff" stroke="#808080" stroke-width="1.25"/><path d="M614.1 401.5 L618.1 401.5" stroke="#808080" stroke-width="1" fill="none"/><circle cx="611.1" cy="406.4" r="1.2" fill="#fff" stroke="#808080" stroke-width="1.25"/><path d="M614.1 406.4 L618.1 406.4" stroke="#808080" stroke-width="1" fill="none"/><rect x="612.4" y="410.4" width="17.40" height="7.20" rx="0.8" fill="#D4D4D4" stroke="#808080" stroke-width="1.25"/><path d="M619.1 414.0 L623.1 414.0" stroke="#7A7A7A" stroke-width="1.2" fill="none"/><rect x="631.5" y="397.5" width="19.70" height="17.10" rx="0.8" fill="#fff" stroke="#808080" stroke-width="1.25"/><circle cx="634.5" cy="401.5" r="1.2" fill="#fff" stroke="#808080" stroke-width="1.25"/><path d="M637.5 401.5 L641.5 401.5" stroke="#808080" stroke-width="1" fill="none"/><circle cx="634.5" cy="406.4" r="1.2" fill="#fff" stroke="#808080" stroke-width="1.25"/><path d="M637.5 406.4 L641.5 406.4" stroke="#808080" stroke-width="1" fill="none"/><rect x="636" y="394" width="17.40" height="7.20" rx="0.8" fill="#D4D4D4" stroke="#808080" stroke-width="1.25"/><path d="M642.7 397.6 L646.7 397.6" stroke="#7A7A7A" stroke-width="1.2" fill="none"/><rect x="654.6" y="397.5" width="19.70" height="17.10" rx="0.8" fill="#fff" stroke="#808080" stroke-width="1.25"/><circle cx="657.6" cy="401.5" r="1.2" fill="#fff" stroke="#808080" stroke-width="1.25"/><path d="M660.6 401.5 L664.6 401.5" stroke="#808080" stroke-width="1" fill="none"/><circle cx="657.6" cy="406.4" r="1.2" fill="#fff" stroke="#808080" stroke-width="1.25"/><path d="M660.6 406.4 L664.6 406.4" stroke="#808080" stroke-width="1" fill="none"/><rect x="658.3" y="410.4" width="17.40" height="7.20" rx="0.8" fill="#D4D4D4" stroke="#808080" stroke-width="1.25"/><path d="M665.0 414.0 L669.0 414.0" stroke="#7A7A7A" stroke-width="1.2" fill="none"/><path d="M643 394 C648 387 660 386 665 393" fill="none" stroke="#808080" stroke-width="1"/><path d="M663 391 L666 395.5 L661.5 393.8 Z" fill="#808080"/><path d="M618 418 C623 424 635 424 640 417" fill="none" stroke="#808080" stroke-width="1"/><path d="M637.5 419 L641 415 L641.3 420 Z" fill="#808080"/><circle cx="704.1" cy="401.9" r="4.8" fill="#fff" stroke="#808080" stroke-width="1.25"/><path d="M699.3000000000001 401.9 A4.8 4.8 0 0 0 708.9 401.9 Z" fill="#D4D4D4" stroke="#808080" stroke-width="1"/><path d="M710.6 401.9 L717.1 401.9" stroke="#808080" stroke-width="1" fill="none"/><path d="M706.6 414.3 L718.6 414.3" stroke="#808080" stroke-width="1" fill="none"/><circle cx="728" cy="401.9" r="4.8" fill="#fff" stroke="#808080" stroke-width="1.25"/><path d="M723.2 401.9 A4.8 4.8 0 0 0 732.8 401.9 Z" fill="#D4D4D4" stroke="#808080" stroke-width="1"/><path d="M734.5 401.9 L741 401.9" stroke="#808080" stroke-width="1" fill="none"/><path d="M730.5 414.3 L742.5 414.3" stroke="#808080" stroke-width="1" fill="none"/><circle cx="751.8" cy="401.9" r="4.8" fill="#fff" stroke="#808080" stroke-width="1.25"/><circle cx="751.8" cy="401.9" r="4.8" fill="#D4D4D4" stroke="#808080" stroke-width="1.25"/><path d="M758.3 401.9 L764.8 401.9" stroke="#808080" stroke-width="1" fill="none"/><path d="M754.3 414.3 L766.3 414.3" stroke="#808080" stroke-width="1" fill="none"/><path d="M795.7 392.3 V406.8 A7.3 7.3 0 0 1 795.7 392.3 Z" fill="#fff" stroke="#808080" stroke-width="1"/><path d="M795.7 399.5 L789.7 404" stroke="#808080" stroke-width="0.8"/><path d="M797.7 399.5 L805.7 399.5" stroke="#808080" stroke-width="1" fill="none"/><path d="M791.2 410 L791.2 419.6" stroke="#808080" stroke-width="1" fill="none"/><path d="M821.9 392.3 V406.8 A7.3 7.3 0 0 1 821.9 392.3 Z" fill="#D4D4D4" stroke="#808080" stroke-width="1"/><path d="M821.9 399.5 L815.9 404" stroke="#808080" stroke-width="0.8"/><path d="M823.9 399.5 L831.9 399.5" stroke="#808080" stroke-width="1" fill="none"/><path d="M817.4 410 L817.4 419.6" stroke="#808080" stroke-width="1" fill="none"/><path d="M848 392.3 V406.8 A7.3 7.3 0 0 1 848 392.3 Z" fill="#D4D4D4" stroke="#808080" stroke-width="1"/><path d="M850 399.5 L858 399.5" stroke="#808080" stroke-width="1" fill="none"/><path d="M843.5 410 L843.5 419.6" stroke="#808080" stroke-width="1" fill="none"/><polygon points="522.9,461.5 554.9,461.5 554.9,447.6 571.2,475.2 554.9,502.7 554.9,488.9 522.9,488.9" fill="#fff" stroke="#808080" stroke-width="1.25" stroke-linejoin="round"/><rect x="518.1" y="464" width="20.30" height="22.80" rx="0.8" fill="#D4D4D4" stroke="#808080" stroke-width="1.25"/><path d="M525.25 475.4 L531.25 475.4" stroke="#7A7A7A" stroke-width="1.2" fill="none"/><rect x="542.2" y="464" width="20.30" height="22.80" rx="0.8" fill="#D4D4D4" stroke="#808080" stroke-width="1.25"/><path d="M549.35 475.4 L555.35 475.4" stroke="#7A7A7A" stroke-width="1.2" fill="none"/><rect x="566" y="464" width="20.30" height="22.80" rx="0.8" fill="#D4D4D4" stroke="#808080" stroke-width="1.25"/><path d="M573.15 475.4 L579.15 475.4" stroke="#7A7A7A" stroke-width="1.2" fill="none"/><polygon points="608.4,461.5 674.0,461.5 677.6,464.0 674.0,466.5 608.4,466.5" fill="#D4D4D4" stroke="#808080" stroke-width="1.25" stroke-linejoin="round"/><rect x="608.4" y="466.5" width="21.20" height="19.10" rx="0" fill="#fff" stroke="#808080" stroke-width="1.25"/><path d="M611.5 463.9 L615.0 463.9" stroke="#999" stroke-width="1" fill="none"/><path d="M613.0 476.3 L619.0 476.3" stroke="#7A7A7A" stroke-width="1.1" fill="none"/><polygon points="629.8,465.2 674.0,465.2 677.6,467.7 674.0,470.2 629.8,470.2" fill="#D4D4D4" stroke="#808080" stroke-width="1.25" stroke-linejoin="round"/><rect x="629.8" y="470.2" width="21.20" height="19.10" rx="0" fill="#fff" stroke="#808080" stroke-width="1.25"/><path d="M632.9 467.59999999999997 L636.4 467.59999999999997" stroke="#999" stroke-width="1" fill="none"/><path d="M634.4 480.0 L640.4 480.0" stroke="#7A7A7A" stroke-width="1.1" fill="none"/><polygon points="651.2,468.9 674.0,468.9 677.6,471.4 674.0,473.9 651.2,473.9" fill="#D4D4D4" stroke="#808080" stroke-width="1.25" stroke-linejoin="round"/><rect x="651.1999999999999" y="473.9" width="21.20" height="19.10" rx="0" fill="#fff" stroke="#808080" stroke-width="1.25"/><path d="M654.3 471.29999999999995 L657.8 471.29999999999995" stroke="#999" stroke-width="1" fill="none"/><path d="M655.8 483.7 L661.8 483.7" stroke="#7A7A7A" stroke-width="1.1" fill="none"/><polygon points="698.2,461.5 738.4,461.5 738.4,447.6 766.6,475.2 738.4,503.2 738.4,489.3 698.2,489.3" fill="#D4D4D4" stroke="#808080" stroke-width="1.25" stroke-linejoin="round"/><path d="M707.0 475.4 L713.0 475.4" stroke="#7A7A7A" stroke-width="1.2" fill="none"/><path d="M725.8 475.4 L731.8 475.4" stroke="#7A7A7A" stroke-width="1.2" fill="none"/><path d="M744.6 475.4 L750.6 475.4" stroke="#7A7A7A" stroke-width="1.2" fill="none"/><polygon points="793.6,471.7 803.9,471.7 803.9,466.2 814.1,476.0 803.9,485.8 803.9,480.3 793.6,480.3" fill="#fff" stroke="#808080" stroke-width="1.25" stroke-linejoin="round"/><circle cx="791.6" cy="475.5" r="6.8" fill="#D4D4D4" stroke="#808080" stroke-width="1.25"/><path d="M789.6 475.5 L793.6 475.5" stroke="#7A7A7A" stroke-width="1.2" fill="none"/><path d="M801.2 472.2 h1.6 M804.0 472.2 h3.4 M801.2 478.8 h1.6 M804.0 478.8 h3.4" stroke="#8A8A8A" stroke-width="1.3"/><polygon points="817.5,471.7 827.8,471.7 827.8,466.2 838.0,476.0 827.8,485.8 827.8,480.3 817.5,480.3" fill="#fff" stroke="#808080" stroke-width="1.25" stroke-linejoin="round"/><circle cx="815.5" cy="475.5" r="6.8" fill="#D4D4D4" stroke="#808080" stroke-width="1.25"/><path d="M813.5 475.5 L817.5 475.5" stroke="#7A7A7A" stroke-width="1.2" fill="none"/><path d="M825.1 472.2 h1.6 M827.9 472.2 h3.4 M825.1 478.8 h1.6 M827.9 478.8 h3.4" stroke="#8A8A8A" stroke-width="1.3"/><polygon points="841.5,471.7 851.8,471.7 851.8,466.2 862.0,476.0 851.8,485.8 851.8,480.3 841.5,480.3" fill="#fff" stroke="#808080" stroke-width="1.25" stroke-linejoin="round"/><circle cx="839.5" cy="475.5" r="6.8" fill="#D4D4D4" stroke="#808080" stroke-width="1.25"/><path d="M837.5 475.5 L841.5 475.5" stroke="#7A7A7A" stroke-width="1.2" fill="none"/><path d="M849.1 472.2 h1.6 M851.9 472.2 h3.4 M849.1 478.8 h1.6 M851.9 478.8 h3.4" stroke="#8A8A8A" stroke-width="1.3"/><circle cx="525.8" cy="547.6" r="7.4" fill="#D4D4D4" stroke="#808080" stroke-width="1.25"/><circle cx="525.8" cy="547.6" r="3.6" fill="#fff" stroke="#808080" stroke-width="1.25"/><circle cx="539.1999999999999" cy="547.2" r="3.3" fill="#D4D4D4" stroke="#808080" stroke-width="1.25"/><circle cx="547.8" cy="547.2" r="3.3" fill="#D4D4D4" stroke="#808080" stroke-width="1.25"/><path d="M529.8 539 L534.8 534" stroke="#808080" stroke-width="1.2" fill="none"/><path d="M534.8 558 L539.8 553" stroke="#808080" stroke-width="1.2" fill="none"/><path d="M543.3 558 L548.3 553" stroke="#808080" stroke-width="1.2" fill="none"/><circle cx="561.1" cy="547.6" r="7.4" fill="#D4D4D4" stroke="#808080" stroke-width="1.25"/><circle cx="561.1" cy="547.6" r="3.6" fill="#fff" stroke="#808080" stroke-width="1.25"/><circle cx="574.5" cy="547.2" r="3.3" fill="#D4D4D4" stroke="#808080" stroke-width="1.25"/><circle cx="583.1" cy="547.2" r="3.3" fill="#D4D4D4" stroke="#808080" stroke-width="1.25"/><path d="M565.1 539 L570.1 534" stroke="#808080" stroke-width="1.2" fill="none"/><path d="M570.1 558 L575.1 553" stroke="#808080" stroke-width="1.2" fill="none"/><path d="M578.6 558 L583.6 553" stroke="#808080" stroke-width="1.2" fill="none"/><polygon points="608.4,541.4 666.5,541.4 666.5,536.5 676.9,546.6 666.5,557.0 666.5,551.8 608.4,551.8 613.0,546.6" fill="#fff" stroke="#808080" stroke-width="1.25" stroke-linejoin="round"/><circle cx="620" cy="546.6" r="2.4" fill="#D4D4D4" stroke="#808080" stroke-width="1.25"/><circle cx="640" cy="546.6" r="2.4" fill="#D4D4D4" stroke="#808080" stroke-width="1.25"/><circle cx="660" cy="546.6" r="2.4" fill="#D4D4D4" stroke="#808080" stroke-width="1.25"/><path d="M616.5 529 L620.5 529" stroke="#7A7A7A" stroke-width="1.2" fill="none"/><path d="M659.5 529 L663.5 529" stroke="#7A7A7A" stroke-width="1.2" fill="none"/><path d="M635.5 561.5 L640.5 561.5" stroke="#7A7A7A" stroke-width="1.2" fill="none"/><polygon points="698.2,539.9 716.7,539.9 721.7,545.4 716.7,550.8 698.2,550.8 703.2,545.4" fill="#D4D4D4" stroke="#808080" stroke-width="1.25" stroke-linejoin="round"/><path d="M707.7 545.35 L712.7 545.35" stroke="#7A7A7A" stroke-width="1.2" fill="none"/><polygon points="721.4,539.9 739.9,539.9 744.9,545.4 739.9,550.8 721.4,550.8 726.4,545.4" fill="#D4D4D4" stroke="#808080" stroke-width="1.25" stroke-linejoin="round"/><path d="M730.9000000000001 545.35 L735.9000000000001 545.35" stroke="#7A7A7A" stroke-width="1.2" fill="none"/><polygon points="744.6,539.9 763.1,539.9 768.1,545.4 763.1,550.8 744.6,550.8 749.6,545.4" fill="#D4D4D4" stroke="#808080" stroke-width="1.25" stroke-linejoin="round"/><path d="M754.1 545.35 L759.1 545.35" stroke="#7A7A7A" stroke-width="1.2" fill="none"/><polygon points="788.2,539.9 807.2,539.9 812.2,545.4 807.2,550.8 788.2,550.8" fill="#D4D4D4" stroke="#808080" stroke-width="1.25" stroke-linejoin="round"/><path d="M796.7 545.35 L801.7 545.35" stroke="#7A7A7A" stroke-width="1.2" fill="none"/><polygon points="811.0,539.9 830.0,539.9 835.0,545.4 830.0,550.8 811.0,550.8 816.0,545.4" fill="#D4D4D4" stroke="#808080" stroke-width="1.25" stroke-linejoin="round"/><path d="M819.5 545.35 L824.5 545.35" stroke="#7A7A7A" stroke-width="1.2" fill="none"/><polygon points="833.8,539.9 852.8,539.9 857.8,545.4 852.8,550.8 833.8,550.8 838.8,545.4" fill="#D4D4D4" stroke="#808080" stroke-width="1.25" stroke-linejoin="round"/><path d="M842.3000000000001 545.35 L847.3000000000001 545.35" stroke="#7A7A7A" stroke-width="1.2" fill="none"/><polygon points="518.3,597.7 539.0,597.7 543.0,602.6 539.0,607.4 518.3,607.4 522.0,602.6" fill="#D4D4D4" stroke="#808080" stroke-width="1.25" stroke-linejoin="round"/><path d="M528.5 602.5500000000001 L533.5 602.5500000000001" stroke="#7A7A7A" stroke-width="1.2" fill="none"/><polygon points="542.0,598.5 561.0,598.5 565.0,602.6 561.0,606.6 542.0,606.6 545.5,602.6" fill="#fff" stroke="#808080" stroke-width="1.25" stroke-linejoin="round"/><path d="M551.25 602.5500000000001 L555.75 602.5500000000001" stroke="#7A7A7A" stroke-width="1.2" fill="none"/><polygon points="564.0,598.5 583.0,598.5 587.0,602.6 583.0,606.6 564.0,606.6 567.5,602.6" fill="#fff" stroke="#808080" stroke-width="1.25" stroke-linejoin="round"/><path d="M573.25 602.5500000000001 L577.75 602.5500000000001" stroke="#7A7A7A" stroke-width="1.2" fill="none"/><polygon points="518.3,610.5 539.0,610.5 543.0,615.4 539.0,620.2 518.3,620.2 522.0,615.4" fill="#D4D4D4" stroke="#808080" stroke-width="1.25" stroke-linejoin="round"/><path d="M528.5 615.35 L533.5 615.35" stroke="#7A7A7A" stroke-width="1.2" fill="none"/><polygon points="542.0,611.3 561.0,611.3 565.0,615.4 561.0,619.4 542.0,619.4 545.5,615.4" fill="#fff" stroke="#808080" stroke-width="1.25" stroke-linejoin="round"/><path d="M551.25 615.35 L555.75 615.35" stroke="#7A7A7A" stroke-width="1.2" fill="none"/><polygon points="564.0,611.3 583.0,611.3 587.0,615.4 583.0,619.4 564.0,619.4 567.5,615.4" fill="#fff" stroke="#808080" stroke-width="1.25" stroke-linejoin="round"/><path d="M573.25 615.35 L577.75 615.35" stroke="#7A7A7A" stroke-width="1.2" fill="none"/><polygon points="518.3,623.0 539.0,623.0 543.0,627.9 539.0,632.7 518.3,632.7 522.0,627.9" fill="#D4D4D4" stroke="#808080" stroke-width="1.25" stroke-linejoin="round"/><path d="M528.5 627.85 L533.5 627.85" stroke="#7A7A7A" stroke-width="1.2" fill="none"/><polygon points="542.0,623.8 561.0,623.8 565.0,627.9 561.0,631.9 542.0,631.9 545.5,627.9" fill="#fff" stroke="#808080" stroke-width="1.25" stroke-linejoin="round"/><path d="M551.25 627.85 L555.75 627.85" stroke="#7A7A7A" stroke-width="1.2" fill="none"/><polygon points="564.0,623.8 583.0,623.8 587.0,627.9 583.0,631.9 564.0,631.9 567.5,627.9" fill="#fff" stroke="#808080" stroke-width="1.25" stroke-linejoin="round"/><path d="M573.25 627.85 L577.75 627.85" stroke="#7A7A7A" stroke-width="1.2" fill="none"/><rect x="620.8" y="587.4" width="56.70" height="15.00" rx="0.8" fill="#fff" stroke="#808080" stroke-width="1.25"/><circle cx="624.6" cy="592.0" r="1.3" fill="#D4D4D4" stroke="#808080" stroke-width="1.25"/><path d="M627.4 592.0 L635.6 592.0" stroke="#808080" stroke-width="1.3" fill="none"/><circle cx="624.6" cy="597.0" r="1.3" fill="#D4D4D4" stroke="#808080" stroke-width="1.25"/><path d="M627.4 597.0 L635.6 597.0" stroke="#808080" stroke-width="1.3" fill="none"/><polygon points="606.8,587.4 613.8,591.4 620.8,587.4 620.8,604.4 613.8,608.8 606.8,604.4" fill="#D4D4D4" stroke="#808080" stroke-width="1.25" stroke-linejoin="round"/><path d="M611.8 597.4 L615.8 597.4" stroke="#7A7A7A" stroke-width="1.2" fill="none"/><rect x="620.8" y="605.2" width="56.70" height="15.00" rx="0.8" fill="#fff" stroke="#808080" stroke-width="1.25"/><circle cx="624.6" cy="609.8000000000001" r="1.3" fill="#D4D4D4" stroke="#808080" stroke-width="1.25"/><path d="M627.4 609.8000000000001 L635.6 609.8000000000001" stroke="#808080" stroke-width="1.3" fill="none"/><circle cx="624.6" cy="614.8000000000001" r="1.3" fill="#D4D4D4" stroke="#808080" stroke-width="1.25"/><path d="M627.4 614.8000000000001 L635.6 614.8000000000001" stroke="#808080" stroke-width="1.3" fill="none"/><polygon points="606.8,605.2 613.8,609.2 620.8,605.2 620.8,622.2 613.8,626.6 606.8,622.2" fill="#D4D4D4" stroke="#808080" stroke-width="1.25" stroke-linejoin="round"/><path d="M611.8 615.2 L615.8 615.2" stroke="#7A7A7A" stroke-width="1.2" fill="none"/><rect x="620.8" y="623" width="56.70" height="15.00" rx="0.8" fill="#fff" stroke="#808080" stroke-width="1.25"/><circle cx="624.6" cy="627.6" r="1.3" fill="#D4D4D4" stroke="#808080" stroke-width="1.25"/><path d="M627.4 627.6 L635.6 627.6" stroke="#808080" stroke-width="1.3" fill="none"/><circle cx="624.6" cy="632.6" r="1.3" fill="#D4D4D4" stroke="#808080" stroke-width="1.25"/><path d="M627.4 632.6 L635.6 632.6" stroke="#808080" stroke-width="1.3" fill="none"/><polygon points="606.8,623.0 613.8,627.0 620.8,623.0 620.8,640.0 613.8,644.4 606.8,640.0" fill="#D4D4D4" stroke="#808080" stroke-width="1.25" stroke-linejoin="round"/><path d="M611.8 633 L615.8 633" stroke="#7A7A7A" stroke-width="1.2" fill="none"/><path d="M712.6 615.3 L718.3 610.4 H721.5 M712.6 615.3 L718.3 620.2 H721.5 M724.2 610.4 H726.4 M724.2 620.2 H726.4 M729.2 610.4 H732.2 L737.6 615.3 M729.2 620.2 H732.2 L737.6 615.3" fill="none" stroke="#808080" stroke-width="1.2"/><circle cx="705.9" cy="615.3" r="7.4" fill="#D4D4D4" stroke="#808080" stroke-width="1.25"/><path d="M703.6999999999999 615.3 L708.1 615.3" stroke="#7A7A7A" stroke-width="1.2" fill="none"/><circle cx="744.7" cy="615.3" r="7.4" fill="#D4D4D4" stroke="#808080" stroke-width="1.25"/><path d="M742.5 615.3 L746.9000000000001 615.3" stroke="#7A7A7A" stroke-width="1.2" fill="none"/><circle cx="760" cy="615.3" r="7.4" fill="#D4D4D4" stroke="#808080" stroke-width="1.25"/><path d="M757.8 615.3 L762.2 615.3" stroke="#7A7A7A" stroke-width="1.2" fill="none"/><circle cx="787.9" cy="615.8" r="2" fill="#D4D4D4" stroke="#808080" stroke-width="1.25"/><circle cx="794" cy="611" r="3.4" fill="#D4D4D4" stroke="#808080" stroke-width="1.25"/><circle cx="794" cy="621" r="3.4" fill="#D4D4D4" stroke="#808080" stroke-width="1.25"/><circle cx="801.4" cy="616" r="3.4" fill="#D4D4D4" stroke="#808080" stroke-width="1.25"/><rect x="799.6" y="608.6" width="2" height="2" fill="#D4D4D4" stroke="#808080" stroke-width="0.8"/><rect x="799.6" y="621.4" width="2" height="2" fill="#D4D4D4" stroke="#808080" stroke-width="0.8"/><path d="M803.4 607.6 C807.6 611 807.6 621 803.4 624.4 M816.4 607.6 C812.2 611 812.2 621 816.4 624.4 M833.8 607.6 C838 611 838 621 833.8 624.4 M846.4 607.6 C842.2 611 842.2 621 846.4 624.4" fill="none" stroke="#808080" stroke-width="1.3"/><circle cx="820.4" cy="615.8" r="5.8" fill="#D4D4D4" stroke="#808080" stroke-width="1.25"/><circle cx="828.4" cy="615.8" r="5.8" fill="#D4D4D4" stroke="#808080" stroke-width="1.25"/><path d="M818.6 615.8 L822.1999999999999 615.8" stroke="#7A7A7A" stroke-width="1.2" fill="none"/><path d="M826.6 615.8 L830.1999999999999 615.8" stroke="#7A7A7A" stroke-width="1.2" fill="none"/><circle cx="852" cy="615.8" r="7" fill="#D4D4D4" stroke="#808080" stroke-width="1.25"/><path d="M850.0 615.8 L854.0 615.8" stroke="#7A7A7A" stroke-width="1.2" fill="none"/><circle cx="518.5" cy="674" r="0.9" fill="#D4D4D4" stroke="#808080" stroke-width="1.25"/><circle cx="522.5" cy="672.6" r="1.1" fill="#D4D4D4" stroke="#808080" stroke-width="1.25"/><circle cx="525.6" cy="671" r="0.8" fill="#D4D4D4" stroke="#808080" stroke-width="1.25"/><circle cx="531" cy="673.4" r="2.6" fill="#D4D4D4" stroke="#808080" stroke-width="1.6"/><circle cx="536.5" cy="673.2" r="0.9" fill="#D4D4D4" stroke="#808080" stroke-width="1.25"/><circle cx="539.2" cy="674.5" r="0.7" fill="#D4D4D4" stroke="#808080" stroke-width="1.25"/><path d="M543.5 672.4 L547.5 680" stroke="#808080" stroke-width="2" fill="none"/><path d="M548.5 672.4 L552.5 680" stroke="#808080" stroke-width="2" fill="none"/><path d="M553.5 672.4 L557.5 680" stroke="#808080" stroke-width="2" fill="none"/><circle cx="576.6" cy="683" r="11.4" fill="#D4D4D4" stroke="#808080" stroke-width="1.25"/><rect x="628" y="658.8" width="23.70" height="14.20" rx="0.8" fill="#D4D4D4" stroke="#808080" stroke-width="1.25"/><path d="M637.3 665.2 L642.3 665.2" stroke="#7A7A7A" stroke-width="1.2" fill="none"/><path d="M636.8 673 V677 H634.4 M643.2 673 V677 H645.6 M628 678.6 H652" fill="none" stroke="#808080" stroke-width="1.2"/><rect x="698" y="658.8" width="58.60" height="15.70" rx="0.8" fill="#D4D4D4" stroke="#808080" stroke-width="1.25"/><path d="M702 666 L708 666" stroke="#7A7A7A" stroke-width="1.2" fill="none"/><path d="M744 674.5 V670.2 H749.2 V674.5 M703 678.6 H762" fill="none" stroke="#808080" stroke-width="1.4"/><rect x="788.6" y="666.2" width="32.60" height="10.80" rx="0.8" fill="#D4D4D4" stroke="#808080" stroke-width="1.25"/><rect x="823.6" y="666.2" width="32.80" height="10.80" rx="0.8" fill="#D4D4D4" stroke="#808080" stroke-width="1.25"/><path d="M802.4 670.2 L807.4 670.2" stroke="#7A7A7A" stroke-width="1.2" fill="none"/><path d="M837.5 670.2 L842.5 670.2" stroke="#7A7A7A" stroke-width="1.2" fill="none"/><path d="M801.4 674 V679 M808.4 674 V679 M836.4 674 V679 M843.4 674 V679 M802 673.6 H808 M837 673.6 H843" fill="none" stroke="#808080" stroke-width="1.1"/></g><path d="M371.2 306.2 H382 L386.6 311.8 H378 V318.4 H371.2 L375 312.2 Z" fill="#C8C8C8" stroke="#5A5A5A" stroke-width="1.3"/><rect x="378.2" y="311.4" width="8.6" height="9" fill="#fff" stroke="#5A5A5A" stroke-width="1.3"/><path d="M380 314 H381 M382.2 314 H385.4 M380 316.4 H381 M382.2 316.4 H385.4 M380 318.6 H381 M382.2 318.6 H385.4" stroke="#5A5A5A" stroke-width="0.8"/><rect x="371.5" y="330.5" width="3.6" height="3.4" fill="#fff" stroke="#5A5A5A" stroke-width="1.3"/><rect x="376.8" y="330.5" width="10.2" height="3.4" fill="#C8C8C8" stroke="#5A5A5A" stroke-width="1.3"/><rect x="371.5" y="335.5" width="3.6" height="3.4" fill="#fff" stroke="#5A5A5A" stroke-width="1.3"/><rect x="376.8" y="335.5" width="10.2" height="3.4" fill="#C8C8C8" stroke="#5A5A5A" stroke-width="1.3"/><rect x="371.5" y="340.5" width="3.6" height="3.4" fill="#fff" stroke="#5A5A5A" stroke-width="1.3"/><rect x="376.8" y="340.5" width="10.2" height="3.4" fill="#C8C8C8" stroke="#5A5A5A" stroke-width="1.3"/><path d="M371.6 359.2 H374.1 V357 L377.20000000000005 360.6 L374.1 364.2 V362 H371.6 Z" fill="#E8E8E8" stroke="#5A5A5A" stroke-width="1.2"/><path d="M376.6 359.2 H379.1 V357 L382.20000000000005 360.6 L379.1 364.2 V362 H376.6 Z" fill="#E8E8E8" stroke="#5A5A5A" stroke-width="1.2"/><path d="M381.6 359.2 H384.1 V357 L387.20000000000005 360.6 L384.1 364.2 V362 H381.6 Z" fill="#E8E8E8" stroke="#5A5A5A" stroke-width="1.2"/><rect x="373.6" y="378.5" width="3.4" height="3.4" fill="#fff" stroke="#5A5A5A" stroke-width="1.2"/><rect x="384.2" y="383.5" width="3.2" height="3.4" fill="#fff" stroke="#5A5A5A" stroke-width="1.2"/><rect x="377.4" y="389" width="3.4" height="3.4" fill="#fff" stroke="#5A5A5A" stroke-width="1.2"/><path d="M379.6 379.2 H384.6 V381.4 M372 384.2 L374.6 386.4 L372.6 388 M383.4 388.6 L381.8 390.4" fill="none" stroke="#5A5A5A" stroke-width="1.3"/><rect x="376.4" y="402.4" width="6" height="3.8" fill="#C8C8C8" stroke="#5A5A5A" stroke-width="1.2"/><path d="M379.4 406.2 V408.8 M373.4 411.4 V408.8 H385.4 V411.4 M379.4 408.8 V411.4" fill="none" stroke="#5A5A5A" stroke-width="1.2"/><rect x="371.6" y="411.4" width="3.6" height="3.6" fill="#fff" stroke="#5A5A5A" stroke-width="1.2"/><rect x="377.6" y="411.4" width="3.6" height="3.6" fill="#fff" stroke="#5A5A5A" stroke-width="1.2"/><rect x="383.6" y="411.4" width="3.6" height="3.6" fill="#fff" stroke="#5A5A5A" stroke-width="1.2"/><rect x="371.6" y="426.4" width="14.4" height="14" fill="#fff" stroke="#5A5A5A" stroke-width="1.3"/><rect x="372" y="433.4" width="13.6" height="6.6" fill="#C8C8C8"/><path d="M371.6 433.4 H386" stroke="#5A5A5A" stroke-width="1.2"/><path d="M375.4 432.4 V428 M373.6 429.8 L375.4 428 L377.2 429.8 M381.8 434.6 V439 M380 437.2 L381.8 439 L383.6 437.2" fill="none" stroke="#5A5A5A" stroke-width="1.2"/><path d="M375.6 449.4 H382.6 L386.6 453.4 V460.4 L382.6 464.4 H375.6 L371.6 460.4 V453.4 Z" fill="#C8C8C8" stroke="#5A5A5A" stroke-width="1.3"/><path d="M379.1 449.6 V464.2 M371.8 456.9 H386.4" stroke="#fff" stroke-width="2.2"/><path d="M377 473.4 H380.8 L386.6 487.6 H371.2 Z" fill="#C8C8C8" stroke="#5A5A5A" stroke-width="1.3"/><path d="M375.4 477.4 H382.4 M374.2 480.8 H383.6 M372.8 484.2 H385.2" stroke="#fff" stroke-width="1.1"/><rect x="372.6" y="498.4" width="13.2" height="13" fill="#fff" stroke="#5A5A5A" stroke-width="1.3"/><circle cx="383" cy="501.8" r="1.2" fill="#C0C0C0"/><path d="M374.4 509.6 L377.6 505.4 L381 509.6 Z M379.6 506.4 L384.6 509.6 H381.6 Z" fill="#5A5A5A"/></svg></body></html>
